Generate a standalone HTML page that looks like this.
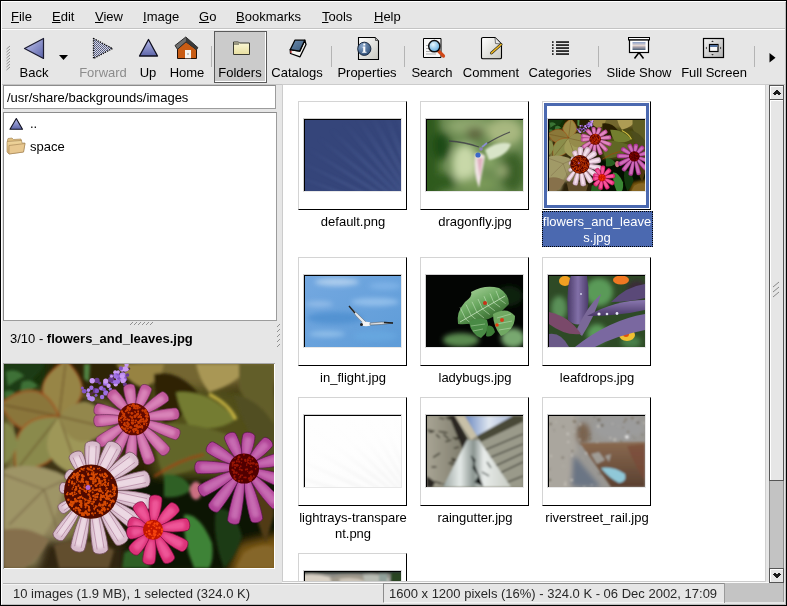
<!DOCTYPE html><html><head><meta charset="utf-8"><style>
*{margin:0;padding:0;box-sizing:border-box}
html,body{width:787px;height:606px;overflow:hidden;background:#e6e6e6}
body{position:relative;-webkit-font-smoothing:antialiased;font-family:"Liberation Sans",sans-serif;font-size:13px;color:#000}
.a{position:absolute}
.t{position:absolute;white-space:pre;line-height:16px;will-change:transform}
.c{text-align:center}
.u{text-decoration:underline;text-underline-offset:1px}
svg{position:absolute;overflow:hidden}
.fr{position:absolute;width:109px;height:109px;background:#fff;border-top:1px solid #d4d4d4;border-left:1px solid #d4d4d4;border-right:1px solid #000;border-bottom:1px solid #000}
.im{position:absolute;width:99px;height:74px;border-top:1px solid #d0d0d0;border-left:1px solid #d0d0d0;border-right:1px solid #e8e8e8;border-bottom:1px solid #e8e8e8}
.im2{position:absolute;left:0;top:0;width:97px;height:72px;border-top:1px solid #000;border-left:1px solid #000;overflow:hidden}
.lb{position:absolute;will-change:transform;width:122px;text-align:center;line-height:16px;white-space:pre}
</style></head><body>
<div class="a" style="left:0px;top:0px;width:787px;height:606px;background:#000"></div>
<div class="a" style="left:1px;top:1px;width:785px;height:604px;background:#e6e6e6"></div>
<div class="a" style="left:1px;top:1px;width:785px;height:1px;background:#fff"></div>
<div class="a" style="left:1px;top:1px;width:1px;height:603px;background:#fff"></div>
<div class="a" style="left:785px;top:2px;width:1px;height:603px;background:#bdbdbd"></div>
<div class="a" style="left:2px;top:604px;width:784px;height:1px;background:#bdbdbd"></div>
<div class="t" style="left:11px;top:9px;"><span class="u">F</span>ile</div>
<div class="t" style="left:52px;top:9px;"><span class="u">E</span>dit</div>
<div class="t" style="left:95px;top:9px;"><span class="u">V</span>iew</div>
<div class="t" style="left:143px;top:9px;"><span class="u">I</span>mage</div>
<div class="t" style="left:199px;top:9px;"><span class="u">G</span>o</div>
<div class="t" style="left:236px;top:9px;"><span class="u">B</span>ookmarks</div>
<div class="t" style="left:322px;top:9px;"><span class="u">T</span>ools</div>
<div class="t" style="left:374px;top:9px;"><span class="u">H</span>elp</div>
<div class="a" style="left:2px;top:28px;width:783px;height:1px;background:#c4c4c4"></div>
<div class="a" style="left:2px;top:29px;width:783px;height:1px;background:#fff"></div>

<div class="a" style="left:214px;top:31px;width:53px;height:52px;border:1px solid #5a5a5a;background:#cbcbcb"></div>
<div class="a" style="left:215px;top:81px;width:51px;height:1px;background:#fff"></div>
<div class="a" style="left:265px;top:32px;width:1px;height:50px;background:#fff"></div>
<svg style="left:0;top:0" width="787" height="90" viewBox="0 0 787 90">
<defs>
<linearGradient id="gb" x1="0" y1="0" x2="1" y2="1"><stop offset="0" stop-color="#c4c8f0"/><stop offset="1" stop-color="#5a62a8"/></linearGradient>
<linearGradient id="gu" x1="0" y1="0" x2="0" y2="1"><stop offset="0" stop-color="#b8bcec"/><stop offset="1" stop-color="#5c64a8"/></linearGradient>
<pattern id="chk" width="2" height="2" patternUnits="userSpaceOnUse"><rect width="2" height="2" fill="#d8d8e0"/><rect width="1" height="1" fill="#505880"/><rect x="1" y="1" width="1" height="1" fill="#606890"/></pattern>
<linearGradient id="gf" x1="0" y1="0" x2="0" y2="1"><stop offset="0" stop-color="#fbf8d8"/><stop offset="1" stop-color="#e8dfa0"/></linearGradient>
<linearGradient id="gp" x1="0" y1="0" x2="1" y2="1"><stop offset="0" stop-color="#ffffff"/><stop offset="1" stop-color="#c8c8c0"/></linearGradient>
<linearGradient id="gfs" x1="0" y1="0" x2="1" y2="1"><stop offset="0" stop-color="#f4f4f4"/><stop offset="1" stop-color="#b0b0b0"/></linearGradient>
<radialGradient id="gl" cx="0.4" cy="0.35" r="0.7"><stop offset="0" stop-color="#e8f8ff"/><stop offset="1" stop-color="#58a8e0"/></radialGradient>
<radialGradient id="gi" cx="0.35" cy="0.3" r="0.8"><stop offset="0" stop-color="#8aa8cc"/><stop offset="1" stop-color="#284870"/></radialGradient>
<linearGradient id="gss" x1="0" y1="0" x2="0" y2="1"><stop offset="0" stop-color="#8aa0c8"/><stop offset="0.45" stop-color="#e8d8d0"/><stop offset="0.6" stop-color="#b0a8b0"/><stop offset="1" stop-color="#4a6078"/></linearGradient>
<linearGradient id="gbk" x1="0" y1="0" x2="1" y2="1"><stop offset="0" stop-color="#6a8cb0"/><stop offset="1" stop-color="#3a5878"/></linearGradient>
</defs>
<!-- grip -->
<g stroke="#8a8a8a" stroke-width="0.9">
<path d="M6.5 49l3.5-3M6.5 52l3.5-3M6.5 55l3.5-3M6.5 58l3.5-3M6.5 61l3.5-3M6.5 64l3.5-3M6.5 67l3.5-3M6.5 70l3.5-3"/>
</g>
<!-- back -->
<path d="M24.5 48.5 L43.5 38.5 L43.5 58.5 Z" fill="url(#gb)" stroke="#1a1a30" stroke-width="1.2" stroke-linejoin="round"/>
<path d="M59 55 L68 55 L63.5 60 Z" fill="#000"/>
<!-- forward -->
<path d="M93.5 38.5 L112.5 48.5 L93.5 58.5 Z" fill="url(#chk)" stroke="#000" stroke-width="1.3" stroke-dasharray="1.2 1.2" stroke-linejoin="round"/>
<!-- up -->
<path d="M148.5 39.5 L157.5 56 L139.5 56 Z" fill="url(#gu)" stroke="#101020" stroke-width="1.3" stroke-linejoin="round"/>
<!-- home -->
<path d="M177.5 48.5 L186 41.5 L196.5 49.5 L196.5 58.5 L177.5 58.5 Z" fill="#c85c14" stroke="#201008" stroke-width="1"/>
<path d="M175 45.5 L185.8 37 L197.8 47.5 L196.5 49.8 L186 41.8 L177.5 49.3 Z" fill="#6e6e6e" stroke="#2a2a2a" stroke-width="1" stroke-linejoin="round"/>
<path d="M185.8 37 L197.8 47.5 L196.5 49.8 L186 41.8 Z" fill="#3a3a3a"/>
<rect x="185" y="50" width="6" height="8.3" fill="#f4f4f0"/>
<rect x="187.5" y="53.5" width="1" height="1" fill="#333"/>
<!-- folder -->
<path d="M233.5 42 L238.5 42 L239.5 43 L249.5 43 L249.5 54.5 L233.5 54.5 Z" fill="url(#gf)" stroke="#3a3a30" stroke-width="1"/>
<path d="M234 44h5" stroke="#3a3a30" stroke-width="1"/>
<!-- book -->
<path d="M290.2 49.7 L299.7 51.1 L304.8 40.2 L306 44.5 L300 56.8 L290.5 53.5 Z" fill="#f4f4f0" stroke="#000" stroke-width="1.3" stroke-linejoin="round"/>
<path d="M291 50.5 L291 53" stroke="#d04040" stroke-width="1.3"/>
<path d="M294.9 40.2 L304.8 40.2 L299.7 51.1 L290.2 49.7 Z" fill="url(#gbk)" stroke="#000" stroke-width="1.3" stroke-linejoin="round"/>
<!-- properties -->
<path d="M358.5 37.5 L375 37.5 L378.5 41 L378.5 59.5 L358.5 59.5 Z" fill="url(#gp)" stroke="#000" stroke-width="1.1"/>
<path d="M375.5 38 L375.5 40.5 L378 40.5" stroke="#555" stroke-width="1" fill="#bbb"/>
<circle cx="364.3" cy="48.8" r="6.6" fill="url(#gi)" stroke="#1a2a40" stroke-width="1"/>
<path d="M363.2 46.5h2.1v5.2h1.2v1h-4.3v-1h1v-4.2h-1z M363.3 43.6h2v1.8h-2z" fill="#fff"/>
<!-- search -->
<path d="M423.5 38.5 L441 38.5 L441 57.5 L423.5 57.5 Z" fill="#f8f8f8" stroke="#000" stroke-width="1"/>
<path d="M426 45.5h4M426 48.5h4M426 51.5h6M426 54h10" stroke="#999" stroke-width="0.8"/>
<path d="M438.5 51 L443.5 56" stroke="#d04818" stroke-width="3.2" stroke-linecap="round"/>
<circle cx="434.3" cy="46.2" r="5.6" fill="url(#gl)" stroke="#101010" stroke-width="1.5"/>
<!-- comment -->
<path d="M481.5 38.5 Q481.5 37.5 483 37.5 L495 37.5 L501.5 44 L501.5 57.5 Q501.5 58.8 500 58.8 L483 58.8 Q481.5 58.8 481.5 57.5 Z" fill="url(#gp)" stroke="#000" stroke-width="1.1"/>
<path d="M495 37.8 L495.5 43.5 L501.2 44" fill="#e8e8e8" stroke="#555" stroke-width="0.8"/>
<path d="M491.5 53 L501 44.5" stroke="#303020" stroke-width="3" stroke-linecap="round"/>
<path d="M491.5 53 L501 44.5" stroke="#f0b820" stroke-width="1.6" stroke-linecap="round"/>
<!-- categories -->
<g fill="#000">
<rect x="552" y="41.3" width="1.6" height="1.5"/><rect x="552" y="44.3" width="1.6" height="1.5"/><rect x="552" y="47.3" width="1.6" height="1.5"/><rect x="552" y="50.3" width="1.6" height="1.5"/><rect x="552" y="53.3" width="1.6" height="1.5"/>
<rect x="556" y="41.3" width="13" height="1.5"/><rect x="556" y="44.3" width="13" height="1.5"/><rect x="556" y="47.3" width="13" height="1.5"/><rect x="556" y="50.3" width="13" height="1.5"/><rect x="556" y="53.3" width="13" height="1.5"/>
</g>
<!-- slide show -->
<rect x="628.5" y="37.5" width="21" height="2.5" fill="#fff" stroke="#000" stroke-width="1"/>
<rect x="629.5" y="40" width="19" height="12.5" fill="#fff" stroke="#000" stroke-width="1.2"/>
<rect x="632.5" y="42" width="13" height="8" fill="url(#gss)"/>
<path d="M639 52.5 L634.5 58.5 M639 52.5 L643.5 58.5" stroke="#000" stroke-width="1.5"/>
<!-- full screen -->
<rect x="703.5" y="38.5" width="20" height="19" fill="url(#gfs)" stroke="#000" stroke-width="1.2"/>
<rect x="709.5" y="44.5" width="8.5" height="7" fill="#f8f8f8" stroke="#000" stroke-width="1.2"/>
<rect x="710" y="45" width="7.5" height="2" fill="#5070a0"/>
<path d="M712.5 40.5l1.3 1.5h-2.6z M712.5 55.5l1.3-1.5h-2.6z M705.5 48l1.5-1.3v2.6z M721.5 48l-1.5-1.3v2.6z" fill="#333"/>
<!-- overflow arrow -->
<path d="M769.5 53 L775.5 57.8 L769.5 62.5 Z" fill="#000"/>
</svg>

<div class="t c" style="left:-16.3px;top:65px;width:100px;color:#000">Back</div>
<div class="t c" style="left:52.8px;top:65px;width:100px;color:#8c8c8c">Forward</div>
<div class="t c" style="left:97.8px;top:65px;width:100px;color:#000">Up</div>
<div class="t c" style="left:136.9px;top:65px;width:100px;color:#000">Home</div>
<div class="t c" style="left:190.3px;top:65px;width:100px;color:#000">Folders</div>
<div class="t c" style="left:247.4px;top:65px;width:100px;color:#000">Catalogs</div>
<div class="t c" style="left:317.1px;top:65px;width:100px;color:#000">Properties</div>
<div class="t c" style="left:382.4px;top:65px;width:100px;color:#000">Search</div>
<div class="t c" style="left:440.8px;top:65px;width:100px;color:#000">Comment</div>
<div class="t c" style="left:509.9px;top:65px;width:100px;color:#000">Categories</div>
<div class="t c" style="left:588.8px;top:65px;width:100px;color:#000">Slide Show</div>
<div class="t c" style="left:663.7px;top:65px;width:100px;color:#000">Full Screen</div>
<div class="a" style="left:211px;top:46px;width:1px;height:21px;background:#b4b4b4"></div>
<div class="a" style="left:331px;top:46px;width:1px;height:21px;background:#b4b4b4"></div>
<div class="a" style="left:404px;top:46px;width:1px;height:21px;background:#b4b4b4"></div>
<div class="a" style="left:598px;top:46px;width:1px;height:21px;background:#b4b4b4"></div>
<div class="a" style="left:754px;top:46px;width:1px;height:21px;background:#b4b4b4"></div>
<div class="a" style="left:2px;top:84px;width:783px;height:1px;background:#c4c4c4"></div>
<div class="a" style="left:3px;top:85px;width:273px;height:24px;border:1px solid #8c8c8c;border-bottom-color:#9c9c9c;border-right-color:#9c9c9c;background:#fff"></div>
<div class="t" style="left:7px;top:90px;">/usr/share/backgrounds/images</div>
<div class="a" style="left:3px;top:112px;width:274px;height:209px;border:1px solid #8c8c8c;border-bottom-color:#9c9c9c;border-right-color:#9c9c9c;background:#fff"></div>

<svg style="left:0;top:110px" width="40" height="50" viewBox="0 110 40 50">
<defs>
<linearGradient id="gu2" x1="0" y1="0" x2="0" y2="1"><stop offset="0" stop-color="#b8bcec"/><stop offset="1" stop-color="#5c64a8"/></linearGradient>
<linearGradient id="gfo" x1="0" y1="0" x2="0" y2="1"><stop offset="0" stop-color="#f0d8a0"/><stop offset="1" stop-color="#d8b070"/></linearGradient>
</defs>
<path d="M16.3 118.5 L22.5 129.3 L10 129.3 Z" fill="url(#gu2)" stroke="#101020" stroke-width="1.1" stroke-linejoin="round"/>
<path d="M7.5 140 L8 138.5 L12 138 L13.5 139.5 L21 139 L21.5 141 L7.5 143 Z" fill="#e0c080" stroke="#a08050" stroke-width="0.6"/>
<path d="M7 141.5 L21.5 140.5 L22 143 L25 143 L23.5 152 L9 154 L7 152 Z" fill="url(#gfo)" stroke="#a08050" stroke-width="0.6"/>
<path d="M9 145.5 L25 143.5 L23.5 152 L9 154 Z" fill="#e8c890" stroke="#a08050" stroke-width="0.6"/>
</svg>

<div class="t" style="left:30px;top:116px;">..</div>
<div class="t" style="left:30px;top:139px;">space</div>

<svg style="left:120px;top:318px" width="40" height="10" viewBox="120 318 40 10">
<path d="M130 325l3-3M134 325l3-3M138 325l3-3M142 325l3-3M146 325l3-3M150 325l3-3" stroke="#909090" stroke-width="1"/>
</svg>
<svg style="left:274px;top:318px" width="10" height="34" viewBox="274 318 10 34">
<path d="M277 327l3-3M277 332l3-3M277 337l3-3M277 342l3-3M277 347l3-3" stroke="#909090" stroke-width="1"/>
</svg>

<div class="t" style="left:10px;top:331px;">3/10 - <b>flowers_and_leaves.jpg</b></div>
<div class="a" style="left:3px;top:363px;width:272px;height:206px;background:#fff;border-top:1px solid #a8a8a8;border-left:1px solid #a8a8a8"></div><svg style="left:4px;top:364px" width="270" height="204" viewBox="0 0 270 203" preserveAspectRatio="none"><defs>
<filter id="b1P" x="-20%" y="-20%" width="140%" height="140%"><feGaussianBlur stdDeviation="5"/></filter>
<filter id="b2P" x="-20%" y="-20%" width="140%" height="140%"><feGaussianBlur stdDeviation="1.5"/></filter>
<filter id="b3P" x="-20%" y="-20%" width="140%" height="140%"><feGaussianBlur stdDeviation="0.5"/></filter>
<filter id="b4P" x="-50%" y="-50%" width="200%" height="200%"><feGaussianBlur stdDeviation="1.6"/></filter>
<filter id="ctP" x="0" y="0" width="100%" height="100%" color-interpolation-filters="sRGB"><feComponentTransfer><feFuncR type="linear" slope="1.1" intercept="-0.07"/><feFuncG type="linear" slope="1.1" intercept="-0.08"/><feFuncB type="linear" slope="1.1" intercept="-0.08"/></feComponentTransfer></filter>
<filter id="ctT" x="0" y="0" width="100%" height="100%" color-interpolation-filters="sRGB"><feComponentTransfer><feFuncR type="linear" slope="1.2" intercept="-0.12"/><feFuncG type="linear" slope="1.2" intercept="-0.12"/><feFuncB type="linear" slope="1.2" intercept="-0.12"/></feComponentTransfer></filter>
<linearGradient id="pkP" x1="0" y1="0" x2="1" y2="1"><stop offset="0" stop-color="#e8a8d0"/><stop offset="1" stop-color="#c05898"/></linearGradient>
<linearGradient id="plP" x1="0" y1="0" x2="1" y2="1"><stop offset="0" stop-color="#ecd4e0"/><stop offset="1" stop-color="#b88aa8"/></linearGradient>
<linearGradient id="pmP" x1="0" y1="0" x2="1" y2="1"><stop offset="0" stop-color="#e090d0"/><stop offset="1" stop-color="#a84898"/></linearGradient>
<linearGradient id="phP" x1="0" y1="0" x2="1" y2="1"><stop offset="0" stop-color="#f870a8"/><stop offset="1" stop-color="#d03078"/></linearGradient>
</defs>
<g filter="url(#ctP)">
<rect width="270" height="203" fill="#3a3418"/>
<g filter="url(#b1P)">
<rect x="-10" y="-10" width="55" height="50" fill="#26401e"/>
<path d="M0 35 L60 25 L110 40 L115 100 L90 170 L40 180 L0 175 Z" fill="#7e7c48"/>
<path d="M0 105 L55 100 L65 175 L30 203 L0 203 Z" fill="#948c66"/>
<path d="M40 175 L130 180 L135 210 L30 210 Z" fill="#3e3422"/>
<path d="M110 -10 L280 -10 L280 20 L160 25 Z" fill="#7a7040"/>
<path d="M145 20 L280 30 L280 110 L200 120 L150 110 Z" fill="#5a5a2c"/>
<path d="M120 110 L280 115 L280 210 L120 210 Z" fill="#1c2812"/>
<path d="M235 180 L280 170 L280 210 L225 210 Z" fill="#806428"/>
</g>
<g filter="url(#b2P)">
<path d="M0 0 L40 0 Q35 12 22 20 Q12 30 0 38 Z" fill="#2a4a26"/>
<path d="M2 8 Q12 4 20 12 Q12 16 4 22 Z M18 18 Q28 14 34 22 Q25 28 16 28 Z M0 28 Q8 24 14 32 L2 38 Z" fill="#4a7a44"/>
<path d="M10 30 Q50 20 100 40 L100 110 Q60 120 10 105 Z" fill="#4a4228"/>
<path d="M55.0 52.0 Q97.8 31.8 62.0 -4.0 Q18.5 21.8 55.0 52.0 Z" fill="#9a8c52"/>
<path d="M55.0 52.0 Q97.8 31.8 62.0 -4.0 Q18.5 21.8 55.0 52.0 Z" fill="none" stroke="#a04a20" stroke-width="1.6" opacity="0.8"/>
<path d="M55 52 L62 -4" stroke="#5a3a20" stroke-width="1" opacity="0.7"/>
<path d="M55.0 52.0 Q36.4 7.4 -4.0 40.0 Q20.5 85.8 55.0 52.0 Z" fill="#8e7e48"/>
<path d="M55.0 52.0 Q36.4 7.4 -4.0 40.0 Q20.5 85.8 55.0 52.0 Z" fill="none" stroke="#a85024" stroke-width="1.6" opacity="0.8"/>
<path d="M55 52 L-4 40" stroke="#5a3a20" stroke-width="1" opacity="0.7"/>
<path d="M55.0 52.0 Q2.8 50.1 12.0 106.0 Q68.5 102.5 55.0 52.0 Z" fill="#8e9058"/>
<path d="M55.0 52.0 Q2.8 50.1 12.0 106.0 Q68.5 102.5 55.0 52.0 Z" fill="none" stroke="#b05a24" stroke-width="1.6" opacity="0.8"/>
<path d="M55 52 L12 106" stroke="#5a3a20" stroke-width="1" opacity="0.7"/>
<path d="M55.0 52.0 Q22.9 93.5 76.0 112.0 Q106.0 64.5 55.0 52.0 Z" fill="#a09c64"/>
<path d="M55 52 L76 112" stroke="#5a3a20" stroke-width="1" opacity="0.7"/>
<path d="M55.0 52.0 Q68.8 96.3 106.0 64.0 Q87.1 18.5 55.0 52.0 Z" fill="#968e58"/>
<path d="M55 52 L106 64" stroke="#5a3a20" stroke-width="1" opacity="0.7"/>
<path d="M0 58 Q10 60 14 80 Q8 95 0 100 Z" fill="#8a9058"/>
<path d="M0 105 Q30 95 62 112 Q55 150 40 170 Q15 175 0 170 Z" fill="#a09a70"/>
<path d="M40 125 L0 110 M40 125 L5 160 M40 125 L55 170 M40 125 L62 115" stroke="#6a5a40" stroke-width="1" fill="none" opacity="0.8"/>
<path d="M0 165 Q25 160 45 175 Q35 195 20 203 L0 203 Z" fill="#8a7858"/>
<path d="M50 180 Q80 170 110 185 L105 203 L55 203 Z" fill="#6a5a3c"/>
<path d="M112 0 L160 0 Q158 15 140 24 Q125 20 112 0 Z" fill="#9a8a50"/>
<path d="M192 0 L245 0 Q235 20 205 28 Q195 15 192 0 Z" fill="#aa9c60"/>
<path d="M150 10 Q175 5 195 30 Q180 55 160 60 Q150 40 150 10 Z" fill="#3a3218"/>
<path d="M172 28 Q205 25 232 55 Q215 68 185 62 Q175 45 172 28 Z" fill="#7a8440"/>
<path d="M205 30 Q225 40 232 55" stroke="#c8b850" stroke-width="3" fill="none"/>
<path d="M235 0 L270 0 L270 60 Q248 50 235 25 Z" fill="#6a6838"/>
<path d="M230 30 Q255 35 270 60 L270 95 Q245 80 230 30 Z" fill="#5a5a30"/>
<path d="M150 60 Q190 55 235 75 Q210 105 160 112 Q150 90 150 60 Z" fill="#6a7038"/>
<path d="M150 112 Q175 95 200 90" stroke="#a05024" stroke-width="2" fill="none"/>
<path d="M160 110 Q180 108 188 125 Q175 135 160 132 Z" fill="#3a6a34"/>
<path d="M180 150 Q195 148 208 178 Q210 195 205 203 L190 203 Q178 175 180 150 Z" fill="#4a8a44"/>
<path d="M212 145 Q230 140 238 172 Q230 195 220 203 Q208 172 212 145 Z" fill="#2a4a26"/>
<path d="M120 188 Q135 178 150 192 L145 203 L118 203 Z" fill="#3a6a34"/>
<path d="M250 120 Q270 115 270 150 L262 178 Q248 150 250 120 Z" fill="#5a4828"/>
<path d="M240 188 Q255 178 270 182 L270 203 L232 203 Z" fill="#8a7038"/>
<path d="M80 0 L86 0 L85 18 L80 15 Z" fill="#5a8a50"/>
<ellipse cx="192" cy="126" rx="6" ry="9" fill="#c87888"/>
</g>
<g filter="url(#b3P)">
<path d="M84 32 Q100 20 126 4" stroke="#5a3a50" stroke-width="2" fill="none"/>
<circle cx="101.8" cy="28.8" r="2.6" fill="#a078e0"/>
<circle cx="78.4" cy="23.9" r="1.5" fill="#8a60c8"/>
<circle cx="104.2" cy="20.8" r="1.6" fill="#704898"/>
<circle cx="114.4" cy="13.9" r="2.7" fill="#c8a0f0"/>
<circle cx="97.3" cy="24.1" r="2.2" fill="#a078e0"/>
<circle cx="84.1" cy="31.3" r="1.9" fill="#c8a0f0"/>
<circle cx="121.1" cy="15.1" r="2.0" fill="#8a60c8"/>
<circle cx="108.6" cy="17.3" r="2.1" fill="#8a60c8"/>
<circle cx="107.3" cy="11.6" r="2.0" fill="#704898"/>
<circle cx="98.1" cy="32.9" r="2.2" fill="#a078e0"/>
<circle cx="111.8" cy="11.6" r="2.3" fill="#b890f0"/>
<circle cx="84.1" cy="29.7" r="1.7" fill="#b890f0"/>
<circle cx="111.7" cy="20.1" r="2.2" fill="#c8a0f0"/>
<circle cx="117.8" cy="14.6" r="2.1" fill="#c8a0f0"/>
<circle cx="119.5" cy="10.6" r="2.1" fill="#b890f0"/>
<circle cx="119.1" cy="16.3" r="2.8" fill="#c8a0f0"/>
<circle cx="117.5" cy="13.8" r="1.5" fill="#b890f0"/>
<circle cx="104.6" cy="21.2" r="1.8" fill="#a078e0"/>
<circle cx="95.7" cy="18.9" r="1.6" fill="#704898"/>
<circle cx="93.0" cy="16.3" r="2.6" fill="#704898"/>
<circle cx="91.6" cy="26.6" r="2.7" fill="#704898"/>
<circle cx="92.0" cy="31.0" r="1.5" fill="#8a60c8"/>
<circle cx="120.6" cy="12.4" r="2.0" fill="#8a60c8"/>
<circle cx="88.2" cy="16.7" r="2.7" fill="#c8a0f0"/>
<circle cx="111.2" cy="8.1" r="2.0" fill="#c8a0f0"/>
<circle cx="106.4" cy="25.1" r="1.7" fill="#a078e0"/>
<circle cx="123.1" cy="5.3" r="1.6" fill="#c8a0f0"/>
<circle cx="85.4" cy="33.9" r="2.3" fill="#b890f0"/>
<circle cx="88.2" cy="34.7" r="2.7" fill="#b890f0"/>
<circle cx="106.9" cy="15.5" r="2.8" fill="#704898"/>
<circle cx="101.5" cy="19.2" r="2.5" fill="#a078e0"/>
<circle cx="107.5" cy="12.3" r="1.5" fill="#c8a0f0"/>
<circle cx="121.2" cy="4.9" r="2.7" fill="#c8a0f0"/>
<circle cx="113.7" cy="17.6" r="2.4" fill="#a078e0"/>
<circle cx="92.9" cy="26.9" r="2.2" fill="#8a60c8"/>
<circle cx="115.0" cy="13.3" r="2.5" fill="#8a60c8"/>
<circle cx="118.1" cy="5.5" r="2.1" fill="#c8a0f0"/>
<circle cx="123.5" cy="11.0" r="1.8" fill="#704898"/>
<circle cx="118.3" cy="11.1" r="2.7" fill="#b890f0"/>
<circle cx="100.0" cy="25.3" r="1.9" fill="#8a60c8"/>
<circle cx="111.1" cy="17.9" r="2.1" fill="#a078e0"/>
<circle cx="112.1" cy="11.7" r="2.7" fill="#a078e0"/>
<circle cx="116.9" cy="4.4" r="2.1" fill="#8a60c8"/>
<circle cx="121.0" cy="20.5" r="2.1" fill="#704898"/>
<circle cx="117.8" cy="12.7" r="1.5" fill="#8a60c8"/>
<circle cx="101.7" cy="17.0" r="2.6" fill="#c8a0f0"/>
<circle cx="122.6" cy="0.7" r="2.2" fill="#c8a0f0"/>
<circle cx="87.4" cy="23.7" r="2.2" fill="#a078e0"/>
<circle cx="113.9" cy="10.0" r="1.5" fill="#8a60c8"/>
<circle cx="84.4" cy="26.0" r="1.8" fill="#b890f0"/>
<circle cx="109.1" cy="28.3" r="2.7" fill="#b890f0"/>
<circle cx="114.2" cy="7.9" r="1.7" fill="#c8a0f0"/>
<circle cx="80.2" cy="27.1" r="2.3" fill="#8a60c8"/>
<circle cx="118.2" cy="12.5" r="2.4" fill="#c8a0f0"/>
<circle cx="104.6" cy="21.8" r="2.1" fill="#c8a0f0"/>
</g>
<g filter="url(#b3P)">
<path d="M122.1 49.9 C112.8 43.5 95.1 38.7 93.7 39.3 C90.4 40.3 88.6 47.3 91.1 49.8 C92.0 50.9 109.9 55.1 121.0 54.0 Z" fill="#c064a0" stroke="#703860" stroke-width="0.7"/>
<path d="M118.1 49.3 C111.0 45.3 97.7 42.0 96.9 42.4 C94.9 43.1 93.9 47.3 95.4 48.7 C96.0 49.4 109.4 52.3 117.5 51.8 Z" fill="#e4a4cc" opacity="0.6" filter="url(#b4P)"/>
<path d="M126.0 46.5 C122.9 37.2 112.7 25.5 111.2 25.2 C107.9 24.2 102.5 29.0 103.2 32.4 C103.3 33.9 114.0 45.2 122.9 49.3 Z" fill="#c064a0" stroke="#703860" stroke-width="0.7"/>
<path d="M122.9 43.9 C120.3 37.7 112.9 29.6 112.0 29.4 C110.0 28.8 106.9 31.8 107.3 33.9 C107.4 34.7 115.1 42.6 121.1 45.6 Z" fill="#e4a4cc" opacity="0.6" filter="url(#b4P)"/>
<path d="M130.8 45.8 C133.4 36.8 131.4 22.4 130.3 21.4 C128.1 18.7 121.0 19.8 119.7 23.1 C119.0 24.4 121.5 38.7 126.7 46.4 Z" fill="#c064a0" stroke="#703860" stroke-width="0.7"/>
<path d="M129.4 41.9 C130.8 35.9 129.4 26.0 128.7 25.4 C127.4 23.7 123.1 24.4 122.3 26.4 C121.9 27.2 123.7 37.0 126.9 42.3 Z" fill="#e4a4cc" opacity="0.6" filter="url(#b4P)"/>
<path d="M135.0 47.3 C142.0 40.6 148.0 26.7 147.7 25.2 C147.1 21.8 140.5 19.0 137.7 21.1 C136.4 21.9 130.9 36.1 131.1 45.7 Z" fill="#c064a0" stroke="#703860" stroke-width="0.7"/>
<path d="M135.6 43.3 C140.2 38.5 144.5 28.8 144.3 27.9 C144.0 25.8 140.0 24.1 138.3 25.4 C137.5 25.8 133.5 35.7 133.3 42.3 Z" fill="#e4a4cc" opacity="0.6" filter="url(#b4P)"/>
<path d="M138.1 50.9 C148.9 48.1 164.1 37.8 164.5 36.3 C165.9 33.1 161.8 27.3 158.3 27.5 C156.8 27.5 142.0 38.3 135.7 47.5 Z" fill="#c064a0" stroke="#703860" stroke-width="0.7"/>
<path d="M140.7 47.7 C148.4 45.3 159.9 37.7 160.2 36.9 C161.0 35.0 158.6 31.4 156.5 31.5 C155.6 31.5 144.4 39.3 139.3 45.6 Z" fill="#e4a4cc" opacity="0.6" filter="url(#b4P)"/>
<path d="M139.0 55.2 C151.4 57.8 172.5 55.8 173.6 54.7 C176.4 52.6 175.6 45.5 172.4 44.0 C171.2 43.2 150.1 45.8 138.6 51.0 Z" fill="#c064a0" stroke="#703860" stroke-width="0.7"/>
<path d="M142.8 53.6 C152.3 55.0 168.8 53.7 169.4 53.1 C171.1 51.9 170.7 47.6 168.8 46.7 C168.1 46.2 151.6 47.9 142.6 51.0 Z" fill="#e4a4cc" opacity="0.6" filter="url(#b4P)"/>
<path d="M138.0 59.3 C148.8 67.5 170.1 75.7 171.6 75.3 C175.0 74.7 177.5 67.9 175.3 65.2 C174.5 63.9 153.0 56.2 139.4 55.4 Z" fill="#c064a0" stroke="#703860" stroke-width="0.7"/>
<path d="M142.1 59.5 C150.7 65.4 167.6 72.2 168.4 71.9 C170.5 71.6 172.1 67.5 170.8 65.9 C170.3 65.1 153.3 58.7 143.0 57.2 Z" fill="#e4a4cc" opacity="0.6" filter="url(#b4P)"/>
<path d="M135.2 62.5 C141.2 74.4 156.6 90.7 158.1 91.0 C161.4 91.9 166.6 86.9 165.8 83.5 C165.7 82.0 149.8 66.0 138.2 59.6 Z" fill="#c064a0" stroke="#703860" stroke-width="0.7"/>
<path d="M138.7 64.6 C143.8 73.3 155.7 86.3 156.6 86.4 C158.6 87.0 161.8 84.0 161.3 82.0 C161.2 81.1 149.0 68.4 140.6 62.8 Z" fill="#e4a4cc" opacity="0.6" filter="url(#b4P)"/>
<path d="M131.4 64.1 C132.1 77.3 139.4 98.3 140.7 99.1 C143.4 101.4 150.1 98.9 150.8 95.5 C151.2 94.0 143.3 73.2 135.3 62.6 Z" fill="#c064a0" stroke="#703860" stroke-width="0.7"/>
<path d="M133.7 67.5 C134.8 77.4 140.4 93.9 141.2 94.4 C142.8 95.7 146.9 94.2 147.3 92.2 C147.6 91.3 141.5 75.0 136.1 66.6 Z" fill="#e4a4cc" opacity="0.6" filter="url(#b4P)"/>
<path d="M127.1 63.8 C122.2 76.2 120.2 98.5 121.0 99.8 C122.5 102.9 129.7 103.5 131.7 100.6 C132.7 99.5 134.2 77.1 131.3 64.1 Z" fill="#c064a0" stroke="#703860" stroke-width="0.7"/>
<path d="M127.6 67.9 C124.5 77.5 123.0 94.9 123.5 95.6 C124.4 97.5 128.7 97.9 129.9 96.1 C130.5 95.5 131.7 78.0 130.1 68.0 Z" fill="#e4a4cc" opacity="0.6" filter="url(#b4P)"/>
<path d="M123.4 61.6 C114.1 70.4 103.4 88.9 103.6 90.4 C103.7 93.9 110.0 97.4 113.0 95.7 C114.4 95.1 124.5 76.2 127.1 63.7 Z" fill="#c064a0" stroke="#703860" stroke-width="0.7"/>
<path d="M122.0 65.4 C115.5 72.5 107.4 86.9 107.5 87.8 C107.6 89.9 111.4 92.0 113.2 90.9 C114.1 90.5 121.8 75.9 124.2 66.6 Z" fill="#e4a4cc" opacity="0.6" filter="url(#b4P)"/>
<path d="M121.0 57.8 C109.4 61.1 92.7 72.3 92.3 73.8 C90.8 77.0 95.0 82.9 98.4 82.6 C99.9 82.7 116.2 71.0 123.4 61.2 Z" fill="#c064a0" stroke="#703860" stroke-width="0.7"/>
<path d="M118.0 60.5 C109.7 63.6 97.2 72.4 96.9 73.3 C96.1 75.2 98.6 78.7 100.7 78.5 C101.6 78.5 113.9 69.5 119.5 62.5 Z" fill="#e4a4cc" opacity="0.6" filter="url(#b4P)"/>
<path d="M120.9 52.6 C110.4 49.4 92.8 50.3 91.6 51.3 C88.8 53.3 89.3 60.5 92.4 62.1 C93.7 62.9 111.3 61.4 121.2 56.8 Z" fill="#c064a0" stroke="#703860" stroke-width="0.7"/>
<path d="M116.9 53.3 C109.3 51.7 96.4 52.7 95.7 53.3 C94.0 54.6 94.4 58.9 96.3 59.8 C97.1 60.2 110.0 58.8 117.1 55.8 Z" fill="#e4a4cc" opacity="0.6" filter="url(#b4P)"/>
<circle cx="130" cy="55" r="16" fill="#6a1a08"/>
<circle cx="127.8" cy="49.4" r="1.1" fill="#c84a14"/>
<circle cx="132.2" cy="65.0" r="1.2" fill="#c84a14"/>
<circle cx="116.8" cy="54.0" r="1.0" fill="#c84a14"/>
<circle cx="137.2" cy="55.1" r="0.9" fill="#c84a14"/>
<circle cx="140.2" cy="59.7" r="1.2" fill="#c84a14"/>
<circle cx="130.8" cy="62.1" r="0.7" fill="#c84a14"/>
<circle cx="129.0" cy="40.3" r="1.2" fill="#c84a14"/>
<circle cx="141.3" cy="57.5" r="0.9" fill="#c84a14"/>
<circle cx="137.8" cy="61.9" r="1.3" fill="#c84a14"/>
<circle cx="135.0" cy="62.4" r="1.2" fill="#c84a14"/>
<circle cx="134.7" cy="52.7" r="1.0" fill="#c84a14"/>
<circle cx="124.0" cy="64.1" r="1.0" fill="#c84a14"/>
<circle cx="136.2" cy="56.5" r="1.2" fill="#c84a14"/>
<circle cx="131.3" cy="48.0" r="0.8" fill="#c84a14"/>
<circle cx="141.4" cy="46.0" r="1.2" fill="#c84a14"/>
<circle cx="118.8" cy="48.8" r="1.1" fill="#c84a14"/>
<circle cx="124.9" cy="55.8" r="1.2" fill="#c84a14"/>
<circle cx="135.8" cy="51.9" r="1.2" fill="#c84a14"/>
<circle cx="123.8" cy="62.1" r="1.0" fill="#c84a14"/>
<circle cx="139.1" cy="54.7" r="0.9" fill="#c84a14"/>
<circle cx="132.0" cy="56.3" r="1.1" fill="#c84a14"/>
<circle cx="115.3" cy="55.4" r="1.0" fill="#c84a14"/>
<circle cx="129.9" cy="44.1" r="0.8" fill="#c84a14"/>
<circle cx="119.2" cy="51.0" r="1.1" fill="#c84a14"/>
<circle cx="133.0" cy="60.5" r="0.9" fill="#c84a14"/>
<circle cx="121.9" cy="66.6" r="1.1" fill="#c84a14"/>
<circle cx="136.5" cy="59.9" r="0.7" fill="#c84a14"/>
<circle cx="132.2" cy="41.9" r="0.9" fill="#c84a14"/>
<circle cx="124.5" cy="44.1" r="1.2" fill="#c84a14"/>
<circle cx="118.0" cy="62.9" r="1.3" fill="#c84a14"/>
<circle cx="117.8" cy="47.2" r="1.2" fill="#c84a14"/>
<circle cx="122.7" cy="62.3" r="0.8" fill="#c84a14"/>
<circle cx="137.2" cy="66.7" r="0.7" fill="#c84a14"/>
<circle cx="132.0" cy="41.9" r="1.0" fill="#c84a14"/>
<circle cx="142.7" cy="59.3" r="0.9" fill="#c84a14"/>
<circle cx="123.1" cy="58.8" r="0.8" fill="#c84a14"/>
<circle cx="128.0" cy="58.3" r="1.2" fill="#c84a14"/>
<circle cx="129.6" cy="40.4" r="1.0" fill="#c84a14"/>
<circle cx="137.1" cy="53.1" r="1.0" fill="#c84a14"/>
<circle cx="142.4" cy="57.2" r="0.8" fill="#c84a14"/>
<circle cx="133.8" cy="42.1" r="1.2" fill="#c84a14"/>
<circle cx="119.8" cy="60.1" r="1.0" fill="#c84a14"/>
<circle cx="125.2" cy="67.7" r="1.0" fill="#c84a14"/>
<circle cx="130.9" cy="47.3" r="0.7" fill="#c84a14"/>
<circle cx="141.7" cy="51.5" r="0.7" fill="#c84a14"/>
<circle cx="123.0" cy="46.1" r="1.2" fill="#c84a14"/>
<circle cx="129.5" cy="66.2" r="0.9" fill="#c84a14"/>
<circle cx="142.0" cy="46.9" r="0.8" fill="#c84a14"/>
<circle cx="133.8" cy="57.5" r="0.7" fill="#c84a14"/>
<circle cx="136.2" cy="62.6" r="1.2" fill="#c84a14"/>
<circle cx="138.3" cy="63.5" r="1.0" fill="#c84a14"/>
<circle cx="121.6" cy="55.3" r="0.8" fill="#c84a14"/>
<circle cx="132.4" cy="60.5" r="0.9" fill="#c84a14"/>
<circle cx="118.2" cy="51.2" r="0.7" fill="#c84a14"/>
<circle cx="138.7" cy="46.2" r="1.2" fill="#c84a14"/>
<circle cx="143.1" cy="55.6" r="1.0" fill="#c84a14"/>
<circle cx="130.3" cy="51.3" r="0.8" fill="#c84a14"/>
<circle cx="129.8" cy="67.4" r="1.1" fill="#c84a14"/>
<circle cx="138.0" cy="57.1" r="0.9" fill="#c84a14"/>
<circle cx="136.6" cy="50.2" r="0.9" fill="#c84a14"/>
<circle cx="120.1" cy="51.8" r="1.3" fill="#c84a14"/>
<circle cx="126.3" cy="52.3" r="1.0" fill="#c84a14"/>
<circle cx="142.3" cy="52.4" r="0.9" fill="#c84a14"/>
<circle cx="117.9" cy="53.0" r="1.0" fill="#c84a14"/>
<circle cx="131.5" cy="51.6" r="1.3" fill="#c84a14"/>
<circle cx="126.4" cy="63.0" r="1.3" fill="#c84a14"/>
<circle cx="134.3" cy="57.2" r="0.7" fill="#c84a14"/>
<circle cx="130.8" cy="41.7" r="1.0" fill="#c84a14"/>
<circle cx="141.5" cy="56.4" r="1.1" fill="#c84a14"/>
<circle cx="120.3" cy="53.9" r="0.9" fill="#c84a14"/>
<circle cx="131.4" cy="64.2" r="0.7" fill="#c84a14"/>
<circle cx="130.2" cy="64.7" r="1.1" fill="#c84a14"/>
<circle cx="127.8" cy="41.9" r="1.0" fill="#c84a14"/>
<circle cx="124.6" cy="59.7" r="1.0" fill="#c84a14"/>
<circle cx="141.4" cy="52.3" r="0.8" fill="#c84a14"/>
<circle cx="119.8" cy="55.5" r="1.1" fill="#c84a14"/>
<circle cx="132.6" cy="41.3" r="1.1" fill="#c84a14"/>
<circle cx="123.7" cy="43.8" r="1.2" fill="#c84a14"/>
<circle cx="125.0" cy="43.8" r="0.8" fill="#c84a14"/>
<circle cx="119.4" cy="64.3" r="1.1" fill="#c84a14"/>
<circle cx="143.0" cy="52.0" r="1.3" fill="#c84a14"/>
<circle cx="129.5" cy="56.1" r="0.9" fill="#c84a14"/>
<circle cx="135.6" cy="62.3" r="1.0" fill="#c84a14"/>
<circle cx="128.7" cy="58.9" r="1.3" fill="#c84a14"/>
<circle cx="117.7" cy="58.0" r="0.8" fill="#c84a14"/>
<circle cx="125.9" cy="41.2" r="0.8" fill="#c84a14"/>
<circle cx="124.6" cy="48.4" r="1.1" fill="#c84a14"/>
<circle cx="137.2" cy="52.7" r="0.9" fill="#c84a14"/>
<circle cx="134.2" cy="48.9" r="0.8" fill="#c84a14"/>
<circle cx="133.8" cy="66.6" r="1.1" fill="#c84a14"/>
<circle cx="124.4" cy="60.3" r="1.3" fill="#c84a14"/>
<circle cx="120.7" cy="58.9" r="1.1" fill="#c84a14"/>
<circle cx="133.6" cy="61.9" r="0.9" fill="#c84a14"/>
<circle cx="132.9" cy="62.1" r="1.3" fill="#c84a14"/>
<circle cx="131.0" cy="52.5" r="1.3" fill="#c84a14"/>
<circle cx="142.3" cy="56.5" r="1.0" fill="#c84a14"/>
<circle cx="127.7" cy="53.2" r="1.1" fill="#c84a14"/>
<circle cx="137.2" cy="55.3" r="1.0" fill="#c84a14"/>
<circle cx="128.4" cy="59.2" r="1.0" fill="#c84a14"/>
<circle cx="120.5" cy="65.1" r="0.8" fill="#c84a14"/>
<circle cx="135.7" cy="43.2" r="1.0" fill="#c84a14"/>
<circle cx="131.2" cy="58.0" r="0.9" fill="#c84a14"/>
<circle cx="131.7" cy="65.8" r="1.2" fill="#c84a14"/>
<circle cx="142.1" cy="48.9" r="1.2" fill="#c84a14"/>
<circle cx="128.3" cy="54.0" r="0.7" fill="#c84a14"/>
<circle cx="129.7" cy="41.0" r="1.2" fill="#c84a14"/>
<circle cx="135.9" cy="57.3" r="1.2" fill="#c84a14"/>
<circle cx="121.7" cy="47.1" r="1.0" fill="#c84a14"/>
<circle cx="123.1" cy="66.2" r="0.9" fill="#c84a14"/>
<circle cx="127.4" cy="63.4" r="1.1" fill="#c84a14"/>
<circle cx="142.5" cy="61.0" r="0.7" fill="#c84a14"/>
<circle cx="125.4" cy="45.5" r="0.8" fill="#c84a14"/>
<circle cx="137.1" cy="57.8" r="0.7" fill="#c84a14"/>
<circle cx="125.6" cy="45.6" r="1.1" fill="#c84a14"/>
<circle cx="134.6" cy="58.6" r="1.3" fill="#c84a14"/>
<circle cx="120.9" cy="60.9" r="1.1" fill="#c84a14"/>
<circle cx="117.6" cy="53.1" r="0.7" fill="#c84a14"/>
<circle cx="133.0" cy="68.0" r="0.7" fill="#c84a14"/>
<circle cx="121.4" cy="53.2" r="1.1" fill="#c84a14"/>
<circle cx="128.5" cy="49.1" r="1.0" fill="#c84a14"/>
<circle cx="133.5" cy="50.2" r="1.2" fill="#c84a14"/>
<circle cx="124.0" cy="42.3" r="0.8" fill="#c84a14"/>
<circle cx="140.6" cy="47.6" r="1.0" fill="#c84a14"/>
<circle cx="143.8" cy="52.4" r="0.9" fill="#c84a14"/>
<circle cx="143.2" cy="49.5" r="1.2" fill="#c84a14"/>
<circle cx="129.1" cy="56.3" r="1.1" fill="#c84a14"/>
<circle cx="130.4" cy="43.5" r="1.1" fill="#c84a14"/>
<circle cx="135.4" cy="52.5" r="1.0" fill="#c84a14"/>
<circle cx="133.7" cy="68.3" r="1.3" fill="#c84a14"/>
<circle cx="131.8" cy="44.2" r="1.1" fill="#c84a14"/>
<circle cx="121.0" cy="65.5" r="0.7" fill="#c84a14"/>
<circle cx="134.1" cy="63.4" r="1.0" fill="#c84a14"/>
<circle cx="121.4" cy="65.1" r="0.8" fill="#c84a14"/>
<circle cx="127.9" cy="56.1" r="1.0" fill="#c84a14"/>
<circle cx="128.8" cy="52.9" r="0.8" fill="#c84a14"/>
<circle cx="134.3" cy="52.9" r="1.0" fill="#c84a14"/>
<circle cx="116.1" cy="53.8" r="0.8" fill="#c84a14"/>
<circle cx="123.6" cy="58.3" r="1.1" fill="#c84a14"/>
<circle cx="130.1" cy="42.1" r="1.1" fill="#c84a14"/>
<circle cx="123.3" cy="58.1" r="0.9" fill="#c84a14"/>
<circle cx="129.0" cy="65.3" r="1.0" fill="#c84a14"/>
<circle cx="139.7" cy="57.2" r="1.2" fill="#c84a14"/>
<circle cx="133.7" cy="44.3" r="1.1" fill="#c84a14"/>
<circle cx="142.6" cy="54.5" r="0.9" fill="#c84a14"/>
<circle cx="139.2" cy="55.2" r="1.1" fill="#c84a14"/>
<circle cx="120.0" cy="49.8" r="1.3" fill="#c84a14"/>
<circle cx="130.9" cy="61.5" r="1.1" fill="#c84a14"/>
<circle cx="116.8" cy="56.4" r="0.7" fill="#c84a14"/>
<circle cx="134.1" cy="47.1" r="1.0" fill="#c84a14"/>
<circle cx="122.3" cy="61.4" r="1.1" fill="#c84a14"/>
<circle cx="126.0" cy="44.3" r="1.2" fill="#c84a14"/>
<circle cx="121.0" cy="64.0" r="0.9" fill="#c84a14"/>
<circle cx="133.5" cy="42.5" r="1.3" fill="#c84a14"/>
<circle cx="133.8" cy="49.6" r="1.2" fill="#c84a14"/>
<circle cx="128.5" cy="58.8" r="1.1" fill="#c84a14"/>
<circle cx="132.7" cy="50.1" r="0.9" fill="#c84a14"/>
<circle cx="126.5" cy="66.7" r="0.8" fill="#c84a14"/>
<circle cx="123.3" cy="55.1" r="1.1" fill="#c84a14"/>
<circle cx="127.3" cy="48.7" r="0.9" fill="#c84a14"/>
<circle cx="122.0" cy="63.7" r="0.8" fill="#c84a14"/>
<path d="M231.1 100.9 C217.9 96.5 194.6 95.9 193.3 96.9 C190.0 98.8 189.9 106.6 193.1 108.6 C194.4 109.6 217.7 109.5 231.0 105.5 Z" fill="#b0509c" stroke="#602458" stroke-width="0.7"/>
<path d="M227.1 101.5 C216.6 99.0 197.9 98.7 197.2 99.3 C195.2 100.5 195.2 105.2 197.2 106.3 C197.9 106.9 216.6 106.8 227.0 104.2 Z" fill="#d48cc4" opacity="0.6" filter="url(#b4P)"/>
<path d="M233.8 96.9 C226.5 87.5 210.2 77.3 208.6 77.4 C204.8 77.4 200.8 84.1 202.6 87.4 C203.2 88.9 219.8 98.7 231.4 100.8 Z" fill="#b0509c" stroke="#602458" stroke-width="0.7"/>
<path d="M230.0 95.4 C224.2 89.0 211.6 81.4 210.7 81.5 C208.4 81.5 206.0 85.5 207.1 87.5 C207.5 88.4 220.2 95.7 228.7 97.7 Z" fill="#d48cc4" opacity="0.6" filter="url(#b4P)"/>
<path d="M238.7 94.7 C238.8 84.4 232.5 69.5 231.1 68.7 C228.0 66.5 220.9 69.6 220.4 73.4 C220.0 75.0 226.9 89.7 234.5 96.6 Z" fill="#b0509c" stroke="#602458" stroke-width="0.7"/>
<path d="M236.4 91.4 C235.9 84.2 231.3 73.5 230.5 73.1 C228.6 71.8 224.3 73.7 224.1 76.0 C223.9 76.9 228.8 87.5 233.9 92.5 Z" fill="#d48cc4" opacity="0.6" filter="url(#b4P)"/>
<path d="M243.5 95.4 C249.0 87.5 251.6 72.8 250.8 71.4 C249.4 67.9 241.6 66.7 239.2 69.6 C238.1 70.8 236.1 85.5 239.0 94.7 Z" fill="#b0509c" stroke="#602458" stroke-width="0.7"/>
<path d="M243.2 91.3 C246.6 85.8 248.4 75.6 247.9 74.8 C247.1 72.7 242.4 71.9 241.0 73.7 C240.3 74.4 238.9 84.6 240.5 90.9 Z" fill="#d48cc4" opacity="0.6" filter="url(#b4P)"/>
<path d="M247.4 98.7 C257.1 94.6 268.5 82.8 268.7 81.2 C269.5 77.5 263.8 72.1 260.2 73.2 C258.6 73.5 247.6 85.7 244.1 95.6 Z" fill="#b0509c" stroke="#602458" stroke-width="0.7"/>
<path d="M249.3 95.0 C255.9 91.8 264.3 83.4 264.4 82.4 C264.9 80.2 261.5 77.0 259.3 77.6 C258.4 77.7 250.3 86.4 247.4 93.1 Z" fill="#d48cc4" opacity="0.6" filter="url(#b4P)"/>
<path d="M249.1 103.4 C261.1 104.8 280.3 100.5 281.3 99.2 C284.0 96.6 282.2 89.0 278.6 87.9 C277.1 87.2 258.0 92.2 248.0 99.0 Z" fill="#b0509c" stroke="#602458" stroke-width="0.7"/>
<path d="M252.7 101.3 C261.6 101.9 276.3 98.7 276.9 98.0 C278.6 96.4 277.5 91.8 275.4 91.1 C274.5 90.7 259.8 94.3 252.1 98.7 Z" fill="#d48cc4" opacity="0.6" filter="url(#b4P)"/>
<path d="M248.0 108.5 C258.7 116.7 280.0 124.4 281.6 123.9 C285.3 123.1 287.8 115.7 285.4 112.8 C284.5 111.5 263.0 104.4 249.4 104.2 Z" fill="#b0509c" stroke="#602458" stroke-width="0.7"/>
<path d="M252.1 108.6 C260.7 114.4 277.5 120.7 278.4 120.4 C280.6 119.9 282.2 115.5 280.8 113.8 C280.3 113.0 263.3 107.1 253.0 106.1 Z" fill="#d48cc4" opacity="0.6" filter="url(#b4P)"/>
<path d="M244.7 111.9 C250.9 125.1 267.3 143.7 268.9 144.0 C272.5 145.1 278.3 139.8 277.6 136.1 C277.4 134.5 260.6 116.4 248.1 108.8 Z" fill="#b0509c" stroke="#602458" stroke-width="0.7"/>
<path d="M248.2 114.1 C253.7 124.1 266.8 139.1 267.8 139.3 C270.0 140.0 273.4 136.9 273.0 134.6 C272.9 133.7 259.5 118.9 250.2 112.3 Z" fill="#d48cc4" opacity="0.6" filter="url(#b4P)"/>
<path d="M240.1 113.2 C239.7 129.2 246.0 155.7 247.3 156.7 C249.9 159.4 257.5 157.5 258.6 153.9 C259.2 152.4 252.4 126.0 244.5 112.1 Z" fill="#b0509c" stroke="#602458" stroke-width="0.7"/>
<path d="M242.0 116.9 C242.6 129.6 247.7 151.4 248.5 152.0 C250.1 153.6 254.6 152.5 255.3 150.4 C255.7 149.5 250.1 127.7 244.7 116.2 Z" fill="#d48cc4" opacity="0.6" filter="url(#b4P)"/>
<path d="M235.9 112.4 C228.7 127.0 223.0 154.3 223.7 155.8 C224.9 159.4 232.6 160.9 235.1 158.1 C236.3 157.0 241.4 129.5 240.4 113.2 Z" fill="#b0509c" stroke="#602458" stroke-width="0.7"/>
<path d="M236.0 116.5 C231.0 128.6 226.4 151.2 226.8 152.1 C227.6 154.3 232.1 155.2 233.7 153.5 C234.4 152.8 238.7 130.1 238.6 117.0 Z" fill="#d48cc4" opacity="0.6" filter="url(#b4P)"/>
<path d="M232.4 109.5 C220.3 118.4 204.5 138.5 204.5 140.1 C204.1 143.9 210.3 148.6 213.8 147.2 C215.4 146.8 230.6 126.3 236.0 112.3 Z" fill="#b0509c" stroke="#602458" stroke-width="0.7"/>
<path d="M230.6 113.1 C221.6 120.8 208.9 137.3 208.9 138.2 C208.7 140.5 212.4 143.3 214.5 142.5 C215.5 142.2 227.8 125.5 232.7 114.8 Z" fill="#d48cc4" opacity="0.6" filter="url(#b4P)"/>
<path d="M230.7 105.8 C216.7 108.7 195.3 120.1 194.6 121.6 C192.7 124.8 196.4 131.7 200.2 131.8 C201.8 132.0 222.9 120.1 232.9 109.8 Z" fill="#b0509c" stroke="#602458" stroke-width="0.7"/>
<path d="M227.5 108.3 C216.8 111.4 199.7 120.8 199.3 121.7 C198.2 123.7 200.5 127.7 202.7 127.8 C203.7 127.9 220.6 118.2 228.9 110.7 Z" fill="#d48cc4" opacity="0.6" filter="url(#b4P)"/>
<circle cx="240" cy="104" r="15" fill="#5a1010"/>
<circle cx="252.6" cy="99.8" r="1.2" fill="#9a2818"/>
<circle cx="236.7" cy="101.8" r="1.0" fill="#9a2818"/>
<circle cx="246.9" cy="111.3" r="0.8" fill="#9a2818"/>
<circle cx="241.7" cy="113.0" r="1.0" fill="#9a2818"/>
<circle cx="241.9" cy="105.1" r="1.1" fill="#9a2818"/>
<circle cx="231.1" cy="103.3" r="1.1" fill="#9a2818"/>
<circle cx="247.7" cy="106.9" r="1.2" fill="#9a2818"/>
<circle cx="234.2" cy="95.1" r="1.1" fill="#9a2818"/>
<circle cx="231.2" cy="114.3" r="1.2" fill="#9a2818"/>
<circle cx="232.5" cy="100.3" r="1.1" fill="#9a2818"/>
<circle cx="246.6" cy="108.0" r="1.0" fill="#9a2818"/>
<circle cx="230.2" cy="97.7" r="1.0" fill="#9a2818"/>
<circle cx="244.6" cy="114.1" r="0.8" fill="#9a2818"/>
<circle cx="243.2" cy="96.8" r="0.8" fill="#9a2818"/>
<circle cx="243.8" cy="106.7" r="0.7" fill="#9a2818"/>
<circle cx="233.5" cy="100.8" r="1.2" fill="#9a2818"/>
<circle cx="234.6" cy="109.8" r="0.9" fill="#9a2818"/>
<circle cx="241.3" cy="96.5" r="1.0" fill="#9a2818"/>
<circle cx="245.5" cy="108.4" r="1.2" fill="#9a2818"/>
<circle cx="245.5" cy="93.8" r="0.8" fill="#9a2818"/>
<circle cx="248.9" cy="99.0" r="1.1" fill="#9a2818"/>
<circle cx="246.7" cy="115.6" r="1.3" fill="#9a2818"/>
<circle cx="237.2" cy="105.6" r="0.7" fill="#9a2818"/>
<circle cx="235.2" cy="92.5" r="1.3" fill="#9a2818"/>
<circle cx="251.7" cy="100.1" r="1.0" fill="#9a2818"/>
<circle cx="239.9" cy="90.3" r="0.9" fill="#9a2818"/>
<circle cx="230.2" cy="113.5" r="0.8" fill="#9a2818"/>
<circle cx="236.3" cy="104.8" r="0.8" fill="#9a2818"/>
<circle cx="252.7" cy="99.9" r="0.8" fill="#9a2818"/>
<circle cx="235.6" cy="103.2" r="0.8" fill="#9a2818"/>
<circle cx="243.9" cy="94.6" r="0.9" fill="#9a2818"/>
<circle cx="247.3" cy="98.8" r="1.0" fill="#9a2818"/>
<circle cx="246.3" cy="98.9" r="1.2" fill="#9a2818"/>
<circle cx="235.0" cy="91.9" r="0.9" fill="#9a2818"/>
<circle cx="245.5" cy="93.9" r="1.1" fill="#9a2818"/>
<circle cx="238.1" cy="110.5" r="0.9" fill="#9a2818"/>
<circle cx="228.6" cy="99.7" r="1.0" fill="#9a2818"/>
<circle cx="249.7" cy="111.9" r="1.1" fill="#9a2818"/>
<circle cx="232.6" cy="101.1" r="1.2" fill="#9a2818"/>
<circle cx="246.6" cy="101.9" r="0.7" fill="#9a2818"/>
<circle cx="230.0" cy="101.3" r="0.8" fill="#9a2818"/>
<circle cx="229.8" cy="105.9" r="1.0" fill="#9a2818"/>
<circle cx="251.7" cy="104.3" r="0.9" fill="#9a2818"/>
<circle cx="247.7" cy="113.5" r="1.2" fill="#9a2818"/>
<circle cx="237.4" cy="98.3" r="0.8" fill="#9a2818"/>
<circle cx="231.8" cy="108.3" r="0.7" fill="#9a2818"/>
<circle cx="228.5" cy="105.4" r="1.1" fill="#9a2818"/>
<circle cx="230.5" cy="100.5" r="1.0" fill="#9a2818"/>
<circle cx="246.1" cy="99.5" r="0.8" fill="#9a2818"/>
<circle cx="248.4" cy="94.2" r="1.0" fill="#9a2818"/>
<circle cx="234.4" cy="93.2" r="1.1" fill="#9a2818"/>
<circle cx="236.8" cy="110.8" r="0.9" fill="#9a2818"/>
<circle cx="247.3" cy="102.1" r="0.9" fill="#9a2818"/>
<circle cx="232.5" cy="108.2" r="1.2" fill="#9a2818"/>
<circle cx="231.0" cy="100.8" r="0.9" fill="#9a2818"/>
<circle cx="246.2" cy="107.9" r="0.8" fill="#9a2818"/>
<circle cx="244.2" cy="98.3" r="1.0" fill="#9a2818"/>
<circle cx="235.5" cy="105.1" r="0.8" fill="#9a2818"/>
<circle cx="230.3" cy="107.7" r="1.2" fill="#9a2818"/>
<circle cx="244.2" cy="98.3" r="0.8" fill="#9a2818"/>
<circle cx="230.9" cy="93.8" r="0.7" fill="#9a2818"/>
<circle cx="238.0" cy="116.2" r="0.9" fill="#9a2818"/>
<circle cx="242.8" cy="99.5" r="0.8" fill="#9a2818"/>
<circle cx="230.6" cy="111.2" r="1.1" fill="#9a2818"/>
<circle cx="246.6" cy="107.5" r="1.2" fill="#9a2818"/>
<circle cx="245.4" cy="113.8" r="1.3" fill="#9a2818"/>
<circle cx="245.4" cy="116.0" r="0.7" fill="#9a2818"/>
<circle cx="246.9" cy="112.3" r="1.1" fill="#9a2818"/>
<circle cx="237.6" cy="94.9" r="1.0" fill="#9a2818"/>
<circle cx="245.3" cy="93.1" r="1.1" fill="#9a2818"/>
<circle cx="235.1" cy="113.4" r="0.8" fill="#9a2818"/>
<circle cx="242.6" cy="100.7" r="0.8" fill="#9a2818"/>
<circle cx="236.3" cy="112.2" r="1.1" fill="#9a2818"/>
<circle cx="246.4" cy="96.2" r="1.0" fill="#9a2818"/>
<circle cx="235.2" cy="97.2" r="1.1" fill="#9a2818"/>
<circle cx="235.0" cy="116.3" r="1.2" fill="#9a2818"/>
<circle cx="253.6" cy="102.5" r="0.8" fill="#9a2818"/>
<circle cx="241.3" cy="95.6" r="1.2" fill="#9a2818"/>
<circle cx="237.8" cy="105.7" r="1.1" fill="#9a2818"/>
<circle cx="228.3" cy="101.4" r="0.8" fill="#9a2818"/>
<circle cx="248.2" cy="107.2" r="0.9" fill="#9a2818"/>
<circle cx="244.0" cy="95.9" r="1.1" fill="#9a2818"/>
<circle cx="240.2" cy="112.9" r="0.9" fill="#9a2818"/>
<circle cx="229.4" cy="107.8" r="0.8" fill="#9a2818"/>
<circle cx="228.9" cy="98.3" r="1.3" fill="#9a2818"/>
<circle cx="232.8" cy="96.9" r="1.0" fill="#9a2818"/>
<circle cx="249.4" cy="98.7" r="1.3" fill="#9a2818"/>
<circle cx="229.8" cy="108.8" r="0.7" fill="#9a2818"/>
<circle cx="230.2" cy="112.0" r="0.9" fill="#9a2818"/>
<circle cx="243.2" cy="104.7" r="0.9" fill="#9a2818"/>
<path d="M74.4 113.7 C73.4 108.3 68.5 104.7 67.0 104.7 C63.5 104.6 59.5 110.5 61.0 113.7 C61.5 115.1 66.6 118.2 72.0 117.2 Z" fill="#d4bccb" stroke="#7a5a6a" stroke-width="0.8"/>
<path d="M70.6 111.7 C70.5 109.1 69.2 108.4 68.3 108.6 C66.2 108.9 64.6 112.9 65.8 114.6 C66.3 115.4 67.7 115.7 69.7 114.0 Z" fill="#f4eaf0" opacity="0.6" filter="url(#b4P)"/>
<path d="M71.5 117.5 L63.9 112.4" stroke="#9a6888" stroke-width="0.8" opacity="0.6"/>
<path d="M74.9 113.4 L67.2 108.4" stroke="#9a6888" stroke-width="0.8" opacity="0.6"/>
<path d="M82.7 109.2 C84.0 100.2 79.1 88.3 77.4 87.4 C73.8 84.9 65.6 88.6 65.1 92.9 C64.7 94.7 70.3 106.3 77.9 111.4 Z" fill="#d4bccb" stroke="#7a5a6a" stroke-width="0.8"/>
<path d="M80.2 105.9 C80.7 100.2 77.4 92.5 76.4 92.0 C74.3 90.5 69.4 92.8 69.1 95.4 C68.9 96.5 72.6 104.0 77.3 107.3 Z" fill="#f4eaf0" opacity="0.6" filter="url(#b4P)"/>
<path d="M77.2 111.5 L69.0 93.1" stroke="#9a6888" stroke-width="0.8" opacity="0.6"/>
<path d="M83.3 109.1 L75.1 90.7" stroke="#9a6888" stroke-width="0.8" opacity="0.6"/>
<path d="M90.4 109.1 C96.0 99.0 97.1 81.4 95.9 79.8 C93.7 75.7 84.1 75.4 81.6 79.3 C80.3 80.8 80.0 98.4 84.8 108.9 Z" fill="#d4bccb" stroke="#7a5a6a" stroke-width="0.8"/>
<path d="M89.4 105.1 C92.9 97.6 93.6 84.5 92.9 83.5 C91.6 81.0 85.8 80.8 84.3 83.2 C83.5 84.1 83.3 97.2 86.1 104.9 Z" fill="#f4eaf0" opacity="0.6" filter="url(#b4P)"/>
<path d="M84.1 108.9 L85.2 81.3" stroke="#9a6888" stroke-width="0.8" opacity="0.6"/>
<path d="M91.1 109.1 L92.2 81.6" stroke="#9a6888" stroke-width="0.8" opacity="0.6"/>
<path d="M97.5 112.2 C107.9 104.4 117.8 86.9 117.4 84.8 C117.2 79.8 108.2 75.0 103.9 77.6 C102.0 78.5 92.9 96.4 92.3 109.4 Z" fill="#d4bccb" stroke="#7a5a6a" stroke-width="0.8"/>
<path d="M98.2 108.1 C105.4 101.7 113.1 88.0 113.0 86.7 C112.8 83.8 107.4 80.9 104.9 82.4 C103.7 82.9 96.5 96.9 95.1 106.4 Z" fill="#f4eaf0" opacity="0.6" filter="url(#b4P)"/>
<path d="M91.5 109.2 L106.4 81.2" stroke="#9a6888" stroke-width="0.8" opacity="0.6"/>
<path d="M98.3 112.5 L113.2 84.5" stroke="#9a6888" stroke-width="0.8" opacity="0.6"/>
<path d="M102.6 117.8 C116.0 114.7 133.9 102.0 134.5 99.9 C136.4 95.4 130.3 87.2 125.3 87.7 C123.2 87.7 105.9 101.0 99.0 113.0 Z" fill="#d4bccb" stroke="#7a5a6a" stroke-width="0.8"/>
<path d="M104.9 114.3 C114.9 111.1 129.2 101.1 129.5 99.9 C130.7 97.2 127.1 92.2 124.1 92.5 C122.9 92.4 108.9 102.9 102.8 111.4 Z" fill="#f4eaf0" opacity="0.6" filter="url(#b4P)"/>
<path d="M98.4 112.6 L126.0 92.1" stroke="#9a6888" stroke-width="0.8" opacity="0.6"/>
<path d="M103.2 118.3 L130.8 97.9" stroke="#9a6888" stroke-width="0.8" opacity="0.6"/>
<path d="M104.9 124.9 C119.5 127.5 142.9 123.0 144.3 121.4 C148.0 118.0 145.9 108.0 141.2 106.4 C139.2 105.5 116.0 110.9 103.7 119.1 Z" fill="#d4bccb" stroke="#7a5a6a" stroke-width="0.8"/>
<path d="M108.5 122.7 C119.9 123.8 139.0 120.3 139.8 119.3 C142.0 117.3 140.8 111.3 138.0 110.3 C136.9 109.8 117.9 113.8 107.8 119.2 Z" fill="#f4eaf0" opacity="0.6" filter="url(#b4P)"/>
<path d="M103.3 118.4 L139.8 110.8" stroke="#9a6888" stroke-width="0.8" opacity="0.6"/>
<path d="M105.3 125.6 L141.9 118.0" stroke="#9a6888" stroke-width="0.8" opacity="0.6"/>
<path d="M104.2 132.4 C116.9 140.8 140.9 146.3 142.8 145.5 C147.5 143.8 149.7 133.9 146.0 130.5 C144.6 128.9 120.5 124.2 105.4 126.6 Z" fill="#d4bccb" stroke="#7a5a6a" stroke-width="0.8"/>
<path d="M108.4 131.8 C118.8 137.5 138.3 142.2 139.5 141.7 C142.3 140.8 143.6 134.8 141.5 132.7 C140.7 131.8 121.0 127.6 109.2 128.3 Z" fill="#f4eaf0" opacity="0.6" filter="url(#b4P)"/>
<path d="M105.3 125.8 L143.0 133.9" stroke="#9a6888" stroke-width="0.8" opacity="0.6"/>
<path d="M104.3 133.2 L141.9 141.3" stroke="#9a6888" stroke-width="0.8" opacity="0.6"/>
<path d="M100.5 139.0 C108.9 151.7 128.8 166.3 130.9 166.3 C135.8 166.7 141.8 158.4 139.8 153.8 C139.1 151.8 118.8 137.8 104.0 134.1 Z" fill="#d4bccb" stroke="#7a5a6a" stroke-width="0.8"/>
<path d="M104.6 140.1 C111.9 149.5 128.0 161.5 129.3 161.5 C132.2 161.7 135.8 156.8 134.6 154.0 C134.3 152.8 117.9 141.2 106.7 137.2 Z" fill="#f4eaf0" opacity="0.6" filter="url(#b4P)"/>
<path d="M104.2 133.4 L135.6 155.7" stroke="#9a6888" stroke-width="0.8" opacity="0.6"/>
<path d="M100.3 139.7 L131.7 162.1" stroke="#9a6888" stroke-width="0.8" opacity="0.6"/>
<path d="M94.7 143.4 C97.7 158.1 110.3 179.3 112.2 180.0 C116.3 182.2 124.5 177.1 124.4 172.4 C124.6 170.4 111.3 149.7 99.4 140.4 Z" fill="#d4bccb" stroke="#7a5a6a" stroke-width="0.8"/>
<path d="M97.9 146.1 C101.1 157.4 111.3 174.5 112.4 175.0 C114.9 176.3 119.8 173.3 119.8 170.5 C119.9 169.3 109.3 152.4 100.7 144.4 Z" fill="#f4eaf0" opacity="0.6" filter="url(#b4P)"/>
<path d="M100.0 140.0 L120.1 172.5" stroke="#9a6888" stroke-width="0.8" opacity="0.6"/>
<path d="M94.1 143.9 L114.3 176.4" stroke="#9a6888" stroke-width="0.8" opacity="0.6"/>
<path d="M87.4 145.2 C84.6 160.5 88.3 185.8 89.8 187.2 C92.8 190.7 102.3 189.2 104.0 184.8 C104.9 183.0 100.4 157.9 92.9 144.3 Z" fill="#d4bccb" stroke="#7a5a6a" stroke-width="0.8"/>
<path d="M89.2 148.9 C88.0 161.0 91.1 181.7 91.9 182.5 C93.7 184.7 99.4 183.8 100.5 181.2 C101.0 180.1 97.4 159.5 92.5 148.4 Z" fill="#f4eaf0" opacity="0.6" filter="url(#b4P)"/>
<path d="M93.6 144.1 L100.0 183.3" stroke="#9a6888" stroke-width="0.8" opacity="0.6"/>
<path d="M86.7 145.3 L93.1 184.5" stroke="#9a6888" stroke-width="0.8" opacity="0.6"/>
<path d="M80.1 143.9 C72.1 156.7 66.1 180.9 66.9 182.6 C68.2 186.8 77.0 188.8 80.0 185.7 C81.5 184.5 86.7 160.0 85.2 145.1 Z" fill="#d4bccb" stroke="#7a5a6a" stroke-width="0.8"/>
<path d="M80.1 148.0 C74.8 158.4 70.0 178.1 70.5 179.2 C71.3 181.6 76.5 182.9 78.4 181.0 C79.2 180.2 83.5 160.4 83.2 148.7 Z" fill="#f4eaf0" opacity="0.6" filter="url(#b4P)"/>
<path d="M85.8 145.3 L77.1 182.9" stroke="#9a6888" stroke-width="0.8" opacity="0.6"/>
<path d="M79.4 143.7 L70.7 181.3" stroke="#9a6888" stroke-width="0.8" opacity="0.6"/>
<path d="M74.1 139.9 C62.9 148.3 49.0 167.2 49.0 168.9 C48.7 172.6 55.0 177.2 58.5 175.6 C60.1 175.2 73.5 155.8 77.8 142.5 Z" fill="#d4bccb" stroke="#7a5a6a" stroke-width="0.8"/>
<path d="M72.3 143.6 C64.2 150.7 53.3 165.9 53.3 166.9 C53.2 169.2 57.0 171.8 59.1 170.9 C60.0 170.6 70.6 155.2 74.6 145.1 Z" fill="#f4eaf0" opacity="0.6" filter="url(#b4P)"/>
<path d="M78.2 142.9 L57.2 172.3" stroke="#9a6888" stroke-width="0.8" opacity="0.6"/>
<path d="M73.7 139.4 L52.7 168.8" stroke="#9a6888" stroke-width="0.8" opacity="0.6"/>
<path d="M70.1 133.8 C63.2 134.1 54.7 139.2 54.3 140.5 C52.9 143.4 56.5 148.9 59.7 148.8 C61.1 148.9 69.2 143.3 72.2 137.1 Z" fill="#d4bccb" stroke="#7a5a6a" stroke-width="0.8"/>
<path d="M66.9 136.4 C63.1 136.5 59.0 139.4 58.7 140.2 C58.0 142.0 60.4 145.2 62.3 145.0 C63.1 145.0 67.1 141.8 68.3 138.3 Z" fill="#f4eaf0" opacity="0.6" filter="url(#b4P)"/>
<path d="M72.2 137.6 L59.9 145.8" stroke="#9a6888" stroke-width="0.8" opacity="0.6"/>
<path d="M70.0 133.3 L57.6 141.5" stroke="#9a6888" stroke-width="0.8" opacity="0.6"/>
<path d="M69.4 122.0 C65.4 118.2 58.8 117.6 57.7 118.3 C54.9 119.9 54.5 126.5 57.2 128.2 C58.3 129.1 64.9 129.2 69.2 125.8 Z" fill="#d4bccb" stroke="#7a5a6a" stroke-width="0.8"/>
<path d="M65.2 122.0 C63.5 120.1 61.5 120.3 60.9 120.8 C59.5 122.1 60.1 126.0 61.8 126.7 C62.6 127.1 64.5 126.7 65.5 124.3 Z" fill="#f4eaf0" opacity="0.6" filter="url(#b4P)"/>
<path d="M68.9 126.3 L59.0 125.9" stroke="#9a6888" stroke-width="0.8" opacity="0.6"/>
<path d="M69.7 121.5 L59.8 121.2" stroke="#9a6888" stroke-width="0.8" opacity="0.6"/>
<circle cx="87" cy="127" r="27" fill="#5a1a06"/>
<circle cx="100.7" cy="120.2" r="1.2" fill="#d45818"/>
<circle cx="95.0" cy="118.7" r="1.1" fill="#d45818"/>
<circle cx="91.9" cy="125.5" r="0.9" fill="#d45818"/>
<circle cx="74.8" cy="133.3" r="1.1" fill="#d45818"/>
<circle cx="83.6" cy="118.9" r="1.2" fill="#d45818"/>
<circle cx="91.9" cy="109.9" r="1.1" fill="#d45818"/>
<circle cx="96.5" cy="147.5" r="0.9" fill="#d45818"/>
<circle cx="100.5" cy="137.3" r="1.3" fill="#d45818"/>
<circle cx="103.2" cy="138.5" r="1.0" fill="#d45818"/>
<circle cx="92.9" cy="141.8" r="0.8" fill="#d45818"/>
<circle cx="102.2" cy="134.2" r="1.0" fill="#d45818"/>
<circle cx="99.4" cy="139.8" r="1.2" fill="#d45818"/>
<circle cx="89.4" cy="131.4" r="1.2" fill="#d45818"/>
<circle cx="76.6" cy="132.4" r="1.0" fill="#d45818"/>
<circle cx="70.6" cy="127.6" r="1.0" fill="#d45818"/>
<circle cx="103.1" cy="133.1" r="1.2" fill="#d45818"/>
<circle cx="99.6" cy="130.9" r="0.9" fill="#d45818"/>
<circle cx="71.5" cy="110.8" r="1.0" fill="#d45818"/>
<circle cx="90.3" cy="143.9" r="1.1" fill="#d45818"/>
<circle cx="100.5" cy="132.8" r="0.8" fill="#d45818"/>
<circle cx="84.0" cy="120.1" r="1.2" fill="#d45818"/>
<circle cx="91.1" cy="148.2" r="0.8" fill="#d45818"/>
<circle cx="70.0" cy="144.2" r="0.8" fill="#d45818"/>
<circle cx="73.2" cy="114.3" r="1.0" fill="#d45818"/>
<circle cx="81.5" cy="142.8" r="1.0" fill="#d45818"/>
<circle cx="80.0" cy="111.7" r="1.0" fill="#d45818"/>
<circle cx="101.7" cy="125.7" r="0.8" fill="#d45818"/>
<circle cx="68.3" cy="137.7" r="1.2" fill="#d45818"/>
<circle cx="67.9" cy="118.6" r="1.1" fill="#d45818"/>
<circle cx="98.8" cy="128.2" r="1.1" fill="#d45818"/>
<circle cx="96.7" cy="135.1" r="1.2" fill="#d45818"/>
<circle cx="105.7" cy="130.9" r="1.0" fill="#d45818"/>
<circle cx="93.7" cy="119.5" r="0.9" fill="#d45818"/>
<circle cx="68.7" cy="111.4" r="0.7" fill="#d45818"/>
<circle cx="102.5" cy="123.7" r="1.1" fill="#d45818"/>
<circle cx="80.4" cy="134.2" r="0.9" fill="#d45818"/>
<circle cx="80.7" cy="122.8" r="1.1" fill="#d45818"/>
<circle cx="76.0" cy="123.3" r="1.2" fill="#d45818"/>
<circle cx="98.1" cy="147.7" r="0.7" fill="#d45818"/>
<circle cx="76.0" cy="148.0" r="0.8" fill="#d45818"/>
<circle cx="85.0" cy="149.1" r="1.1" fill="#d45818"/>
<circle cx="81.5" cy="146.9" r="1.0" fill="#d45818"/>
<circle cx="91.6" cy="114.5" r="0.9" fill="#d45818"/>
<circle cx="95.1" cy="116.9" r="0.9" fill="#d45818"/>
<circle cx="70.7" cy="125.4" r="0.7" fill="#d45818"/>
<circle cx="86.5" cy="113.7" r="1.3" fill="#d45818"/>
<circle cx="72.6" cy="129.1" r="0.7" fill="#d45818"/>
<circle cx="76.0" cy="140.4" r="1.0" fill="#d45818"/>
<circle cx="81.7" cy="139.5" r="1.2" fill="#d45818"/>
<circle cx="73.0" cy="143.9" r="0.7" fill="#d45818"/>
<circle cx="91.7" cy="130.2" r="0.8" fill="#d45818"/>
<circle cx="68.2" cy="124.5" r="0.8" fill="#d45818"/>
<circle cx="75.8" cy="106.6" r="1.1" fill="#d45818"/>
<circle cx="77.8" cy="148.6" r="1.2" fill="#d45818"/>
<circle cx="107.6" cy="113.7" r="0.7" fill="#d45818"/>
<circle cx="109.8" cy="124.7" r="0.8" fill="#d45818"/>
<circle cx="96.2" cy="105.8" r="0.7" fill="#d45818"/>
<circle cx="88.2" cy="106.1" r="1.1" fill="#d45818"/>
<circle cx="92.9" cy="125.9" r="0.7" fill="#d45818"/>
<circle cx="93.8" cy="124.6" r="1.0" fill="#d45818"/>
<circle cx="78.7" cy="133.4" r="1.1" fill="#d45818"/>
<circle cx="98.1" cy="120.4" r="1.1" fill="#d45818"/>
<circle cx="76.7" cy="138.5" r="0.8" fill="#d45818"/>
<circle cx="78.3" cy="150.1" r="1.3" fill="#d45818"/>
<circle cx="69.2" cy="122.8" r="0.8" fill="#d45818"/>
<circle cx="101.3" cy="137.2" r="1.0" fill="#d45818"/>
<circle cx="104.4" cy="118.3" r="0.8" fill="#d45818"/>
<circle cx="89.5" cy="116.7" r="0.8" fill="#d45818"/>
<circle cx="76.1" cy="128.5" r="1.0" fill="#d45818"/>
<circle cx="109.7" cy="136.9" r="1.2" fill="#d45818"/>
<circle cx="97.9" cy="139.9" r="0.8" fill="#d45818"/>
<circle cx="97.5" cy="148.2" r="1.0" fill="#d45818"/>
<circle cx="82.1" cy="127.4" r="1.1" fill="#d45818"/>
<circle cx="75.6" cy="145.0" r="1.0" fill="#d45818"/>
<circle cx="103.2" cy="111.3" r="1.0" fill="#d45818"/>
<circle cx="92.4" cy="124.8" r="0.9" fill="#d45818"/>
<circle cx="103.4" cy="132.0" r="0.7" fill="#d45818"/>
<circle cx="79.0" cy="124.7" r="0.9" fill="#d45818"/>
<circle cx="100.5" cy="144.6" r="1.1" fill="#d45818"/>
<circle cx="84.7" cy="129.8" r="1.3" fill="#d45818"/>
<circle cx="82.1" cy="138.6" r="0.7" fill="#d45818"/>
<circle cx="63.8" cy="128.0" r="0.8" fill="#d45818"/>
<circle cx="85.0" cy="145.5" r="1.2" fill="#d45818"/>
<circle cx="101.8" cy="133.7" r="0.8" fill="#d45818"/>
<circle cx="87.5" cy="121.3" r="0.8" fill="#d45818"/>
<circle cx="72.6" cy="117.4" r="0.8" fill="#d45818"/>
<circle cx="73.2" cy="112.7" r="1.3" fill="#d45818"/>
<circle cx="110.8" cy="123.8" r="1.0" fill="#d45818"/>
<circle cx="71.3" cy="134.4" r="0.8" fill="#d45818"/>
<circle cx="106.2" cy="126.9" r="1.0" fill="#d45818"/>
<circle cx="84.9" cy="149.9" r="0.9" fill="#d45818"/>
<circle cx="102.9" cy="124.0" r="0.9" fill="#d45818"/>
<circle cx="99.9" cy="144.4" r="1.2" fill="#d45818"/>
<circle cx="104.1" cy="126.1" r="0.7" fill="#d45818"/>
<circle cx="96.6" cy="118.7" r="1.0" fill="#d45818"/>
<circle cx="96.0" cy="117.4" r="1.0" fill="#d45818"/>
<circle cx="64.7" cy="120.4" r="0.7" fill="#d45818"/>
<circle cx="92.3" cy="121.2" r="1.2" fill="#d45818"/>
<circle cx="97.2" cy="126.6" r="1.2" fill="#d45818"/>
<circle cx="89.5" cy="109.0" r="1.0" fill="#d45818"/>
<circle cx="85.8" cy="131.4" r="0.9" fill="#d45818"/>
<circle cx="83.5" cy="150.2" r="1.1" fill="#d45818"/>
<circle cx="101.6" cy="140.3" r="1.0" fill="#d45818"/>
<circle cx="84.2" cy="108.8" r="0.9" fill="#d45818"/>
<circle cx="95.4" cy="103.8" r="0.7" fill="#d45818"/>
<circle cx="69.1" cy="112.1" r="1.3" fill="#d45818"/>
<circle cx="88.7" cy="115.2" r="1.1" fill="#d45818"/>
<circle cx="77.4" cy="139.4" r="1.1" fill="#d45818"/>
<circle cx="77.4" cy="104.4" r="1.1" fill="#d45818"/>
<circle cx="98.3" cy="109.8" r="1.1" fill="#d45818"/>
<circle cx="107.4" cy="131.9" r="1.2" fill="#d45818"/>
<circle cx="65.5" cy="115.6" r="1.0" fill="#d45818"/>
<circle cx="65.0" cy="117.4" r="1.2" fill="#d45818"/>
<circle cx="70.4" cy="119.2" r="1.3" fill="#d45818"/>
<circle cx="67.3" cy="113.4" r="1.0" fill="#d45818"/>
<circle cx="68.9" cy="130.6" r="0.9" fill="#d45818"/>
<circle cx="84.1" cy="138.5" r="0.8" fill="#d45818"/>
<circle cx="66.9" cy="140.3" r="1.2" fill="#d45818"/>
<circle cx="104.0" cy="126.6" r="1.1" fill="#d45818"/>
<circle cx="74.1" cy="133.6" r="0.9" fill="#d45818"/>
<circle cx="83.8" cy="140.9" r="0.9" fill="#d45818"/>
<circle cx="102.2" cy="129.4" r="1.3" fill="#d45818"/>
<circle cx="74.9" cy="145.8" r="1.2" fill="#d45818"/>
<circle cx="82.9" cy="123.3" r="1.1" fill="#d45818"/>
<circle cx="110.1" cy="124.0" r="1.1" fill="#d45818"/>
<circle cx="79.8" cy="105.5" r="0.8" fill="#d45818"/>
<circle cx="93.2" cy="132.3" r="1.2" fill="#d45818"/>
<circle cx="76.7" cy="140.6" r="1.0" fill="#d45818"/>
<circle cx="63.1" cy="129.6" r="1.2" fill="#d45818"/>
<circle cx="78.5" cy="114.6" r="1.2" fill="#d45818"/>
<circle cx="96.0" cy="121.3" r="0.8" fill="#d45818"/>
<circle cx="96.7" cy="125.1" r="0.8" fill="#d45818"/>
<circle cx="102.1" cy="121.0" r="0.8" fill="#d45818"/>
<circle cx="82.8" cy="107.3" r="0.7" fill="#d45818"/>
<circle cx="95.3" cy="126.0" r="1.2" fill="#d45818"/>
<circle cx="73.3" cy="112.1" r="1.0" fill="#d45818"/>
<circle cx="110.4" cy="130.6" r="0.9" fill="#d45818"/>
<circle cx="78.6" cy="116.7" r="1.3" fill="#d45818"/>
<circle cx="96.5" cy="134.9" r="0.8" fill="#d45818"/>
<circle cx="70.2" cy="111.3" r="0.8" fill="#d45818"/>
<circle cx="69.5" cy="138.4" r="0.7" fill="#d45818"/>
<circle cx="95.5" cy="115.9" r="1.3" fill="#d45818"/>
<circle cx="89.9" cy="111.8" r="1.3" fill="#d45818"/>
<circle cx="89.9" cy="134.6" r="0.9" fill="#d45818"/>
<circle cx="77.9" cy="116.0" r="1.3" fill="#d45818"/>
<circle cx="85.1" cy="137.9" r="1.0" fill="#d45818"/>
<circle cx="99.6" cy="144.1" r="1.0" fill="#d45818"/>
<circle cx="89.6" cy="107.6" r="0.9" fill="#d45818"/>
<circle cx="74.5" cy="120.5" r="0.9" fill="#d45818"/>
<circle cx="89.8" cy="110.6" r="1.3" fill="#d45818"/>
<circle cx="98.3" cy="149.0" r="1.0" fill="#d45818"/>
<circle cx="69.7" cy="121.1" r="0.8" fill="#d45818"/>
<circle cx="75.8" cy="135.6" r="0.8" fill="#d45818"/>
<circle cx="101.5" cy="117.6" r="1.1" fill="#d45818"/>
<circle cx="86.9" cy="136.9" r="0.9" fill="#d45818"/>
<circle cx="109.1" cy="131.4" r="0.8" fill="#d45818"/>
<circle cx="71.9" cy="144.1" r="0.8" fill="#d45818"/>
<circle cx="104.7" cy="131.6" r="1.1" fill="#d45818"/>
<circle cx="108.8" cy="135.5" r="1.0" fill="#d45818"/>
<circle cx="77.8" cy="149.1" r="0.9" fill="#d45818"/>
<circle cx="110.3" cy="127.2" r="0.7" fill="#d45818"/>
<circle cx="95.9" cy="109.9" r="1.0" fill="#d45818"/>
<circle cx="69.4" cy="137.6" r="1.3" fill="#d45818"/>
<circle cx="74.1" cy="121.7" r="0.8" fill="#d45818"/>
<circle cx="76.8" cy="117.8" r="0.7" fill="#d45818"/>
<circle cx="88.2" cy="148.6" r="1.2" fill="#d45818"/>
<circle cx="80.6" cy="120.4" r="1.0" fill="#d45818"/>
<circle cx="89.8" cy="115.0" r="1.1" fill="#d45818"/>
<circle cx="72.0" cy="122.1" r="1.0" fill="#d45818"/>
<circle cx="108.2" cy="131.6" r="0.7" fill="#d45818"/>
<circle cx="104.3" cy="134.2" r="1.2" fill="#d45818"/>
<circle cx="89.4" cy="150.3" r="0.8" fill="#d45818"/>
<circle cx="108.1" cy="136.5" r="1.0" fill="#d45818"/>
<circle cx="95.3" cy="126.6" r="1.0" fill="#d45818"/>
<circle cx="82.1" cy="146.8" r="1.2" fill="#d45818"/>
<circle cx="108.2" cy="127.7" r="0.7" fill="#d45818"/>
<circle cx="80.8" cy="139.2" r="0.7" fill="#d45818"/>
<circle cx="106.4" cy="130.1" r="1.0" fill="#d45818"/>
<circle cx="82.9" cy="148.1" r="0.9" fill="#d45818"/>
<circle cx="89.9" cy="104.2" r="1.2" fill="#d45818"/>
<circle cx="86.7" cy="134.8" r="0.9" fill="#d45818"/>
<circle cx="87.8" cy="109.6" r="1.2" fill="#d45818"/>
<circle cx="104.1" cy="135.0" r="0.7" fill="#d45818"/>
<circle cx="101.7" cy="121.6" r="0.7" fill="#d45818"/>
<circle cx="111.5" cy="129.1" r="0.7" fill="#d45818"/>
<circle cx="102.4" cy="134.3" r="0.9" fill="#d45818"/>
<circle cx="111.2" cy="122.8" r="1.2" fill="#d45818"/>
<circle cx="74.4" cy="143.1" r="0.9" fill="#d45818"/>
<circle cx="77.3" cy="142.2" r="1.1" fill="#d45818"/>
<circle cx="75.8" cy="125.7" r="0.9" fill="#d45818"/>
<circle cx="91.5" cy="134.8" r="1.0" fill="#d45818"/>
<circle cx="75.7" cy="136.9" r="1.3" fill="#d45818"/>
<circle cx="77.6" cy="136.3" r="0.9" fill="#d45818"/>
<circle cx="111.1" cy="125.1" r="1.1" fill="#d45818"/>
<circle cx="85.4" cy="126.7" r="1.3" fill="#d45818"/>
<circle cx="88.0" cy="114.7" r="1.1" fill="#d45818"/>
<circle cx="104.1" cy="120.6" r="0.9" fill="#d45818"/>
<circle cx="79.8" cy="150.3" r="1.2" fill="#d45818"/>
<circle cx="68.3" cy="118.3" r="1.0" fill="#d45818"/>
<circle cx="81.5" cy="135.1" r="1.2" fill="#d45818"/>
<circle cx="98.8" cy="141.0" r="1.1" fill="#d45818"/>
<circle cx="100.5" cy="115.2" r="1.2" fill="#d45818"/>
<circle cx="100.5" cy="146.0" r="1.0" fill="#d45818"/>
<circle cx="71.1" cy="134.3" r="1.2" fill="#d45818"/>
<circle cx="103.8" cy="144.4" r="1.2" fill="#d45818"/>
<circle cx="73.9" cy="136.1" r="0.7" fill="#d45818"/>
<circle cx="73.5" cy="115.4" r="1.1" fill="#d45818"/>
<circle cx="84.8" cy="135.9" r="1.0" fill="#d45818"/>
<circle cx="96.2" cy="118.0" r="1.0" fill="#d45818"/>
<circle cx="82.7" cy="125.8" r="0.8" fill="#d45818"/>
<circle cx="69.3" cy="138.7" r="1.2" fill="#d45818"/>
<circle cx="83.9" cy="117.5" r="1.1" fill="#d45818"/>
<circle cx="95.0" cy="114.3" r="1.2" fill="#d45818"/>
<circle cx="67.4" cy="112.7" r="0.8" fill="#d45818"/>
<circle cx="96.4" cy="147.6" r="1.1" fill="#d45818"/>
<circle cx="76.6" cy="135.9" r="0.9" fill="#d45818"/>
<circle cx="100.0" cy="112.4" r="1.2" fill="#d45818"/>
<circle cx="88.8" cy="124.7" r="1.1" fill="#d45818"/>
<circle cx="98.0" cy="116.4" r="0.9" fill="#d45818"/>
<circle cx="108.8" cy="120.2" r="1.1" fill="#d45818"/>
<circle cx="76.9" cy="137.5" r="0.9" fill="#d45818"/>
<circle cx="96.2" cy="140.4" r="1.2" fill="#d45818"/>
<circle cx="89.7" cy="141.3" r="0.8" fill="#d45818"/>
<circle cx="104.9" cy="133.9" r="1.2" fill="#d45818"/>
<circle cx="78.3" cy="148.3" r="0.8" fill="#d45818"/>
<circle cx="66.2" cy="139.7" r="1.3" fill="#d45818"/>
<circle cx="75.3" cy="110.1" r="1.0" fill="#d45818"/>
<circle cx="91.2" cy="132.4" r="1.1" fill="#d45818"/>
<circle cx="81.8" cy="140.9" r="1.3" fill="#d45818"/>
<circle cx="74.6" cy="126.6" r="1.0" fill="#d45818"/>
<circle cx="95.4" cy="148.3" r="0.9" fill="#d45818"/>
<circle cx="95.5" cy="138.7" r="1.0" fill="#d45818"/>
<circle cx="86.8" cy="105.4" r="0.9" fill="#d45818"/>
<circle cx="66.9" cy="129.5" r="0.9" fill="#d45818"/>
<circle cx="70.1" cy="113.8" r="0.8" fill="#d45818"/>
<circle cx="78.3" cy="114.8" r="0.9" fill="#d45818"/>
<circle cx="93.6" cy="145.2" r="0.9" fill="#d45818"/>
<circle cx="91.6" cy="116.7" r="1.0" fill="#d45818"/>
<circle cx="80.0" cy="122.2" r="0.8" fill="#d45818"/>
<circle cx="90.9" cy="125.7" r="0.8" fill="#d45818"/>
<circle cx="67.9" cy="141.8" r="0.8" fill="#d45818"/>
<circle cx="73.8" cy="108.2" r="1.1" fill="#d45818"/>
<circle cx="96.0" cy="124.0" r="1.2" fill="#d45818"/>
<circle cx="71.5" cy="136.5" r="1.3" fill="#d45818"/>
<circle cx="75.5" cy="148.1" r="1.0" fill="#d45818"/>
<circle cx="78.3" cy="110.8" r="1.3" fill="#d45818"/>
<circle cx="91.2" cy="148.5" r="0.8" fill="#d45818"/>
<circle cx="90.9" cy="130.3" r="0.8" fill="#d45818"/>
<circle cx="72.4" cy="123.4" r="1.0" fill="#d45818"/>
<circle cx="87.9" cy="108.1" r="0.7" fill="#d45818"/>
<circle cx="100.2" cy="143.2" r="1.1" fill="#d45818"/>
<circle cx="106.1" cy="140.0" r="1.1" fill="#d45818"/>
<circle cx="77.6" cy="124.4" r="0.8" fill="#d45818"/>
<circle cx="74.3" cy="143.8" r="1.3" fill="#d45818"/>
<circle cx="96.5" cy="111.3" r="0.9" fill="#d45818"/>
<circle cx="105.2" cy="140.9" r="1.2" fill="#d45818"/>
<circle cx="107.3" cy="137.8" r="1.0" fill="#d45818"/>
<circle cx="89.8" cy="137.1" r="1.2" fill="#d45818"/>
<circle cx="89.3" cy="118.9" r="1.0" fill="#d45818"/>
<circle cx="85.6" cy="136.3" r="1.1" fill="#d45818"/>
<circle cx="82.3" cy="117.2" r="1.3" fill="#d45818"/>
<circle cx="106.5" cy="142.2" r="0.7" fill="#d45818"/>
<circle cx="93.4" cy="113.3" r="1.3" fill="#d45818"/>
<circle cx="76.2" cy="140.3" r="0.9" fill="#d45818"/>
<circle cx="74.1" cy="109.0" r="0.9" fill="#d45818"/>
<circle cx="68.2" cy="128.3" r="1.2" fill="#d45818"/>
<circle cx="109.4" cy="121.4" r="1.2" fill="#d45818"/>
<circle cx="93.2" cy="109.1" r="0.8" fill="#d45818"/>
<circle cx="100.7" cy="144.7" r="1.2" fill="#d45818"/>
<circle cx="97.9" cy="145.5" r="1.2" fill="#d45818"/>
<circle cx="71.5" cy="124.5" r="0.8" fill="#d45818"/>
<circle cx="70.9" cy="129.7" r="1.0" fill="#d45818"/>
<circle cx="103.2" cy="127.8" r="1.1" fill="#d45818"/>
<circle cx="68.0" cy="141.5" r="1.1" fill="#d45818"/>
<circle cx="95.6" cy="146.9" r="1.1" fill="#d45818"/>
<circle cx="98.3" cy="111.1" r="1.1" fill="#d45818"/>
<circle cx="90.3" cy="145.1" r="0.7" fill="#d45818"/>
<circle cx="91.7" cy="121.0" r="1.3" fill="#d45818"/>
<circle cx="86.4" cy="114.9" r="0.8" fill="#d45818"/>
<circle cx="96.7" cy="141.1" r="1.0" fill="#d45818"/>
<circle cx="89.1" cy="118.5" r="1.0" fill="#d45818"/>
<circle cx="96.6" cy="119.3" r="0.8" fill="#d45818"/>
<circle cx="74.9" cy="121.5" r="0.8" fill="#d45818"/>
<circle cx="69.8" cy="144.2" r="0.8" fill="#d45818"/>
<circle cx="84.3" cy="137.9" r="1.3" fill="#d45818"/>
<circle cx="83.3" cy="135.6" r="0.7" fill="#d45818"/>
<circle cx="79.5" cy="104.1" r="0.7" fill="#d45818"/>
<circle cx="80.8" cy="148.1" r="1.0" fill="#d45818"/>
<circle cx="93.8" cy="129.3" r="1.2" fill="#d45818"/>
<circle cx="72.7" cy="112.2" r="1.1" fill="#d45818"/>
<circle cx="98.8" cy="143.9" r="1.0" fill="#d45818"/>
<circle cx="72.6" cy="136.5" r="1.2" fill="#d45818"/>
<circle cx="76.8" cy="117.2" r="0.7" fill="#d45818"/>
<circle cx="80.6" cy="126.1" r="1.2" fill="#d45818"/>
<circle cx="109.5" cy="122.9" r="0.9" fill="#d45818"/>
<circle cx="101.8" cy="110.2" r="1.2" fill="#d45818"/>
<circle cx="71.6" cy="125.2" r="1.1" fill="#d45818"/>
<circle cx="87.2" cy="138.8" r="0.7" fill="#d45818"/>
<circle cx="75.5" cy="147.2" r="0.8" fill="#d45818"/>
<circle cx="76.8" cy="140.8" r="0.7" fill="#d45818"/>
<circle cx="68.2" cy="117.0" r="1.1" fill="#d45818"/>
<circle cx="80.2" cy="103.8" r="0.8" fill="#d45818"/>
<circle cx="108.9" cy="124.9" r="1.1" fill="#d45818"/>
<circle cx="72.6" cy="135.7" r="0.8" fill="#d45818"/>
<circle cx="84.2" cy="105.2" r="0.8" fill="#d45818"/>
<circle cx="76.2" cy="132.6" r="1.2" fill="#d45818"/>
<circle cx="91.3" cy="116.6" r="1.2" fill="#d45818"/>
<circle cx="89.1" cy="136.8" r="0.8" fill="#d45818"/>
<circle cx="84.9" cy="110.3" r="0.8" fill="#d45818"/>
<circle cx="77.7" cy="138.3" r="0.9" fill="#d45818"/>
<circle cx="102.6" cy="130.6" r="1.2" fill="#d45818"/>
<circle cx="107.4" cy="136.1" r="0.8" fill="#d45818"/>
<circle cx="90.0" cy="118.1" r="0.7" fill="#d45818"/>
<circle cx="76.0" cy="145.6" r="1.2" fill="#d45818"/>
<circle cx="90.1" cy="112.9" r="0.7" fill="#d45818"/>
<circle cx="91.9" cy="141.3" r="1.0" fill="#d45818"/>
<circle cx="93.9" cy="104.2" r="0.9" fill="#d45818"/>
<circle cx="96.7" cy="133.3" r="1.1" fill="#d45818"/>
<circle cx="67.0" cy="137.1" r="1.2" fill="#d45818"/>
<circle cx="91.7" cy="135.0" r="0.8" fill="#d45818"/>
<circle cx="100.7" cy="138.2" r="1.1" fill="#d45818"/>
<circle cx="82.4" cy="148.6" r="1.3" fill="#d45818"/>
<circle cx="86.7" cy="126.0" r="1.0" fill="#d45818"/>
<circle cx="77.2" cy="140.9" r="1.2" fill="#d45818"/>
<circle cx="87.0" cy="121.5" r="1.0" fill="#d45818"/>
<circle cx="101.2" cy="139.2" r="1.1" fill="#d45818"/>
<circle cx="91.5" cy="142.7" r="1.0" fill="#d45818"/>
<circle cx="73.7" cy="110.9" r="1.3" fill="#d45818"/>
<circle cx="106.9" cy="126.5" r="0.7" fill="#d45818"/>
<circle cx="101.0" cy="112.8" r="0.9" fill="#d45818"/>
<circle cx="96.9" cy="130.0" r="0.9" fill="#d45818"/>
<circle cx="97.6" cy="145.8" r="0.9" fill="#d45818"/>
<circle cx="102.7" cy="132.1" r="0.8" fill="#d45818"/>
<circle cx="89.3" cy="113.4" r="1.2" fill="#d45818"/>
<circle cx="81.3" cy="140.5" r="0.8" fill="#d45818"/>
<circle cx="78.8" cy="111.9" r="1.2" fill="#d45818"/>
<circle cx="71.6" cy="145.8" r="0.9" fill="#d45818"/>
<circle cx="75.1" cy="128.2" r="0.7" fill="#d45818"/>
<circle cx="100.2" cy="132.6" r="0.9" fill="#d45818"/>
<circle cx="68.2" cy="140.2" r="1.3" fill="#d45818"/>
<circle cx="72.5" cy="109.4" r="1.2" fill="#d45818"/>
<circle cx="101.3" cy="115.2" r="0.9" fill="#d45818"/>
<circle cx="96.4" cy="117.9" r="1.1" fill="#d45818"/>
<circle cx="85.4" cy="145.8" r="1.0" fill="#d45818"/>
<circle cx="99.7" cy="131.2" r="1.1" fill="#d45818"/>
<circle cx="66.4" cy="129.4" r="1.3" fill="#d45818"/>
<circle cx="85.0" cy="120.5" r="0.8" fill="#d45818"/>
<circle cx="104.8" cy="115.6" r="0.7" fill="#d45818"/>
<circle cx="78.4" cy="105.0" r="1.0" fill="#d45818"/>
<circle cx="105.3" cy="131.4" r="0.7" fill="#d45818"/>
<circle cx="97.9" cy="142.9" r="0.8" fill="#d45818"/>
<circle cx="72.0" cy="124.6" r="1.2" fill="#d45818"/>
<circle cx="68.1" cy="119.4" r="0.7" fill="#d45818"/>
<circle cx="110.3" cy="128.8" r="1.3" fill="#d45818"/>
<circle cx="84.1" cy="110.2" r="1.1" fill="#d45818"/>
<circle cx="78.7" cy="114.8" r="1.1" fill="#d45818"/>
<circle cx="91.8" cy="115.5" r="0.9" fill="#d45818"/>
<circle cx="82.6" cy="139.1" r="1.1" fill="#d45818"/>
<circle cx="80.8" cy="137.3" r="0.7" fill="#d45818"/>
<circle cx="90.4" cy="125.7" r="0.9" fill="#d45818"/>
<circle cx="83.7" cy="104.0" r="1.2" fill="#d45818"/>
<circle cx="75.5" cy="126.9" r="1.2" fill="#d45818"/>
<circle cx="85.0" cy="142.2" r="1.2" fill="#d45818"/>
<circle cx="84.2" cy="109.1" r="0.8" fill="#d45818"/>
<circle cx="67.7" cy="137.5" r="1.2" fill="#d45818"/>
<circle cx="71.9" cy="135.5" r="0.8" fill="#d45818"/>
<circle cx="79.7" cy="148.5" r="1.1" fill="#d45818"/>
<circle cx="68.9" cy="130.8" r="1.0" fill="#d45818"/>
<circle cx="98.3" cy="132.5" r="0.9" fill="#d45818"/>
<circle cx="88.4" cy="139.0" r="1.3" fill="#d45818"/>
<circle cx="64.4" cy="135.1" r="1.3" fill="#d45818"/>
<circle cx="88.7" cy="127.9" r="1.0" fill="#d45818"/>
<circle cx="79.4" cy="117.5" r="1.0" fill="#d45818"/>
<circle cx="97.4" cy="131.5" r="1.3" fill="#d45818"/>
<circle cx="87.6" cy="113.5" r="1.0" fill="#d45818"/>
<circle cx="89.0" cy="123.4" r="0.8" fill="#d45818"/>
<circle cx="99.1" cy="131.4" r="1.0" fill="#d45818"/>
<circle cx="108.5" cy="136.6" r="0.8" fill="#d45818"/>
<circle cx="78.3" cy="113.9" r="0.9" fill="#d45818"/>
<circle cx="85.0" cy="144.6" r="1.3" fill="#d45818"/>
<circle cx="99.2" cy="119.1" r="0.9" fill="#d45818"/>
<circle cx="70.1" cy="109.4" r="1.3" fill="#d45818"/>
<circle cx="93.3" cy="129.5" r="1.3" fill="#d45818"/>
<circle cx="86.2" cy="133.6" r="1.3" fill="#d45818"/>
<circle cx="83.0" cy="119.5" r="0.8" fill="#d45818"/>
<circle cx="95.1" cy="140.6" r="1.2" fill="#d45818"/>
<circle cx="77.6" cy="131.7" r="0.8" fill="#d45818"/>
<circle cx="102.6" cy="112.0" r="1.0" fill="#d45818"/>
<circle cx="85.5" cy="104.9" r="1.1" fill="#d45818"/>
<circle cx="110.4" cy="126.8" r="0.9" fill="#d45818"/>
<circle cx="101.1" cy="117.8" r="1.0" fill="#d45818"/>
<circle cx="88.8" cy="117.0" r="0.7" fill="#d45818"/>
<circle cx="86.9" cy="102.6" r="1.3" fill="#d45818"/>
<circle cx="72.1" cy="142.9" r="1.2" fill="#d45818"/>
<circle cx="99.9" cy="139.5" r="0.8" fill="#d45818"/>
<circle cx="75.1" cy="116.9" r="0.9" fill="#d45818"/>
<circle cx="106.2" cy="135.5" r="0.9" fill="#d45818"/>
<circle cx="101.0" cy="109.2" r="1.3" fill="#d45818"/>
<circle cx="104.0" cy="119.2" r="1.1" fill="#d45818"/>
<circle cx="94.0" cy="146.3" r="0.9" fill="#d45818"/>
<circle cx="84" cy="123" r="2.5" fill="#b070d0"/>
<path d="M143.1 160.4 C138.6 154.7 129.6 151.8 128.1 152.4 C124.4 153.3 122.2 160.8 124.8 163.6 C125.8 164.9 135.0 167.2 141.8 164.8 Z" fill="#d84080" stroke="#801848" stroke-width="0.7"/>
<path d="M139.0 159.9 C136.6 156.7 131.9 155.4 131.0 155.8 C128.9 156.4 127.8 161.0 129.4 162.6 C130.0 163.3 134.8 164.3 138.3 162.6 Z" fill="#f478b0" opacity="0.6" filter="url(#b4P)"/>
<path d="M147.4 157.7 C147.0 149.0 140.5 138.0 139.0 137.4 C135.6 135.7 129.0 139.8 129.0 143.6 C128.9 145.2 136.0 155.9 143.6 160.1 Z" fill="#d84080" stroke="#801848" stroke-width="0.7"/>
<path d="M144.6 154.7 C144.2 149.3 139.9 142.2 139.0 141.9 C136.9 140.9 133.0 143.4 133.0 145.7 C133.0 146.7 137.6 153.5 142.4 156.2 Z" fill="#f478b0" opacity="0.6" filter="url(#b4P)"/>
<path d="M151.9 158.2 C156.9 149.8 158.6 134.8 157.8 133.4 C156.1 130.0 148.4 129.2 146.1 132.3 C145.0 133.5 144.0 148.6 147.3 157.8 Z" fill="#d84080" stroke="#801848" stroke-width="0.7"/>
<path d="M151.3 154.2 C154.4 148.3 155.6 137.8 155.1 136.9 C154.1 134.9 149.5 134.5 148.1 136.3 C147.5 137.0 146.7 147.6 148.6 153.9 Z" fill="#f478b0" opacity="0.6" filter="url(#b4P)"/>
<path d="M155.3 161.4 C164.4 158.2 175.0 147.8 175.3 146.2 C176.1 142.5 170.6 137.1 166.9 138.0 C165.3 138.3 155.1 149.1 152.1 158.2 Z" fill="#d84080" stroke="#801848" stroke-width="0.7"/>
<path d="M157.3 157.8 C163.3 155.4 170.7 148.4 170.9 147.4 C171.4 145.2 168.1 141.9 165.9 142.4 C165.0 142.5 157.8 149.9 155.4 155.9 Z" fill="#f478b0" opacity="0.6" filter="url(#b4P)"/>
<path d="M156.2 165.8 C166.4 168.5 183.0 166.4 184.1 165.3 C187.0 162.9 185.9 155.1 182.4 153.7 C180.9 152.9 164.5 155.7 155.5 161.3 Z" fill="#d84080" stroke="#801848" stroke-width="0.7"/>
<path d="M159.9 164.1 C167.1 165.7 179.1 164.3 179.8 163.6 C181.6 162.2 180.9 157.5 178.9 156.6 C178.0 156.1 166.1 157.9 159.6 161.4 Z" fill="#f478b0" opacity="0.6" filter="url(#b4P)"/>
<path d="M154.3 170.0 C161.2 178.4 176.4 186.9 178.0 186.7 C181.7 186.5 185.4 179.6 183.5 176.4 C182.8 174.9 167.3 167.0 156.4 166.0 Z" fill="#d84080" stroke="#801848" stroke-width="0.7"/>
<path d="M158.3 170.8 C163.4 176.6 174.4 182.9 175.4 182.7 C177.7 182.6 179.9 178.5 178.8 176.6 C178.4 175.7 167.2 169.7 159.6 168.5 Z" fill="#f478b0" opacity="0.6" filter="url(#b4P)"/>
<path d="M150.5 172.1 C151.3 182.6 158.9 197.3 160.3 198.0 C163.6 199.9 170.5 196.2 170.7 192.5 C170.9 190.9 162.8 176.4 154.5 170.0 Z" fill="#d84080" stroke="#801848" stroke-width="0.7"/>
<path d="M153.3 175.2 C154.2 182.3 159.5 192.8 160.4 193.2 C162.3 194.4 166.5 192.2 166.6 189.9 C166.8 189.0 161.1 178.7 155.7 173.9 Z" fill="#f478b0" opacity="0.6" filter="url(#b4P)"/>
<path d="M145.8 171.6 C140.4 179.9 138.1 195.1 138.9 196.5 C140.4 200.0 148.1 201.0 150.5 198.0 C151.6 196.9 153.3 181.6 150.3 172.2 Z" fill="#d84080" stroke="#801848" stroke-width="0.7"/>
<path d="M146.1 175.7 C142.8 181.4 141.3 191.8 141.8 192.6 C142.7 194.7 147.3 195.3 148.7 193.5 C149.4 192.8 150.6 182.4 148.8 176.1 Z" fill="#f478b0" opacity="0.6" filter="url(#b4P)"/>
<path d="M142.4 168.4 C134.1 171.3 125.0 180.6 124.9 182.3 C124.1 186.0 129.9 191.2 133.5 190.1 C135.1 189.8 143.7 180.0 145.7 171.5 Z" fill="#d84080" stroke="#801848" stroke-width="0.7"/>
<path d="M140.2 171.9 C135.1 173.8 129.5 179.9 129.4 180.8 C129.0 183.1 132.5 186.2 134.7 185.5 C135.6 185.3 140.9 179.0 142.2 173.7 Z" fill="#f478b0" opacity="0.6" filter="url(#b4P)"/>
<path d="M141.7 163.4 C135.1 160.1 125.3 161.3 124.2 162.5 C121.3 164.9 122.5 172.7 126.0 174.1 C127.4 174.8 137.1 173.0 142.4 167.9 Z" fill="#d84080" stroke="#801848" stroke-width="0.7"/>
<path d="M137.8 164.6 C134.1 162.8 129.0 163.6 128.4 164.3 C126.7 165.8 127.6 170.4 129.8 171.2 C130.6 171.6 135.7 170.4 138.3 167.3 Z" fill="#f478b0" opacity="0.6" filter="url(#b4P)"/>
<circle cx="149" cy="165" r="10" fill="#c02810"/>
<circle cx="149.8" cy="165.7" r="0.9" fill="#f05020"/>
<circle cx="153.9" cy="170.8" r="0.8" fill="#f05020"/>
<circle cx="149.2" cy="160.6" r="0.8" fill="#f05020"/>
<circle cx="144.8" cy="158.3" r="0.8" fill="#f05020"/>
<circle cx="142.6" cy="167.2" r="0.9" fill="#f05020"/>
<circle cx="156.7" cy="170.1" r="0.7" fill="#f05020"/>
<circle cx="141.7" cy="170.1" r="0.8" fill="#f05020"/>
<circle cx="145.5" cy="169.0" r="1.3" fill="#f05020"/>
<circle cx="149.9" cy="169.1" r="1.1" fill="#f05020"/>
<circle cx="155.5" cy="163.0" r="1.2" fill="#f05020"/>
<circle cx="150.6" cy="170.3" r="1.2" fill="#f05020"/>
<circle cx="158.0" cy="166.7" r="1.1" fill="#f05020"/>
<circle cx="144.0" cy="158.0" r="0.8" fill="#f05020"/>
<circle cx="148.0" cy="156.9" r="0.8" fill="#f05020"/>
<circle cx="150.4" cy="172.2" r="0.7" fill="#f05020"/>
<circle cx="146.3" cy="169.6" r="0.9" fill="#f05020"/>
<circle cx="152.8" cy="158.7" r="1.3" fill="#f05020"/>
<circle cx="158.1" cy="164.6" r="1.2" fill="#f05020"/>
<circle cx="151.3" cy="169.6" r="1.1" fill="#f05020"/>
<circle cx="145.9" cy="159.0" r="0.8" fill="#f05020"/>
<circle cx="152.6" cy="163.1" r="1.1" fill="#f05020"/>
<circle cx="155.3" cy="169.3" r="0.9" fill="#f05020"/>
<circle cx="143.8" cy="157.9" r="1.3" fill="#f05020"/>
<circle cx="145.1" cy="166.1" r="1.2" fill="#f05020"/>
<circle cx="150.5" cy="159.0" r="1.0" fill="#f05020"/>
<circle cx="151.6" cy="166.8" r="1.3" fill="#f05020"/>
<circle cx="150.1" cy="168.0" r="0.9" fill="#f05020"/>
<circle cx="153.7" cy="158.8" r="1.0" fill="#f05020"/>
<circle cx="150.6" cy="158.7" r="0.9" fill="#f05020"/>
<circle cx="144.7" cy="161.3" r="1.1" fill="#f05020"/>
<circle cx="150.4" cy="166.2" r="0.8" fill="#f05020"/>
<circle cx="146.2" cy="157.7" r="1.3" fill="#f05020"/>
<circle cx="148.8" cy="173.1" r="1.2" fill="#f05020"/>
<circle cx="143.7" cy="172.4" r="0.7" fill="#f05020"/>
<circle cx="147.9" cy="170.5" r="0.8" fill="#f05020"/>
<circle cx="150.4" cy="166.4" r="1.2" fill="#f05020"/>
<circle cx="147.4" cy="163.7" r="0.8" fill="#f05020"/>
<circle cx="150.7" cy="161.3" r="0.9" fill="#f05020"/>
<circle cx="145.2" cy="166.1" r="1.1" fill="#f05020"/>
<circle cx="153.2" cy="159.9" r="0.9" fill="#f05020"/>
</g>
</g></svg>
<div class="a" style="left:282px;top:84px;width:487px;height:498px;background:#cccccc"></div>
<div class="a" style="left:283px;top:85px;width:482px;height:496px;background:#fff"></div>
<div class="a" style="left:765px;top:85px;width:4px;height:498px;background:#e6e6e6"></div>
<div class="a" style="left:765px;top:85px;width:1px;height:497px;background:#d0d0d0"></div>
<div class="a" style="left:283px;top:85px;width:482px;height:496px;overflow:hidden">
<div class="fr" style="left:15px;top:16px"></div>
<div class="im" style="left:20px;top:33px"><div class="im2"><svg style="left:0;top:0" width="96" height="71" viewBox="0 0 96 71"><defs><filter id="fdef" x="-20%" y="-20%" width="140%" height="140%"><feGaussianBlur stdDeviation="1.2"/></filter><radialGradient id="mdef" cx="1.05" cy="1.1" r="1.25"><stop offset="0" stop-color="#fff"/><stop offset="0.55" stop-color="#fff" stop-opacity="0.8"/><stop offset="1" stop-color="#fff" stop-opacity="0"/></radialGradient><mask id="kdef"><rect width="96" height="71" fill="url(#mdef)"/></mask></defs><rect width="96" height="71" fill="#35457a"/><g filter="url(#fdef)" mask="url(#kdef)"><path d="M125 105 L-74.9 98.0" stroke="#4c5e94" stroke-width="2.5" opacity="0.45"/><path d="M125 105 L-73.1 77.2" stroke="#4c5e94" stroke-width="2.8" opacity="0.45"/><path d="M125 105 L-69.1 56.6" stroke="#4c5e94" stroke-width="3.0" opacity="0.45"/><path d="M125 105 L-62.9 36.6" stroke="#4c5e94" stroke-width="3.2" opacity="0.45"/><path d="M125 105 L-54.8 17.3" stroke="#4c5e94" stroke-width="3.5" opacity="0.45"/><path d="M125 105 L-44.6 -1.0" stroke="#4c5e94" stroke-width="3.8" opacity="0.45"/><path d="M125 105 L-32.6 -18.1" stroke="#4c5e94" stroke-width="4.0" opacity="0.45"/><path d="M125 105 L-18.9 -33.9" stroke="#4c5e94" stroke-width="4.2" opacity="0.45"/><path d="M125 105 L-3.6 -48.2" stroke="#4c5e94" stroke-width="4.5" opacity="0.45"/><path d="M125 105 L13.2 -60.8" stroke="#4c5e94" stroke-width="4.8" opacity="0.45"/><path d="M125 105 L31.1 -71.6" stroke="#4c5e94" stroke-width="5.0" opacity="0.45"/><path d="M125 105 L50.1 -80.4" stroke="#4c5e94" stroke-width="5.2" opacity="0.45"/><path d="M125 105 L69.9 -87.3" stroke="#4c5e94" stroke-width="5.5" opacity="0.45"/><path d="M125 105 L90.3 -92.0" stroke="#4c5e94" stroke-width="5.8" opacity="0.45"/><path d="M125 105 L111.0 -94.5" stroke="#4c5e94" stroke-width="6.0" opacity="0.45"/><path d="M125 105 L132.0 -94.9" stroke="#4c5e94" stroke-width="6.2" opacity="0.45"/></g></svg></div></div>
<div class="lb" style="left:9px;top:129px">default.png</div>
<div class="fr" style="left:137px;top:16px"></div>
<div class="im" style="left:142px;top:33px"><div class="im2"><svg style="left:0;top:0" width="96" height="71" viewBox="0 0 96 71"><defs><filter id="fdra" x="-30%" y="-30%" width="160%" height="160%"><feGaussianBlur stdDeviation="4.5"/></filter><filter id="hdra" x="-30%" y="-30%" width="160%" height="160%"><feGaussianBlur stdDeviation="1.2"/></filter><filter id="kdra" x="-30%" y="-30%" width="160%" height="160%"><feGaussianBlur stdDeviation="0.4"/></filter></defs><rect width="96" height="71" fill="#6a8a50"/><g filter="url(#fdra)"><rect x="-10" y="-10" width="22" height="90" fill="#2e5a1e"/><ellipse cx="15" cy="26" rx="9" ry="14" fill="#1e4a12"/><ellipse cx="14" cy="62" rx="16" ry="9" fill="#2e5a1e"/><ellipse cx="42" cy="6" rx="22" ry="8" fill="#90a870"/><ellipse cx="48" cy="13" rx="9" ry="5" fill="#5a5a38"/><ellipse cx="78" cy="12" rx="18" ry="14" fill="#a8b880"/><ellipse cx="38" cy="44" rx="13" ry="20" fill="#c8d8a8"/><ellipse cx="86" cy="52" rx="12" ry="20" fill="#3a6028"/><ellipse cx="75" cy="51" rx="5" ry="5" fill="#a8b880"/><ellipse cx="50" cy="64" rx="20" ry="7" fill="#7a9a58"/><ellipse cx="62" cy="40" rx="6" ry="10" fill="#8aa868"/></g><g filter="url(#hdra)"><path d="M48 34 Q54 32 58 36 L52 68 Q46 52 48 34 Z" fill="#f0e4e4"/><path d="M50 38 L56 38 L53 58 Z" fill="#e0b0c0"/><path d="M58 30 Q72 20 84 24 Q80 36 62 40 Z" fill="#d8e4c8"/></g><g filter="url(#kdra)"><path d="M22 21 Q38 22 52 27 M56 26 Q70 17 83 12" stroke="#404048" stroke-width="1.3" fill="none" opacity="0.85"/><path d="M55 27 L60 23" stroke="#8a90d0" stroke-width="1.8"/><circle cx="51" cy="35" r="2.6" fill="#3a68c8"/><circle cx="54" cy="29" r="1.8" fill="#8a80b8"/></g></svg></div></div>
<div class="lb" style="left:131px;top:129px">dragonfly.jpg</div>
<div class="fr" style="left:259px;top:16px"></div>
<div class="a" style="left:261px;top:18px;width:105px;height:105px;border:3px solid #4b69b0"></div>
<div class="im" style="left:264px;top:33px"><div class="im2"><svg style="left:0;top:0" width="96" height="71" viewBox="0 0 270 203" preserveAspectRatio="none"><defs>
<filter id="b1T" x="-20%" y="-20%" width="140%" height="140%"><feGaussianBlur stdDeviation="5"/></filter>
<filter id="b2T" x="-20%" y="-20%" width="140%" height="140%"><feGaussianBlur stdDeviation="1.5"/></filter>
<filter id="b3T" x="-20%" y="-20%" width="140%" height="140%"><feGaussianBlur stdDeviation="0.5"/></filter>
<filter id="b4T" x="-50%" y="-50%" width="200%" height="200%"><feGaussianBlur stdDeviation="1.6"/></filter>
<filter id="ctP" x="0" y="0" width="100%" height="100%" color-interpolation-filters="sRGB"><feComponentTransfer><feFuncR type="linear" slope="1.1" intercept="-0.07"/><feFuncG type="linear" slope="1.1" intercept="-0.08"/><feFuncB type="linear" slope="1.1" intercept="-0.08"/></feComponentTransfer></filter>
<filter id="ctT" x="0" y="0" width="100%" height="100%" color-interpolation-filters="sRGB"><feComponentTransfer><feFuncR type="linear" slope="1.2" intercept="-0.12"/><feFuncG type="linear" slope="1.2" intercept="-0.12"/><feFuncB type="linear" slope="1.2" intercept="-0.12"/></feComponentTransfer></filter>
<linearGradient id="pkT" x1="0" y1="0" x2="1" y2="1"><stop offset="0" stop-color="#e8a8d0"/><stop offset="1" stop-color="#c05898"/></linearGradient>
<linearGradient id="plT" x1="0" y1="0" x2="1" y2="1"><stop offset="0" stop-color="#ecd4e0"/><stop offset="1" stop-color="#b88aa8"/></linearGradient>
<linearGradient id="pmT" x1="0" y1="0" x2="1" y2="1"><stop offset="0" stop-color="#e090d0"/><stop offset="1" stop-color="#a84898"/></linearGradient>
<linearGradient id="phT" x1="0" y1="0" x2="1" y2="1"><stop offset="0" stop-color="#f870a8"/><stop offset="1" stop-color="#d03078"/></linearGradient>
</defs>
<g filter="url(#ctT)">
<rect width="270" height="203" fill="#3a3418"/>
<g filter="url(#b1T)">
<rect x="-10" y="-10" width="55" height="50" fill="#26401e"/>
<path d="M0 35 L60 25 L110 40 L115 100 L90 170 L40 180 L0 175 Z" fill="#7e7c48"/>
<path d="M0 105 L55 100 L65 175 L30 203 L0 203 Z" fill="#948c66"/>
<path d="M40 175 L130 180 L135 210 L30 210 Z" fill="#3e3422"/>
<path d="M110 -10 L280 -10 L280 20 L160 25 Z" fill="#7a7040"/>
<path d="M145 20 L280 30 L280 110 L200 120 L150 110 Z" fill="#5a5a2c"/>
<path d="M120 110 L280 115 L280 210 L120 210 Z" fill="#1c2812"/>
<path d="M235 180 L280 170 L280 210 L225 210 Z" fill="#806428"/>
</g>
<g filter="url(#b2T)">
<path d="M0 0 L40 0 Q35 12 22 20 Q12 30 0 38 Z" fill="#2a4a26"/>
<path d="M2 8 Q12 4 20 12 Q12 16 4 22 Z M18 18 Q28 14 34 22 Q25 28 16 28 Z M0 28 Q8 24 14 32 L2 38 Z" fill="#4a7a44"/>
<path d="M10 30 Q50 20 100 40 L100 110 Q60 120 10 105 Z" fill="#4a4228"/>
<path d="M55.0 52.0 Q97.8 31.8 62.0 -4.0 Q18.5 21.8 55.0 52.0 Z" fill="#9a8c52"/>
<path d="M55.0 52.0 Q97.8 31.8 62.0 -4.0 Q18.5 21.8 55.0 52.0 Z" fill="none" stroke="#a04a20" stroke-width="1.6" opacity="0.8"/>
<path d="M55 52 L62 -4" stroke="#5a3a20" stroke-width="1" opacity="0.7"/>
<path d="M55.0 52.0 Q36.4 7.4 -4.0 40.0 Q20.5 85.8 55.0 52.0 Z" fill="#8e7e48"/>
<path d="M55.0 52.0 Q36.4 7.4 -4.0 40.0 Q20.5 85.8 55.0 52.0 Z" fill="none" stroke="#a85024" stroke-width="1.6" opacity="0.8"/>
<path d="M55 52 L-4 40" stroke="#5a3a20" stroke-width="1" opacity="0.7"/>
<path d="M55.0 52.0 Q2.8 50.1 12.0 106.0 Q68.5 102.5 55.0 52.0 Z" fill="#8e9058"/>
<path d="M55.0 52.0 Q2.8 50.1 12.0 106.0 Q68.5 102.5 55.0 52.0 Z" fill="none" stroke="#b05a24" stroke-width="1.6" opacity="0.8"/>
<path d="M55 52 L12 106" stroke="#5a3a20" stroke-width="1" opacity="0.7"/>
<path d="M55.0 52.0 Q22.9 93.5 76.0 112.0 Q106.0 64.5 55.0 52.0 Z" fill="#a09c64"/>
<path d="M55 52 L76 112" stroke="#5a3a20" stroke-width="1" opacity="0.7"/>
<path d="M55.0 52.0 Q68.8 96.3 106.0 64.0 Q87.1 18.5 55.0 52.0 Z" fill="#968e58"/>
<path d="M55 52 L106 64" stroke="#5a3a20" stroke-width="1" opacity="0.7"/>
<path d="M0 58 Q10 60 14 80 Q8 95 0 100 Z" fill="#8a9058"/>
<path d="M0 105 Q30 95 62 112 Q55 150 40 170 Q15 175 0 170 Z" fill="#a09a70"/>
<path d="M40 125 L0 110 M40 125 L5 160 M40 125 L55 170 M40 125 L62 115" stroke="#6a5a40" stroke-width="1" fill="none" opacity="0.8"/>
<path d="M0 165 Q25 160 45 175 Q35 195 20 203 L0 203 Z" fill="#8a7858"/>
<path d="M50 180 Q80 170 110 185 L105 203 L55 203 Z" fill="#6a5a3c"/>
<path d="M112 0 L160 0 Q158 15 140 24 Q125 20 112 0 Z" fill="#9a8a50"/>
<path d="M192 0 L245 0 Q235 20 205 28 Q195 15 192 0 Z" fill="#aa9c60"/>
<path d="M150 10 Q175 5 195 30 Q180 55 160 60 Q150 40 150 10 Z" fill="#3a3218"/>
<path d="M172 28 Q205 25 232 55 Q215 68 185 62 Q175 45 172 28 Z" fill="#7a8440"/>
<path d="M205 30 Q225 40 232 55" stroke="#c8b850" stroke-width="3" fill="none"/>
<path d="M235 0 L270 0 L270 60 Q248 50 235 25 Z" fill="#6a6838"/>
<path d="M230 30 Q255 35 270 60 L270 95 Q245 80 230 30 Z" fill="#5a5a30"/>
<path d="M150 60 Q190 55 235 75 Q210 105 160 112 Q150 90 150 60 Z" fill="#6a7038"/>
<path d="M150 112 Q175 95 200 90" stroke="#a05024" stroke-width="2" fill="none"/>
<path d="M160 110 Q180 108 188 125 Q175 135 160 132 Z" fill="#3a6a34"/>
<path d="M180 150 Q195 148 208 178 Q210 195 205 203 L190 203 Q178 175 180 150 Z" fill="#4a8a44"/>
<path d="M212 145 Q230 140 238 172 Q230 195 220 203 Q208 172 212 145 Z" fill="#2a4a26"/>
<path d="M120 188 Q135 178 150 192 L145 203 L118 203 Z" fill="#3a6a34"/>
<path d="M250 120 Q270 115 270 150 L262 178 Q248 150 250 120 Z" fill="#5a4828"/>
<path d="M240 188 Q255 178 270 182 L270 203 L232 203 Z" fill="#8a7038"/>
<path d="M80 0 L86 0 L85 18 L80 15 Z" fill="#5a8a50"/>
<ellipse cx="192" cy="126" rx="6" ry="9" fill="#c87888"/>
</g>
<g filter="url(#b3T)">
<path d="M84 32 Q100 20 126 4" stroke="#5a3a50" stroke-width="2" fill="none"/>
<circle cx="101.8" cy="28.8" r="2.6" fill="#a078e0"/>
<circle cx="78.4" cy="23.9" r="1.5" fill="#8a60c8"/>
<circle cx="104.2" cy="20.8" r="1.6" fill="#704898"/>
<circle cx="114.4" cy="13.9" r="2.7" fill="#c8a0f0"/>
<circle cx="97.3" cy="24.1" r="2.2" fill="#a078e0"/>
<circle cx="84.1" cy="31.3" r="1.9" fill="#c8a0f0"/>
<circle cx="121.1" cy="15.1" r="2.0" fill="#8a60c8"/>
<circle cx="108.6" cy="17.3" r="2.1" fill="#8a60c8"/>
<circle cx="107.3" cy="11.6" r="2.0" fill="#704898"/>
<circle cx="98.1" cy="32.9" r="2.2" fill="#a078e0"/>
<circle cx="111.8" cy="11.6" r="2.3" fill="#b890f0"/>
<circle cx="84.1" cy="29.7" r="1.7" fill="#b890f0"/>
<circle cx="111.7" cy="20.1" r="2.2" fill="#c8a0f0"/>
<circle cx="117.8" cy="14.6" r="2.1" fill="#c8a0f0"/>
<circle cx="119.5" cy="10.6" r="2.1" fill="#b890f0"/>
<circle cx="119.1" cy="16.3" r="2.8" fill="#c8a0f0"/>
<circle cx="117.5" cy="13.8" r="1.5" fill="#b890f0"/>
<circle cx="104.6" cy="21.2" r="1.8" fill="#a078e0"/>
<circle cx="95.7" cy="18.9" r="1.6" fill="#704898"/>
<circle cx="93.0" cy="16.3" r="2.6" fill="#704898"/>
<circle cx="91.6" cy="26.6" r="2.7" fill="#704898"/>
<circle cx="92.0" cy="31.0" r="1.5" fill="#8a60c8"/>
<circle cx="120.6" cy="12.4" r="2.0" fill="#8a60c8"/>
<circle cx="88.2" cy="16.7" r="2.7" fill="#c8a0f0"/>
<circle cx="111.2" cy="8.1" r="2.0" fill="#c8a0f0"/>
<circle cx="106.4" cy="25.1" r="1.7" fill="#a078e0"/>
<circle cx="123.1" cy="5.3" r="1.6" fill="#c8a0f0"/>
<circle cx="85.4" cy="33.9" r="2.3" fill="#b890f0"/>
<circle cx="88.2" cy="34.7" r="2.7" fill="#b890f0"/>
<circle cx="106.9" cy="15.5" r="2.8" fill="#704898"/>
<circle cx="101.5" cy="19.2" r="2.5" fill="#a078e0"/>
<circle cx="107.5" cy="12.3" r="1.5" fill="#c8a0f0"/>
<circle cx="121.2" cy="4.9" r="2.7" fill="#c8a0f0"/>
<circle cx="113.7" cy="17.6" r="2.4" fill="#a078e0"/>
<circle cx="92.9" cy="26.9" r="2.2" fill="#8a60c8"/>
<circle cx="115.0" cy="13.3" r="2.5" fill="#8a60c8"/>
<circle cx="118.1" cy="5.5" r="2.1" fill="#c8a0f0"/>
<circle cx="123.5" cy="11.0" r="1.8" fill="#704898"/>
<circle cx="118.3" cy="11.1" r="2.7" fill="#b890f0"/>
<circle cx="100.0" cy="25.3" r="1.9" fill="#8a60c8"/>
<circle cx="111.1" cy="17.9" r="2.1" fill="#a078e0"/>
<circle cx="112.1" cy="11.7" r="2.7" fill="#a078e0"/>
<circle cx="116.9" cy="4.4" r="2.1" fill="#8a60c8"/>
<circle cx="121.0" cy="20.5" r="2.1" fill="#704898"/>
<circle cx="117.8" cy="12.7" r="1.5" fill="#8a60c8"/>
<circle cx="101.7" cy="17.0" r="2.6" fill="#c8a0f0"/>
<circle cx="122.6" cy="0.7" r="2.2" fill="#c8a0f0"/>
<circle cx="87.4" cy="23.7" r="2.2" fill="#a078e0"/>
<circle cx="113.9" cy="10.0" r="1.5" fill="#8a60c8"/>
<circle cx="84.4" cy="26.0" r="1.8" fill="#b890f0"/>
<circle cx="109.1" cy="28.3" r="2.7" fill="#b890f0"/>
<circle cx="114.2" cy="7.9" r="1.7" fill="#c8a0f0"/>
<circle cx="80.2" cy="27.1" r="2.3" fill="#8a60c8"/>
<circle cx="118.2" cy="12.5" r="2.4" fill="#c8a0f0"/>
<circle cx="104.6" cy="21.8" r="2.1" fill="#c8a0f0"/>
</g>
<g filter="url(#b3T)">
<path d="M122.1 49.9 C112.8 43.5 95.1 38.7 93.7 39.3 C90.4 40.3 88.6 47.3 91.1 49.8 C92.0 50.9 109.9 55.1 121.0 54.0 Z" fill="#c064a0" stroke="#703860" stroke-width="0.7"/>
<path d="M118.1 49.3 C111.0 45.3 97.7 42.0 96.9 42.4 C94.9 43.1 93.9 47.3 95.4 48.7 C96.0 49.4 109.4 52.3 117.5 51.8 Z" fill="#e4a4cc" opacity="0.6" filter="url(#b4T)"/>
<path d="M126.0 46.5 C122.9 37.2 112.7 25.5 111.2 25.2 C107.9 24.2 102.5 29.0 103.2 32.4 C103.3 33.9 114.0 45.2 122.9 49.3 Z" fill="#c064a0" stroke="#703860" stroke-width="0.7"/>
<path d="M122.9 43.9 C120.3 37.7 112.9 29.6 112.0 29.4 C110.0 28.8 106.9 31.8 107.3 33.9 C107.4 34.7 115.1 42.6 121.1 45.6 Z" fill="#e4a4cc" opacity="0.6" filter="url(#b4T)"/>
<path d="M130.8 45.8 C133.4 36.8 131.4 22.4 130.3 21.4 C128.1 18.7 121.0 19.8 119.7 23.1 C119.0 24.4 121.5 38.7 126.7 46.4 Z" fill="#c064a0" stroke="#703860" stroke-width="0.7"/>
<path d="M129.4 41.9 C130.8 35.9 129.4 26.0 128.7 25.4 C127.4 23.7 123.1 24.4 122.3 26.4 C121.9 27.2 123.7 37.0 126.9 42.3 Z" fill="#e4a4cc" opacity="0.6" filter="url(#b4T)"/>
<path d="M135.0 47.3 C142.0 40.6 148.0 26.7 147.7 25.2 C147.1 21.8 140.5 19.0 137.7 21.1 C136.4 21.9 130.9 36.1 131.1 45.7 Z" fill="#c064a0" stroke="#703860" stroke-width="0.7"/>
<path d="M135.6 43.3 C140.2 38.5 144.5 28.8 144.3 27.9 C144.0 25.8 140.0 24.1 138.3 25.4 C137.5 25.8 133.5 35.7 133.3 42.3 Z" fill="#e4a4cc" opacity="0.6" filter="url(#b4T)"/>
<path d="M138.1 50.9 C148.9 48.1 164.1 37.8 164.5 36.3 C165.9 33.1 161.8 27.3 158.3 27.5 C156.8 27.5 142.0 38.3 135.7 47.5 Z" fill="#c064a0" stroke="#703860" stroke-width="0.7"/>
<path d="M140.7 47.7 C148.4 45.3 159.9 37.7 160.2 36.9 C161.0 35.0 158.6 31.4 156.5 31.5 C155.6 31.5 144.4 39.3 139.3 45.6 Z" fill="#e4a4cc" opacity="0.6" filter="url(#b4T)"/>
<path d="M139.0 55.2 C151.4 57.8 172.5 55.8 173.6 54.7 C176.4 52.6 175.6 45.5 172.4 44.0 C171.2 43.2 150.1 45.8 138.6 51.0 Z" fill="#c064a0" stroke="#703860" stroke-width="0.7"/>
<path d="M142.8 53.6 C152.3 55.0 168.8 53.7 169.4 53.1 C171.1 51.9 170.7 47.6 168.8 46.7 C168.1 46.2 151.6 47.9 142.6 51.0 Z" fill="#e4a4cc" opacity="0.6" filter="url(#b4T)"/>
<path d="M138.0 59.3 C148.8 67.5 170.1 75.7 171.6 75.3 C175.0 74.7 177.5 67.9 175.3 65.2 C174.5 63.9 153.0 56.2 139.4 55.4 Z" fill="#c064a0" stroke="#703860" stroke-width="0.7"/>
<path d="M142.1 59.5 C150.7 65.4 167.6 72.2 168.4 71.9 C170.5 71.6 172.1 67.5 170.8 65.9 C170.3 65.1 153.3 58.7 143.0 57.2 Z" fill="#e4a4cc" opacity="0.6" filter="url(#b4T)"/>
<path d="M135.2 62.5 C141.2 74.4 156.6 90.7 158.1 91.0 C161.4 91.9 166.6 86.9 165.8 83.5 C165.7 82.0 149.8 66.0 138.2 59.6 Z" fill="#c064a0" stroke="#703860" stroke-width="0.7"/>
<path d="M138.7 64.6 C143.8 73.3 155.7 86.3 156.6 86.4 C158.6 87.0 161.8 84.0 161.3 82.0 C161.2 81.1 149.0 68.4 140.6 62.8 Z" fill="#e4a4cc" opacity="0.6" filter="url(#b4T)"/>
<path d="M131.4 64.1 C132.1 77.3 139.4 98.3 140.7 99.1 C143.4 101.4 150.1 98.9 150.8 95.5 C151.2 94.0 143.3 73.2 135.3 62.6 Z" fill="#c064a0" stroke="#703860" stroke-width="0.7"/>
<path d="M133.7 67.5 C134.8 77.4 140.4 93.9 141.2 94.4 C142.8 95.7 146.9 94.2 147.3 92.2 C147.6 91.3 141.5 75.0 136.1 66.6 Z" fill="#e4a4cc" opacity="0.6" filter="url(#b4T)"/>
<path d="M127.1 63.8 C122.2 76.2 120.2 98.5 121.0 99.8 C122.5 102.9 129.7 103.5 131.7 100.6 C132.7 99.5 134.2 77.1 131.3 64.1 Z" fill="#c064a0" stroke="#703860" stroke-width="0.7"/>
<path d="M127.6 67.9 C124.5 77.5 123.0 94.9 123.5 95.6 C124.4 97.5 128.7 97.9 129.9 96.1 C130.5 95.5 131.7 78.0 130.1 68.0 Z" fill="#e4a4cc" opacity="0.6" filter="url(#b4T)"/>
<path d="M123.4 61.6 C114.1 70.4 103.4 88.9 103.6 90.4 C103.7 93.9 110.0 97.4 113.0 95.7 C114.4 95.1 124.5 76.2 127.1 63.7 Z" fill="#c064a0" stroke="#703860" stroke-width="0.7"/>
<path d="M122.0 65.4 C115.5 72.5 107.4 86.9 107.5 87.8 C107.6 89.9 111.4 92.0 113.2 90.9 C114.1 90.5 121.8 75.9 124.2 66.6 Z" fill="#e4a4cc" opacity="0.6" filter="url(#b4T)"/>
<path d="M121.0 57.8 C109.4 61.1 92.7 72.3 92.3 73.8 C90.8 77.0 95.0 82.9 98.4 82.6 C99.9 82.7 116.2 71.0 123.4 61.2 Z" fill="#c064a0" stroke="#703860" stroke-width="0.7"/>
<path d="M118.0 60.5 C109.7 63.6 97.2 72.4 96.9 73.3 C96.1 75.2 98.6 78.7 100.7 78.5 C101.6 78.5 113.9 69.5 119.5 62.5 Z" fill="#e4a4cc" opacity="0.6" filter="url(#b4T)"/>
<path d="M120.9 52.6 C110.4 49.4 92.8 50.3 91.6 51.3 C88.8 53.3 89.3 60.5 92.4 62.1 C93.7 62.9 111.3 61.4 121.2 56.8 Z" fill="#c064a0" stroke="#703860" stroke-width="0.7"/>
<path d="M116.9 53.3 C109.3 51.7 96.4 52.7 95.7 53.3 C94.0 54.6 94.4 58.9 96.3 59.8 C97.1 60.2 110.0 58.8 117.1 55.8 Z" fill="#e4a4cc" opacity="0.6" filter="url(#b4T)"/>
<circle cx="130" cy="55" r="16" fill="#6a1a08"/>
<circle cx="127.8" cy="49.4" r="1.1" fill="#c84a14"/>
<circle cx="132.2" cy="65.0" r="1.2" fill="#c84a14"/>
<circle cx="116.8" cy="54.0" r="1.0" fill="#c84a14"/>
<circle cx="137.2" cy="55.1" r="0.9" fill="#c84a14"/>
<circle cx="140.2" cy="59.7" r="1.2" fill="#c84a14"/>
<circle cx="130.8" cy="62.1" r="0.7" fill="#c84a14"/>
<circle cx="129.0" cy="40.3" r="1.2" fill="#c84a14"/>
<circle cx="141.3" cy="57.5" r="0.9" fill="#c84a14"/>
<circle cx="137.8" cy="61.9" r="1.3" fill="#c84a14"/>
<circle cx="135.0" cy="62.4" r="1.2" fill="#c84a14"/>
<circle cx="134.7" cy="52.7" r="1.0" fill="#c84a14"/>
<circle cx="124.0" cy="64.1" r="1.0" fill="#c84a14"/>
<circle cx="136.2" cy="56.5" r="1.2" fill="#c84a14"/>
<circle cx="131.3" cy="48.0" r="0.8" fill="#c84a14"/>
<circle cx="141.4" cy="46.0" r="1.2" fill="#c84a14"/>
<circle cx="118.8" cy="48.8" r="1.1" fill="#c84a14"/>
<circle cx="124.9" cy="55.8" r="1.2" fill="#c84a14"/>
<circle cx="135.8" cy="51.9" r="1.2" fill="#c84a14"/>
<circle cx="123.8" cy="62.1" r="1.0" fill="#c84a14"/>
<circle cx="139.1" cy="54.7" r="0.9" fill="#c84a14"/>
<circle cx="132.0" cy="56.3" r="1.1" fill="#c84a14"/>
<circle cx="115.3" cy="55.4" r="1.0" fill="#c84a14"/>
<circle cx="129.9" cy="44.1" r="0.8" fill="#c84a14"/>
<circle cx="119.2" cy="51.0" r="1.1" fill="#c84a14"/>
<circle cx="133.0" cy="60.5" r="0.9" fill="#c84a14"/>
<circle cx="121.9" cy="66.6" r="1.1" fill="#c84a14"/>
<circle cx="136.5" cy="59.9" r="0.7" fill="#c84a14"/>
<circle cx="132.2" cy="41.9" r="0.9" fill="#c84a14"/>
<circle cx="124.5" cy="44.1" r="1.2" fill="#c84a14"/>
<circle cx="118.0" cy="62.9" r="1.3" fill="#c84a14"/>
<circle cx="117.8" cy="47.2" r="1.2" fill="#c84a14"/>
<circle cx="122.7" cy="62.3" r="0.8" fill="#c84a14"/>
<circle cx="137.2" cy="66.7" r="0.7" fill="#c84a14"/>
<circle cx="132.0" cy="41.9" r="1.0" fill="#c84a14"/>
<circle cx="142.7" cy="59.3" r="0.9" fill="#c84a14"/>
<circle cx="123.1" cy="58.8" r="0.8" fill="#c84a14"/>
<circle cx="128.0" cy="58.3" r="1.2" fill="#c84a14"/>
<circle cx="129.6" cy="40.4" r="1.0" fill="#c84a14"/>
<circle cx="137.1" cy="53.1" r="1.0" fill="#c84a14"/>
<circle cx="142.4" cy="57.2" r="0.8" fill="#c84a14"/>
<circle cx="133.8" cy="42.1" r="1.2" fill="#c84a14"/>
<circle cx="119.8" cy="60.1" r="1.0" fill="#c84a14"/>
<circle cx="125.2" cy="67.7" r="1.0" fill="#c84a14"/>
<circle cx="130.9" cy="47.3" r="0.7" fill="#c84a14"/>
<circle cx="141.7" cy="51.5" r="0.7" fill="#c84a14"/>
<circle cx="123.0" cy="46.1" r="1.2" fill="#c84a14"/>
<circle cx="129.5" cy="66.2" r="0.9" fill="#c84a14"/>
<circle cx="142.0" cy="46.9" r="0.8" fill="#c84a14"/>
<circle cx="133.8" cy="57.5" r="0.7" fill="#c84a14"/>
<circle cx="136.2" cy="62.6" r="1.2" fill="#c84a14"/>
<circle cx="138.3" cy="63.5" r="1.0" fill="#c84a14"/>
<circle cx="121.6" cy="55.3" r="0.8" fill="#c84a14"/>
<circle cx="132.4" cy="60.5" r="0.9" fill="#c84a14"/>
<circle cx="118.2" cy="51.2" r="0.7" fill="#c84a14"/>
<circle cx="138.7" cy="46.2" r="1.2" fill="#c84a14"/>
<circle cx="143.1" cy="55.6" r="1.0" fill="#c84a14"/>
<circle cx="130.3" cy="51.3" r="0.8" fill="#c84a14"/>
<circle cx="129.8" cy="67.4" r="1.1" fill="#c84a14"/>
<circle cx="138.0" cy="57.1" r="0.9" fill="#c84a14"/>
<circle cx="136.6" cy="50.2" r="0.9" fill="#c84a14"/>
<circle cx="120.1" cy="51.8" r="1.3" fill="#c84a14"/>
<circle cx="126.3" cy="52.3" r="1.0" fill="#c84a14"/>
<circle cx="142.3" cy="52.4" r="0.9" fill="#c84a14"/>
<circle cx="117.9" cy="53.0" r="1.0" fill="#c84a14"/>
<circle cx="131.5" cy="51.6" r="1.3" fill="#c84a14"/>
<circle cx="126.4" cy="63.0" r="1.3" fill="#c84a14"/>
<circle cx="134.3" cy="57.2" r="0.7" fill="#c84a14"/>
<circle cx="130.8" cy="41.7" r="1.0" fill="#c84a14"/>
<circle cx="141.5" cy="56.4" r="1.1" fill="#c84a14"/>
<circle cx="120.3" cy="53.9" r="0.9" fill="#c84a14"/>
<circle cx="131.4" cy="64.2" r="0.7" fill="#c84a14"/>
<circle cx="130.2" cy="64.7" r="1.1" fill="#c84a14"/>
<circle cx="127.8" cy="41.9" r="1.0" fill="#c84a14"/>
<circle cx="124.6" cy="59.7" r="1.0" fill="#c84a14"/>
<circle cx="141.4" cy="52.3" r="0.8" fill="#c84a14"/>
<circle cx="119.8" cy="55.5" r="1.1" fill="#c84a14"/>
<circle cx="132.6" cy="41.3" r="1.1" fill="#c84a14"/>
<circle cx="123.7" cy="43.8" r="1.2" fill="#c84a14"/>
<circle cx="125.0" cy="43.8" r="0.8" fill="#c84a14"/>
<circle cx="119.4" cy="64.3" r="1.1" fill="#c84a14"/>
<circle cx="143.0" cy="52.0" r="1.3" fill="#c84a14"/>
<circle cx="129.5" cy="56.1" r="0.9" fill="#c84a14"/>
<circle cx="135.6" cy="62.3" r="1.0" fill="#c84a14"/>
<circle cx="128.7" cy="58.9" r="1.3" fill="#c84a14"/>
<circle cx="117.7" cy="58.0" r="0.8" fill="#c84a14"/>
<circle cx="125.9" cy="41.2" r="0.8" fill="#c84a14"/>
<circle cx="124.6" cy="48.4" r="1.1" fill="#c84a14"/>
<circle cx="137.2" cy="52.7" r="0.9" fill="#c84a14"/>
<circle cx="134.2" cy="48.9" r="0.8" fill="#c84a14"/>
<circle cx="133.8" cy="66.6" r="1.1" fill="#c84a14"/>
<circle cx="124.4" cy="60.3" r="1.3" fill="#c84a14"/>
<circle cx="120.7" cy="58.9" r="1.1" fill="#c84a14"/>
<circle cx="133.6" cy="61.9" r="0.9" fill="#c84a14"/>
<circle cx="132.9" cy="62.1" r="1.3" fill="#c84a14"/>
<circle cx="131.0" cy="52.5" r="1.3" fill="#c84a14"/>
<circle cx="142.3" cy="56.5" r="1.0" fill="#c84a14"/>
<circle cx="127.7" cy="53.2" r="1.1" fill="#c84a14"/>
<circle cx="137.2" cy="55.3" r="1.0" fill="#c84a14"/>
<circle cx="128.4" cy="59.2" r="1.0" fill="#c84a14"/>
<circle cx="120.5" cy="65.1" r="0.8" fill="#c84a14"/>
<circle cx="135.7" cy="43.2" r="1.0" fill="#c84a14"/>
<circle cx="131.2" cy="58.0" r="0.9" fill="#c84a14"/>
<circle cx="131.7" cy="65.8" r="1.2" fill="#c84a14"/>
<circle cx="142.1" cy="48.9" r="1.2" fill="#c84a14"/>
<circle cx="128.3" cy="54.0" r="0.7" fill="#c84a14"/>
<circle cx="129.7" cy="41.0" r="1.2" fill="#c84a14"/>
<circle cx="135.9" cy="57.3" r="1.2" fill="#c84a14"/>
<circle cx="121.7" cy="47.1" r="1.0" fill="#c84a14"/>
<circle cx="123.1" cy="66.2" r="0.9" fill="#c84a14"/>
<circle cx="127.4" cy="63.4" r="1.1" fill="#c84a14"/>
<circle cx="142.5" cy="61.0" r="0.7" fill="#c84a14"/>
<circle cx="125.4" cy="45.5" r="0.8" fill="#c84a14"/>
<circle cx="137.1" cy="57.8" r="0.7" fill="#c84a14"/>
<circle cx="125.6" cy="45.6" r="1.1" fill="#c84a14"/>
<circle cx="134.6" cy="58.6" r="1.3" fill="#c84a14"/>
<circle cx="120.9" cy="60.9" r="1.1" fill="#c84a14"/>
<circle cx="117.6" cy="53.1" r="0.7" fill="#c84a14"/>
<circle cx="133.0" cy="68.0" r="0.7" fill="#c84a14"/>
<circle cx="121.4" cy="53.2" r="1.1" fill="#c84a14"/>
<circle cx="128.5" cy="49.1" r="1.0" fill="#c84a14"/>
<circle cx="133.5" cy="50.2" r="1.2" fill="#c84a14"/>
<circle cx="124.0" cy="42.3" r="0.8" fill="#c84a14"/>
<circle cx="140.6" cy="47.6" r="1.0" fill="#c84a14"/>
<circle cx="143.8" cy="52.4" r="0.9" fill="#c84a14"/>
<circle cx="143.2" cy="49.5" r="1.2" fill="#c84a14"/>
<circle cx="129.1" cy="56.3" r="1.1" fill="#c84a14"/>
<circle cx="130.4" cy="43.5" r="1.1" fill="#c84a14"/>
<circle cx="135.4" cy="52.5" r="1.0" fill="#c84a14"/>
<circle cx="133.7" cy="68.3" r="1.3" fill="#c84a14"/>
<circle cx="131.8" cy="44.2" r="1.1" fill="#c84a14"/>
<circle cx="121.0" cy="65.5" r="0.7" fill="#c84a14"/>
<circle cx="134.1" cy="63.4" r="1.0" fill="#c84a14"/>
<circle cx="121.4" cy="65.1" r="0.8" fill="#c84a14"/>
<circle cx="127.9" cy="56.1" r="1.0" fill="#c84a14"/>
<circle cx="128.8" cy="52.9" r="0.8" fill="#c84a14"/>
<circle cx="134.3" cy="52.9" r="1.0" fill="#c84a14"/>
<circle cx="116.1" cy="53.8" r="0.8" fill="#c84a14"/>
<circle cx="123.6" cy="58.3" r="1.1" fill="#c84a14"/>
<circle cx="130.1" cy="42.1" r="1.1" fill="#c84a14"/>
<circle cx="123.3" cy="58.1" r="0.9" fill="#c84a14"/>
<circle cx="129.0" cy="65.3" r="1.0" fill="#c84a14"/>
<circle cx="139.7" cy="57.2" r="1.2" fill="#c84a14"/>
<circle cx="133.7" cy="44.3" r="1.1" fill="#c84a14"/>
<circle cx="142.6" cy="54.5" r="0.9" fill="#c84a14"/>
<circle cx="139.2" cy="55.2" r="1.1" fill="#c84a14"/>
<circle cx="120.0" cy="49.8" r="1.3" fill="#c84a14"/>
<circle cx="130.9" cy="61.5" r="1.1" fill="#c84a14"/>
<circle cx="116.8" cy="56.4" r="0.7" fill="#c84a14"/>
<circle cx="134.1" cy="47.1" r="1.0" fill="#c84a14"/>
<circle cx="122.3" cy="61.4" r="1.1" fill="#c84a14"/>
<circle cx="126.0" cy="44.3" r="1.2" fill="#c84a14"/>
<circle cx="121.0" cy="64.0" r="0.9" fill="#c84a14"/>
<circle cx="133.5" cy="42.5" r="1.3" fill="#c84a14"/>
<circle cx="133.8" cy="49.6" r="1.2" fill="#c84a14"/>
<circle cx="128.5" cy="58.8" r="1.1" fill="#c84a14"/>
<circle cx="132.7" cy="50.1" r="0.9" fill="#c84a14"/>
<circle cx="126.5" cy="66.7" r="0.8" fill="#c84a14"/>
<circle cx="123.3" cy="55.1" r="1.1" fill="#c84a14"/>
<circle cx="127.3" cy="48.7" r="0.9" fill="#c84a14"/>
<circle cx="122.0" cy="63.7" r="0.8" fill="#c84a14"/>
<path d="M231.1 100.9 C217.9 96.5 194.6 95.9 193.3 96.9 C190.0 98.8 189.9 106.6 193.1 108.6 C194.4 109.6 217.7 109.5 231.0 105.5 Z" fill="#b0509c" stroke="#602458" stroke-width="0.7"/>
<path d="M227.1 101.5 C216.6 99.0 197.9 98.7 197.2 99.3 C195.2 100.5 195.2 105.2 197.2 106.3 C197.9 106.9 216.6 106.8 227.0 104.2 Z" fill="#d48cc4" opacity="0.6" filter="url(#b4T)"/>
<path d="M233.8 96.9 C226.5 87.5 210.2 77.3 208.6 77.4 C204.8 77.4 200.8 84.1 202.6 87.4 C203.2 88.9 219.8 98.7 231.4 100.8 Z" fill="#b0509c" stroke="#602458" stroke-width="0.7"/>
<path d="M230.0 95.4 C224.2 89.0 211.6 81.4 210.7 81.5 C208.4 81.5 206.0 85.5 207.1 87.5 C207.5 88.4 220.2 95.7 228.7 97.7 Z" fill="#d48cc4" opacity="0.6" filter="url(#b4T)"/>
<path d="M238.7 94.7 C238.8 84.4 232.5 69.5 231.1 68.7 C228.0 66.5 220.9 69.6 220.4 73.4 C220.0 75.0 226.9 89.7 234.5 96.6 Z" fill="#b0509c" stroke="#602458" stroke-width="0.7"/>
<path d="M236.4 91.4 C235.9 84.2 231.3 73.5 230.5 73.1 C228.6 71.8 224.3 73.7 224.1 76.0 C223.9 76.9 228.8 87.5 233.9 92.5 Z" fill="#d48cc4" opacity="0.6" filter="url(#b4T)"/>
<path d="M243.5 95.4 C249.0 87.5 251.6 72.8 250.8 71.4 C249.4 67.9 241.6 66.7 239.2 69.6 C238.1 70.8 236.1 85.5 239.0 94.7 Z" fill="#b0509c" stroke="#602458" stroke-width="0.7"/>
<path d="M243.2 91.3 C246.6 85.8 248.4 75.6 247.9 74.8 C247.1 72.7 242.4 71.9 241.0 73.7 C240.3 74.4 238.9 84.6 240.5 90.9 Z" fill="#d48cc4" opacity="0.6" filter="url(#b4T)"/>
<path d="M247.4 98.7 C257.1 94.6 268.5 82.8 268.7 81.2 C269.5 77.5 263.8 72.1 260.2 73.2 C258.6 73.5 247.6 85.7 244.1 95.6 Z" fill="#b0509c" stroke="#602458" stroke-width="0.7"/>
<path d="M249.3 95.0 C255.9 91.8 264.3 83.4 264.4 82.4 C264.9 80.2 261.5 77.0 259.3 77.6 C258.4 77.7 250.3 86.4 247.4 93.1 Z" fill="#d48cc4" opacity="0.6" filter="url(#b4T)"/>
<path d="M249.1 103.4 C261.1 104.8 280.3 100.5 281.3 99.2 C284.0 96.6 282.2 89.0 278.6 87.9 C277.1 87.2 258.0 92.2 248.0 99.0 Z" fill="#b0509c" stroke="#602458" stroke-width="0.7"/>
<path d="M252.7 101.3 C261.6 101.9 276.3 98.7 276.9 98.0 C278.6 96.4 277.5 91.8 275.4 91.1 C274.5 90.7 259.8 94.3 252.1 98.7 Z" fill="#d48cc4" opacity="0.6" filter="url(#b4T)"/>
<path d="M248.0 108.5 C258.7 116.7 280.0 124.4 281.6 123.9 C285.3 123.1 287.8 115.7 285.4 112.8 C284.5 111.5 263.0 104.4 249.4 104.2 Z" fill="#b0509c" stroke="#602458" stroke-width="0.7"/>
<path d="M252.1 108.6 C260.7 114.4 277.5 120.7 278.4 120.4 C280.6 119.9 282.2 115.5 280.8 113.8 C280.3 113.0 263.3 107.1 253.0 106.1 Z" fill="#d48cc4" opacity="0.6" filter="url(#b4T)"/>
<path d="M244.7 111.9 C250.9 125.1 267.3 143.7 268.9 144.0 C272.5 145.1 278.3 139.8 277.6 136.1 C277.4 134.5 260.6 116.4 248.1 108.8 Z" fill="#b0509c" stroke="#602458" stroke-width="0.7"/>
<path d="M248.2 114.1 C253.7 124.1 266.8 139.1 267.8 139.3 C270.0 140.0 273.4 136.9 273.0 134.6 C272.9 133.7 259.5 118.9 250.2 112.3 Z" fill="#d48cc4" opacity="0.6" filter="url(#b4T)"/>
<path d="M240.1 113.2 C239.7 129.2 246.0 155.7 247.3 156.7 C249.9 159.4 257.5 157.5 258.6 153.9 C259.2 152.4 252.4 126.0 244.5 112.1 Z" fill="#b0509c" stroke="#602458" stroke-width="0.7"/>
<path d="M242.0 116.9 C242.6 129.6 247.7 151.4 248.5 152.0 C250.1 153.6 254.6 152.5 255.3 150.4 C255.7 149.5 250.1 127.7 244.7 116.2 Z" fill="#d48cc4" opacity="0.6" filter="url(#b4T)"/>
<path d="M235.9 112.4 C228.7 127.0 223.0 154.3 223.7 155.8 C224.9 159.4 232.6 160.9 235.1 158.1 C236.3 157.0 241.4 129.5 240.4 113.2 Z" fill="#b0509c" stroke="#602458" stroke-width="0.7"/>
<path d="M236.0 116.5 C231.0 128.6 226.4 151.2 226.8 152.1 C227.6 154.3 232.1 155.2 233.7 153.5 C234.4 152.8 238.7 130.1 238.6 117.0 Z" fill="#d48cc4" opacity="0.6" filter="url(#b4T)"/>
<path d="M232.4 109.5 C220.3 118.4 204.5 138.5 204.5 140.1 C204.1 143.9 210.3 148.6 213.8 147.2 C215.4 146.8 230.6 126.3 236.0 112.3 Z" fill="#b0509c" stroke="#602458" stroke-width="0.7"/>
<path d="M230.6 113.1 C221.6 120.8 208.9 137.3 208.9 138.2 C208.7 140.5 212.4 143.3 214.5 142.5 C215.5 142.2 227.8 125.5 232.7 114.8 Z" fill="#d48cc4" opacity="0.6" filter="url(#b4T)"/>
<path d="M230.7 105.8 C216.7 108.7 195.3 120.1 194.6 121.6 C192.7 124.8 196.4 131.7 200.2 131.8 C201.8 132.0 222.9 120.1 232.9 109.8 Z" fill="#b0509c" stroke="#602458" stroke-width="0.7"/>
<path d="M227.5 108.3 C216.8 111.4 199.7 120.8 199.3 121.7 C198.2 123.7 200.5 127.7 202.7 127.8 C203.7 127.9 220.6 118.2 228.9 110.7 Z" fill="#d48cc4" opacity="0.6" filter="url(#b4T)"/>
<circle cx="240" cy="104" r="15" fill="#5a1010"/>
<circle cx="252.6" cy="99.8" r="1.2" fill="#9a2818"/>
<circle cx="236.7" cy="101.8" r="1.0" fill="#9a2818"/>
<circle cx="246.9" cy="111.3" r="0.8" fill="#9a2818"/>
<circle cx="241.7" cy="113.0" r="1.0" fill="#9a2818"/>
<circle cx="241.9" cy="105.1" r="1.1" fill="#9a2818"/>
<circle cx="231.1" cy="103.3" r="1.1" fill="#9a2818"/>
<circle cx="247.7" cy="106.9" r="1.2" fill="#9a2818"/>
<circle cx="234.2" cy="95.1" r="1.1" fill="#9a2818"/>
<circle cx="231.2" cy="114.3" r="1.2" fill="#9a2818"/>
<circle cx="232.5" cy="100.3" r="1.1" fill="#9a2818"/>
<circle cx="246.6" cy="108.0" r="1.0" fill="#9a2818"/>
<circle cx="230.2" cy="97.7" r="1.0" fill="#9a2818"/>
<circle cx="244.6" cy="114.1" r="0.8" fill="#9a2818"/>
<circle cx="243.2" cy="96.8" r="0.8" fill="#9a2818"/>
<circle cx="243.8" cy="106.7" r="0.7" fill="#9a2818"/>
<circle cx="233.5" cy="100.8" r="1.2" fill="#9a2818"/>
<circle cx="234.6" cy="109.8" r="0.9" fill="#9a2818"/>
<circle cx="241.3" cy="96.5" r="1.0" fill="#9a2818"/>
<circle cx="245.5" cy="108.4" r="1.2" fill="#9a2818"/>
<circle cx="245.5" cy="93.8" r="0.8" fill="#9a2818"/>
<circle cx="248.9" cy="99.0" r="1.1" fill="#9a2818"/>
<circle cx="246.7" cy="115.6" r="1.3" fill="#9a2818"/>
<circle cx="237.2" cy="105.6" r="0.7" fill="#9a2818"/>
<circle cx="235.2" cy="92.5" r="1.3" fill="#9a2818"/>
<circle cx="251.7" cy="100.1" r="1.0" fill="#9a2818"/>
<circle cx="239.9" cy="90.3" r="0.9" fill="#9a2818"/>
<circle cx="230.2" cy="113.5" r="0.8" fill="#9a2818"/>
<circle cx="236.3" cy="104.8" r="0.8" fill="#9a2818"/>
<circle cx="252.7" cy="99.9" r="0.8" fill="#9a2818"/>
<circle cx="235.6" cy="103.2" r="0.8" fill="#9a2818"/>
<circle cx="243.9" cy="94.6" r="0.9" fill="#9a2818"/>
<circle cx="247.3" cy="98.8" r="1.0" fill="#9a2818"/>
<circle cx="246.3" cy="98.9" r="1.2" fill="#9a2818"/>
<circle cx="235.0" cy="91.9" r="0.9" fill="#9a2818"/>
<circle cx="245.5" cy="93.9" r="1.1" fill="#9a2818"/>
<circle cx="238.1" cy="110.5" r="0.9" fill="#9a2818"/>
<circle cx="228.6" cy="99.7" r="1.0" fill="#9a2818"/>
<circle cx="249.7" cy="111.9" r="1.1" fill="#9a2818"/>
<circle cx="232.6" cy="101.1" r="1.2" fill="#9a2818"/>
<circle cx="246.6" cy="101.9" r="0.7" fill="#9a2818"/>
<circle cx="230.0" cy="101.3" r="0.8" fill="#9a2818"/>
<circle cx="229.8" cy="105.9" r="1.0" fill="#9a2818"/>
<circle cx="251.7" cy="104.3" r="0.9" fill="#9a2818"/>
<circle cx="247.7" cy="113.5" r="1.2" fill="#9a2818"/>
<circle cx="237.4" cy="98.3" r="0.8" fill="#9a2818"/>
<circle cx="231.8" cy="108.3" r="0.7" fill="#9a2818"/>
<circle cx="228.5" cy="105.4" r="1.1" fill="#9a2818"/>
<circle cx="230.5" cy="100.5" r="1.0" fill="#9a2818"/>
<circle cx="246.1" cy="99.5" r="0.8" fill="#9a2818"/>
<circle cx="248.4" cy="94.2" r="1.0" fill="#9a2818"/>
<circle cx="234.4" cy="93.2" r="1.1" fill="#9a2818"/>
<circle cx="236.8" cy="110.8" r="0.9" fill="#9a2818"/>
<circle cx="247.3" cy="102.1" r="0.9" fill="#9a2818"/>
<circle cx="232.5" cy="108.2" r="1.2" fill="#9a2818"/>
<circle cx="231.0" cy="100.8" r="0.9" fill="#9a2818"/>
<circle cx="246.2" cy="107.9" r="0.8" fill="#9a2818"/>
<circle cx="244.2" cy="98.3" r="1.0" fill="#9a2818"/>
<circle cx="235.5" cy="105.1" r="0.8" fill="#9a2818"/>
<circle cx="230.3" cy="107.7" r="1.2" fill="#9a2818"/>
<circle cx="244.2" cy="98.3" r="0.8" fill="#9a2818"/>
<circle cx="230.9" cy="93.8" r="0.7" fill="#9a2818"/>
<circle cx="238.0" cy="116.2" r="0.9" fill="#9a2818"/>
<circle cx="242.8" cy="99.5" r="0.8" fill="#9a2818"/>
<circle cx="230.6" cy="111.2" r="1.1" fill="#9a2818"/>
<circle cx="246.6" cy="107.5" r="1.2" fill="#9a2818"/>
<circle cx="245.4" cy="113.8" r="1.3" fill="#9a2818"/>
<circle cx="245.4" cy="116.0" r="0.7" fill="#9a2818"/>
<circle cx="246.9" cy="112.3" r="1.1" fill="#9a2818"/>
<circle cx="237.6" cy="94.9" r="1.0" fill="#9a2818"/>
<circle cx="245.3" cy="93.1" r="1.1" fill="#9a2818"/>
<circle cx="235.1" cy="113.4" r="0.8" fill="#9a2818"/>
<circle cx="242.6" cy="100.7" r="0.8" fill="#9a2818"/>
<circle cx="236.3" cy="112.2" r="1.1" fill="#9a2818"/>
<circle cx="246.4" cy="96.2" r="1.0" fill="#9a2818"/>
<circle cx="235.2" cy="97.2" r="1.1" fill="#9a2818"/>
<circle cx="235.0" cy="116.3" r="1.2" fill="#9a2818"/>
<circle cx="253.6" cy="102.5" r="0.8" fill="#9a2818"/>
<circle cx="241.3" cy="95.6" r="1.2" fill="#9a2818"/>
<circle cx="237.8" cy="105.7" r="1.1" fill="#9a2818"/>
<circle cx="228.3" cy="101.4" r="0.8" fill="#9a2818"/>
<circle cx="248.2" cy="107.2" r="0.9" fill="#9a2818"/>
<circle cx="244.0" cy="95.9" r="1.1" fill="#9a2818"/>
<circle cx="240.2" cy="112.9" r="0.9" fill="#9a2818"/>
<circle cx="229.4" cy="107.8" r="0.8" fill="#9a2818"/>
<circle cx="228.9" cy="98.3" r="1.3" fill="#9a2818"/>
<circle cx="232.8" cy="96.9" r="1.0" fill="#9a2818"/>
<circle cx="249.4" cy="98.7" r="1.3" fill="#9a2818"/>
<circle cx="229.8" cy="108.8" r="0.7" fill="#9a2818"/>
<circle cx="230.2" cy="112.0" r="0.9" fill="#9a2818"/>
<circle cx="243.2" cy="104.7" r="0.9" fill="#9a2818"/>
<path d="M74.4 113.7 C73.4 108.3 68.5 104.7 67.0 104.7 C63.5 104.6 59.5 110.5 61.0 113.7 C61.5 115.1 66.6 118.2 72.0 117.2 Z" fill="#d4bccb" stroke="#7a5a6a" stroke-width="0.8"/>
<path d="M70.6 111.7 C70.5 109.1 69.2 108.4 68.3 108.6 C66.2 108.9 64.6 112.9 65.8 114.6 C66.3 115.4 67.7 115.7 69.7 114.0 Z" fill="#f4eaf0" opacity="0.6" filter="url(#b4T)"/>
<path d="M71.5 117.5 L63.9 112.4" stroke="#9a6888" stroke-width="0.8" opacity="0.6"/>
<path d="M74.9 113.4 L67.2 108.4" stroke="#9a6888" stroke-width="0.8" opacity="0.6"/>
<path d="M82.7 109.2 C84.0 100.2 79.1 88.3 77.4 87.4 C73.8 84.9 65.6 88.6 65.1 92.9 C64.7 94.7 70.3 106.3 77.9 111.4 Z" fill="#d4bccb" stroke="#7a5a6a" stroke-width="0.8"/>
<path d="M80.2 105.9 C80.7 100.2 77.4 92.5 76.4 92.0 C74.3 90.5 69.4 92.8 69.1 95.4 C68.9 96.5 72.6 104.0 77.3 107.3 Z" fill="#f4eaf0" opacity="0.6" filter="url(#b4T)"/>
<path d="M77.2 111.5 L69.0 93.1" stroke="#9a6888" stroke-width="0.8" opacity="0.6"/>
<path d="M83.3 109.1 L75.1 90.7" stroke="#9a6888" stroke-width="0.8" opacity="0.6"/>
<path d="M90.4 109.1 C96.0 99.0 97.1 81.4 95.9 79.8 C93.7 75.7 84.1 75.4 81.6 79.3 C80.3 80.8 80.0 98.4 84.8 108.9 Z" fill="#d4bccb" stroke="#7a5a6a" stroke-width="0.8"/>
<path d="M89.4 105.1 C92.9 97.6 93.6 84.5 92.9 83.5 C91.6 81.0 85.8 80.8 84.3 83.2 C83.5 84.1 83.3 97.2 86.1 104.9 Z" fill="#f4eaf0" opacity="0.6" filter="url(#b4T)"/>
<path d="M84.1 108.9 L85.2 81.3" stroke="#9a6888" stroke-width="0.8" opacity="0.6"/>
<path d="M91.1 109.1 L92.2 81.6" stroke="#9a6888" stroke-width="0.8" opacity="0.6"/>
<path d="M97.5 112.2 C107.9 104.4 117.8 86.9 117.4 84.8 C117.2 79.8 108.2 75.0 103.9 77.6 C102.0 78.5 92.9 96.4 92.3 109.4 Z" fill="#d4bccb" stroke="#7a5a6a" stroke-width="0.8"/>
<path d="M98.2 108.1 C105.4 101.7 113.1 88.0 113.0 86.7 C112.8 83.8 107.4 80.9 104.9 82.4 C103.7 82.9 96.5 96.9 95.1 106.4 Z" fill="#f4eaf0" opacity="0.6" filter="url(#b4T)"/>
<path d="M91.5 109.2 L106.4 81.2" stroke="#9a6888" stroke-width="0.8" opacity="0.6"/>
<path d="M98.3 112.5 L113.2 84.5" stroke="#9a6888" stroke-width="0.8" opacity="0.6"/>
<path d="M102.6 117.8 C116.0 114.7 133.9 102.0 134.5 99.9 C136.4 95.4 130.3 87.2 125.3 87.7 C123.2 87.7 105.9 101.0 99.0 113.0 Z" fill="#d4bccb" stroke="#7a5a6a" stroke-width="0.8"/>
<path d="M104.9 114.3 C114.9 111.1 129.2 101.1 129.5 99.9 C130.7 97.2 127.1 92.2 124.1 92.5 C122.9 92.4 108.9 102.9 102.8 111.4 Z" fill="#f4eaf0" opacity="0.6" filter="url(#b4T)"/>
<path d="M98.4 112.6 L126.0 92.1" stroke="#9a6888" stroke-width="0.8" opacity="0.6"/>
<path d="M103.2 118.3 L130.8 97.9" stroke="#9a6888" stroke-width="0.8" opacity="0.6"/>
<path d="M104.9 124.9 C119.5 127.5 142.9 123.0 144.3 121.4 C148.0 118.0 145.9 108.0 141.2 106.4 C139.2 105.5 116.0 110.9 103.7 119.1 Z" fill="#d4bccb" stroke="#7a5a6a" stroke-width="0.8"/>
<path d="M108.5 122.7 C119.9 123.8 139.0 120.3 139.8 119.3 C142.0 117.3 140.8 111.3 138.0 110.3 C136.9 109.8 117.9 113.8 107.8 119.2 Z" fill="#f4eaf0" opacity="0.6" filter="url(#b4T)"/>
<path d="M103.3 118.4 L139.8 110.8" stroke="#9a6888" stroke-width="0.8" opacity="0.6"/>
<path d="M105.3 125.6 L141.9 118.0" stroke="#9a6888" stroke-width="0.8" opacity="0.6"/>
<path d="M104.2 132.4 C116.9 140.8 140.9 146.3 142.8 145.5 C147.5 143.8 149.7 133.9 146.0 130.5 C144.6 128.9 120.5 124.2 105.4 126.6 Z" fill="#d4bccb" stroke="#7a5a6a" stroke-width="0.8"/>
<path d="M108.4 131.8 C118.8 137.5 138.3 142.2 139.5 141.7 C142.3 140.8 143.6 134.8 141.5 132.7 C140.7 131.8 121.0 127.6 109.2 128.3 Z" fill="#f4eaf0" opacity="0.6" filter="url(#b4T)"/>
<path d="M105.3 125.8 L143.0 133.9" stroke="#9a6888" stroke-width="0.8" opacity="0.6"/>
<path d="M104.3 133.2 L141.9 141.3" stroke="#9a6888" stroke-width="0.8" opacity="0.6"/>
<path d="M100.5 139.0 C108.9 151.7 128.8 166.3 130.9 166.3 C135.8 166.7 141.8 158.4 139.8 153.8 C139.1 151.8 118.8 137.8 104.0 134.1 Z" fill="#d4bccb" stroke="#7a5a6a" stroke-width="0.8"/>
<path d="M104.6 140.1 C111.9 149.5 128.0 161.5 129.3 161.5 C132.2 161.7 135.8 156.8 134.6 154.0 C134.3 152.8 117.9 141.2 106.7 137.2 Z" fill="#f4eaf0" opacity="0.6" filter="url(#b4T)"/>
<path d="M104.2 133.4 L135.6 155.7" stroke="#9a6888" stroke-width="0.8" opacity="0.6"/>
<path d="M100.3 139.7 L131.7 162.1" stroke="#9a6888" stroke-width="0.8" opacity="0.6"/>
<path d="M94.7 143.4 C97.7 158.1 110.3 179.3 112.2 180.0 C116.3 182.2 124.5 177.1 124.4 172.4 C124.6 170.4 111.3 149.7 99.4 140.4 Z" fill="#d4bccb" stroke="#7a5a6a" stroke-width="0.8"/>
<path d="M97.9 146.1 C101.1 157.4 111.3 174.5 112.4 175.0 C114.9 176.3 119.8 173.3 119.8 170.5 C119.9 169.3 109.3 152.4 100.7 144.4 Z" fill="#f4eaf0" opacity="0.6" filter="url(#b4T)"/>
<path d="M100.0 140.0 L120.1 172.5" stroke="#9a6888" stroke-width="0.8" opacity="0.6"/>
<path d="M94.1 143.9 L114.3 176.4" stroke="#9a6888" stroke-width="0.8" opacity="0.6"/>
<path d="M87.4 145.2 C84.6 160.5 88.3 185.8 89.8 187.2 C92.8 190.7 102.3 189.2 104.0 184.8 C104.9 183.0 100.4 157.9 92.9 144.3 Z" fill="#d4bccb" stroke="#7a5a6a" stroke-width="0.8"/>
<path d="M89.2 148.9 C88.0 161.0 91.1 181.7 91.9 182.5 C93.7 184.7 99.4 183.8 100.5 181.2 C101.0 180.1 97.4 159.5 92.5 148.4 Z" fill="#f4eaf0" opacity="0.6" filter="url(#b4T)"/>
<path d="M93.6 144.1 L100.0 183.3" stroke="#9a6888" stroke-width="0.8" opacity="0.6"/>
<path d="M86.7 145.3 L93.1 184.5" stroke="#9a6888" stroke-width="0.8" opacity="0.6"/>
<path d="M80.1 143.9 C72.1 156.7 66.1 180.9 66.9 182.6 C68.2 186.8 77.0 188.8 80.0 185.7 C81.5 184.5 86.7 160.0 85.2 145.1 Z" fill="#d4bccb" stroke="#7a5a6a" stroke-width="0.8"/>
<path d="M80.1 148.0 C74.8 158.4 70.0 178.1 70.5 179.2 C71.3 181.6 76.5 182.9 78.4 181.0 C79.2 180.2 83.5 160.4 83.2 148.7 Z" fill="#f4eaf0" opacity="0.6" filter="url(#b4T)"/>
<path d="M85.8 145.3 L77.1 182.9" stroke="#9a6888" stroke-width="0.8" opacity="0.6"/>
<path d="M79.4 143.7 L70.7 181.3" stroke="#9a6888" stroke-width="0.8" opacity="0.6"/>
<path d="M74.1 139.9 C62.9 148.3 49.0 167.2 49.0 168.9 C48.7 172.6 55.0 177.2 58.5 175.6 C60.1 175.2 73.5 155.8 77.8 142.5 Z" fill="#d4bccb" stroke="#7a5a6a" stroke-width="0.8"/>
<path d="M72.3 143.6 C64.2 150.7 53.3 165.9 53.3 166.9 C53.2 169.2 57.0 171.8 59.1 170.9 C60.0 170.6 70.6 155.2 74.6 145.1 Z" fill="#f4eaf0" opacity="0.6" filter="url(#b4T)"/>
<path d="M78.2 142.9 L57.2 172.3" stroke="#9a6888" stroke-width="0.8" opacity="0.6"/>
<path d="M73.7 139.4 L52.7 168.8" stroke="#9a6888" stroke-width="0.8" opacity="0.6"/>
<path d="M70.1 133.8 C63.2 134.1 54.7 139.2 54.3 140.5 C52.9 143.4 56.5 148.9 59.7 148.8 C61.1 148.9 69.2 143.3 72.2 137.1 Z" fill="#d4bccb" stroke="#7a5a6a" stroke-width="0.8"/>
<path d="M66.9 136.4 C63.1 136.5 59.0 139.4 58.7 140.2 C58.0 142.0 60.4 145.2 62.3 145.0 C63.1 145.0 67.1 141.8 68.3 138.3 Z" fill="#f4eaf0" opacity="0.6" filter="url(#b4T)"/>
<path d="M72.2 137.6 L59.9 145.8" stroke="#9a6888" stroke-width="0.8" opacity="0.6"/>
<path d="M70.0 133.3 L57.6 141.5" stroke="#9a6888" stroke-width="0.8" opacity="0.6"/>
<path d="M69.4 122.0 C65.4 118.2 58.8 117.6 57.7 118.3 C54.9 119.9 54.5 126.5 57.2 128.2 C58.3 129.1 64.9 129.2 69.2 125.8 Z" fill="#d4bccb" stroke="#7a5a6a" stroke-width="0.8"/>
<path d="M65.2 122.0 C63.5 120.1 61.5 120.3 60.9 120.8 C59.5 122.1 60.1 126.0 61.8 126.7 C62.6 127.1 64.5 126.7 65.5 124.3 Z" fill="#f4eaf0" opacity="0.6" filter="url(#b4T)"/>
<path d="M68.9 126.3 L59.0 125.9" stroke="#9a6888" stroke-width="0.8" opacity="0.6"/>
<path d="M69.7 121.5 L59.8 121.2" stroke="#9a6888" stroke-width="0.8" opacity="0.6"/>
<circle cx="87" cy="127" r="27" fill="#5a1a06"/>
<circle cx="100.7" cy="120.2" r="1.2" fill="#d45818"/>
<circle cx="95.0" cy="118.7" r="1.1" fill="#d45818"/>
<circle cx="91.9" cy="125.5" r="0.9" fill="#d45818"/>
<circle cx="74.8" cy="133.3" r="1.1" fill="#d45818"/>
<circle cx="83.6" cy="118.9" r="1.2" fill="#d45818"/>
<circle cx="91.9" cy="109.9" r="1.1" fill="#d45818"/>
<circle cx="96.5" cy="147.5" r="0.9" fill="#d45818"/>
<circle cx="100.5" cy="137.3" r="1.3" fill="#d45818"/>
<circle cx="103.2" cy="138.5" r="1.0" fill="#d45818"/>
<circle cx="92.9" cy="141.8" r="0.8" fill="#d45818"/>
<circle cx="102.2" cy="134.2" r="1.0" fill="#d45818"/>
<circle cx="99.4" cy="139.8" r="1.2" fill="#d45818"/>
<circle cx="89.4" cy="131.4" r="1.2" fill="#d45818"/>
<circle cx="76.6" cy="132.4" r="1.0" fill="#d45818"/>
<circle cx="70.6" cy="127.6" r="1.0" fill="#d45818"/>
<circle cx="103.1" cy="133.1" r="1.2" fill="#d45818"/>
<circle cx="99.6" cy="130.9" r="0.9" fill="#d45818"/>
<circle cx="71.5" cy="110.8" r="1.0" fill="#d45818"/>
<circle cx="90.3" cy="143.9" r="1.1" fill="#d45818"/>
<circle cx="100.5" cy="132.8" r="0.8" fill="#d45818"/>
<circle cx="84.0" cy="120.1" r="1.2" fill="#d45818"/>
<circle cx="91.1" cy="148.2" r="0.8" fill="#d45818"/>
<circle cx="70.0" cy="144.2" r="0.8" fill="#d45818"/>
<circle cx="73.2" cy="114.3" r="1.0" fill="#d45818"/>
<circle cx="81.5" cy="142.8" r="1.0" fill="#d45818"/>
<circle cx="80.0" cy="111.7" r="1.0" fill="#d45818"/>
<circle cx="101.7" cy="125.7" r="0.8" fill="#d45818"/>
<circle cx="68.3" cy="137.7" r="1.2" fill="#d45818"/>
<circle cx="67.9" cy="118.6" r="1.1" fill="#d45818"/>
<circle cx="98.8" cy="128.2" r="1.1" fill="#d45818"/>
<circle cx="96.7" cy="135.1" r="1.2" fill="#d45818"/>
<circle cx="105.7" cy="130.9" r="1.0" fill="#d45818"/>
<circle cx="93.7" cy="119.5" r="0.9" fill="#d45818"/>
<circle cx="68.7" cy="111.4" r="0.7" fill="#d45818"/>
<circle cx="102.5" cy="123.7" r="1.1" fill="#d45818"/>
<circle cx="80.4" cy="134.2" r="0.9" fill="#d45818"/>
<circle cx="80.7" cy="122.8" r="1.1" fill="#d45818"/>
<circle cx="76.0" cy="123.3" r="1.2" fill="#d45818"/>
<circle cx="98.1" cy="147.7" r="0.7" fill="#d45818"/>
<circle cx="76.0" cy="148.0" r="0.8" fill="#d45818"/>
<circle cx="85.0" cy="149.1" r="1.1" fill="#d45818"/>
<circle cx="81.5" cy="146.9" r="1.0" fill="#d45818"/>
<circle cx="91.6" cy="114.5" r="0.9" fill="#d45818"/>
<circle cx="95.1" cy="116.9" r="0.9" fill="#d45818"/>
<circle cx="70.7" cy="125.4" r="0.7" fill="#d45818"/>
<circle cx="86.5" cy="113.7" r="1.3" fill="#d45818"/>
<circle cx="72.6" cy="129.1" r="0.7" fill="#d45818"/>
<circle cx="76.0" cy="140.4" r="1.0" fill="#d45818"/>
<circle cx="81.7" cy="139.5" r="1.2" fill="#d45818"/>
<circle cx="73.0" cy="143.9" r="0.7" fill="#d45818"/>
<circle cx="91.7" cy="130.2" r="0.8" fill="#d45818"/>
<circle cx="68.2" cy="124.5" r="0.8" fill="#d45818"/>
<circle cx="75.8" cy="106.6" r="1.1" fill="#d45818"/>
<circle cx="77.8" cy="148.6" r="1.2" fill="#d45818"/>
<circle cx="107.6" cy="113.7" r="0.7" fill="#d45818"/>
<circle cx="109.8" cy="124.7" r="0.8" fill="#d45818"/>
<circle cx="96.2" cy="105.8" r="0.7" fill="#d45818"/>
<circle cx="88.2" cy="106.1" r="1.1" fill="#d45818"/>
<circle cx="92.9" cy="125.9" r="0.7" fill="#d45818"/>
<circle cx="93.8" cy="124.6" r="1.0" fill="#d45818"/>
<circle cx="78.7" cy="133.4" r="1.1" fill="#d45818"/>
<circle cx="98.1" cy="120.4" r="1.1" fill="#d45818"/>
<circle cx="76.7" cy="138.5" r="0.8" fill="#d45818"/>
<circle cx="78.3" cy="150.1" r="1.3" fill="#d45818"/>
<circle cx="69.2" cy="122.8" r="0.8" fill="#d45818"/>
<circle cx="101.3" cy="137.2" r="1.0" fill="#d45818"/>
<circle cx="104.4" cy="118.3" r="0.8" fill="#d45818"/>
<circle cx="89.5" cy="116.7" r="0.8" fill="#d45818"/>
<circle cx="76.1" cy="128.5" r="1.0" fill="#d45818"/>
<circle cx="109.7" cy="136.9" r="1.2" fill="#d45818"/>
<circle cx="97.9" cy="139.9" r="0.8" fill="#d45818"/>
<circle cx="97.5" cy="148.2" r="1.0" fill="#d45818"/>
<circle cx="82.1" cy="127.4" r="1.1" fill="#d45818"/>
<circle cx="75.6" cy="145.0" r="1.0" fill="#d45818"/>
<circle cx="103.2" cy="111.3" r="1.0" fill="#d45818"/>
<circle cx="92.4" cy="124.8" r="0.9" fill="#d45818"/>
<circle cx="103.4" cy="132.0" r="0.7" fill="#d45818"/>
<circle cx="79.0" cy="124.7" r="0.9" fill="#d45818"/>
<circle cx="100.5" cy="144.6" r="1.1" fill="#d45818"/>
<circle cx="84.7" cy="129.8" r="1.3" fill="#d45818"/>
<circle cx="82.1" cy="138.6" r="0.7" fill="#d45818"/>
<circle cx="63.8" cy="128.0" r="0.8" fill="#d45818"/>
<circle cx="85.0" cy="145.5" r="1.2" fill="#d45818"/>
<circle cx="101.8" cy="133.7" r="0.8" fill="#d45818"/>
<circle cx="87.5" cy="121.3" r="0.8" fill="#d45818"/>
<circle cx="72.6" cy="117.4" r="0.8" fill="#d45818"/>
<circle cx="73.2" cy="112.7" r="1.3" fill="#d45818"/>
<circle cx="110.8" cy="123.8" r="1.0" fill="#d45818"/>
<circle cx="71.3" cy="134.4" r="0.8" fill="#d45818"/>
<circle cx="106.2" cy="126.9" r="1.0" fill="#d45818"/>
<circle cx="84.9" cy="149.9" r="0.9" fill="#d45818"/>
<circle cx="102.9" cy="124.0" r="0.9" fill="#d45818"/>
<circle cx="99.9" cy="144.4" r="1.2" fill="#d45818"/>
<circle cx="104.1" cy="126.1" r="0.7" fill="#d45818"/>
<circle cx="96.6" cy="118.7" r="1.0" fill="#d45818"/>
<circle cx="96.0" cy="117.4" r="1.0" fill="#d45818"/>
<circle cx="64.7" cy="120.4" r="0.7" fill="#d45818"/>
<circle cx="92.3" cy="121.2" r="1.2" fill="#d45818"/>
<circle cx="97.2" cy="126.6" r="1.2" fill="#d45818"/>
<circle cx="89.5" cy="109.0" r="1.0" fill="#d45818"/>
<circle cx="85.8" cy="131.4" r="0.9" fill="#d45818"/>
<circle cx="83.5" cy="150.2" r="1.1" fill="#d45818"/>
<circle cx="101.6" cy="140.3" r="1.0" fill="#d45818"/>
<circle cx="84.2" cy="108.8" r="0.9" fill="#d45818"/>
<circle cx="95.4" cy="103.8" r="0.7" fill="#d45818"/>
<circle cx="69.1" cy="112.1" r="1.3" fill="#d45818"/>
<circle cx="88.7" cy="115.2" r="1.1" fill="#d45818"/>
<circle cx="77.4" cy="139.4" r="1.1" fill="#d45818"/>
<circle cx="77.4" cy="104.4" r="1.1" fill="#d45818"/>
<circle cx="98.3" cy="109.8" r="1.1" fill="#d45818"/>
<circle cx="107.4" cy="131.9" r="1.2" fill="#d45818"/>
<circle cx="65.5" cy="115.6" r="1.0" fill="#d45818"/>
<circle cx="65.0" cy="117.4" r="1.2" fill="#d45818"/>
<circle cx="70.4" cy="119.2" r="1.3" fill="#d45818"/>
<circle cx="67.3" cy="113.4" r="1.0" fill="#d45818"/>
<circle cx="68.9" cy="130.6" r="0.9" fill="#d45818"/>
<circle cx="84.1" cy="138.5" r="0.8" fill="#d45818"/>
<circle cx="66.9" cy="140.3" r="1.2" fill="#d45818"/>
<circle cx="104.0" cy="126.6" r="1.1" fill="#d45818"/>
<circle cx="74.1" cy="133.6" r="0.9" fill="#d45818"/>
<circle cx="83.8" cy="140.9" r="0.9" fill="#d45818"/>
<circle cx="102.2" cy="129.4" r="1.3" fill="#d45818"/>
<circle cx="74.9" cy="145.8" r="1.2" fill="#d45818"/>
<circle cx="82.9" cy="123.3" r="1.1" fill="#d45818"/>
<circle cx="110.1" cy="124.0" r="1.1" fill="#d45818"/>
<circle cx="79.8" cy="105.5" r="0.8" fill="#d45818"/>
<circle cx="93.2" cy="132.3" r="1.2" fill="#d45818"/>
<circle cx="76.7" cy="140.6" r="1.0" fill="#d45818"/>
<circle cx="63.1" cy="129.6" r="1.2" fill="#d45818"/>
<circle cx="78.5" cy="114.6" r="1.2" fill="#d45818"/>
<circle cx="96.0" cy="121.3" r="0.8" fill="#d45818"/>
<circle cx="96.7" cy="125.1" r="0.8" fill="#d45818"/>
<circle cx="102.1" cy="121.0" r="0.8" fill="#d45818"/>
<circle cx="82.8" cy="107.3" r="0.7" fill="#d45818"/>
<circle cx="95.3" cy="126.0" r="1.2" fill="#d45818"/>
<circle cx="73.3" cy="112.1" r="1.0" fill="#d45818"/>
<circle cx="110.4" cy="130.6" r="0.9" fill="#d45818"/>
<circle cx="78.6" cy="116.7" r="1.3" fill="#d45818"/>
<circle cx="96.5" cy="134.9" r="0.8" fill="#d45818"/>
<circle cx="70.2" cy="111.3" r="0.8" fill="#d45818"/>
<circle cx="69.5" cy="138.4" r="0.7" fill="#d45818"/>
<circle cx="95.5" cy="115.9" r="1.3" fill="#d45818"/>
<circle cx="89.9" cy="111.8" r="1.3" fill="#d45818"/>
<circle cx="89.9" cy="134.6" r="0.9" fill="#d45818"/>
<circle cx="77.9" cy="116.0" r="1.3" fill="#d45818"/>
<circle cx="85.1" cy="137.9" r="1.0" fill="#d45818"/>
<circle cx="99.6" cy="144.1" r="1.0" fill="#d45818"/>
<circle cx="89.6" cy="107.6" r="0.9" fill="#d45818"/>
<circle cx="74.5" cy="120.5" r="0.9" fill="#d45818"/>
<circle cx="89.8" cy="110.6" r="1.3" fill="#d45818"/>
<circle cx="98.3" cy="149.0" r="1.0" fill="#d45818"/>
<circle cx="69.7" cy="121.1" r="0.8" fill="#d45818"/>
<circle cx="75.8" cy="135.6" r="0.8" fill="#d45818"/>
<circle cx="101.5" cy="117.6" r="1.1" fill="#d45818"/>
<circle cx="86.9" cy="136.9" r="0.9" fill="#d45818"/>
<circle cx="109.1" cy="131.4" r="0.8" fill="#d45818"/>
<circle cx="71.9" cy="144.1" r="0.8" fill="#d45818"/>
<circle cx="104.7" cy="131.6" r="1.1" fill="#d45818"/>
<circle cx="108.8" cy="135.5" r="1.0" fill="#d45818"/>
<circle cx="77.8" cy="149.1" r="0.9" fill="#d45818"/>
<circle cx="110.3" cy="127.2" r="0.7" fill="#d45818"/>
<circle cx="95.9" cy="109.9" r="1.0" fill="#d45818"/>
<circle cx="69.4" cy="137.6" r="1.3" fill="#d45818"/>
<circle cx="74.1" cy="121.7" r="0.8" fill="#d45818"/>
<circle cx="76.8" cy="117.8" r="0.7" fill="#d45818"/>
<circle cx="88.2" cy="148.6" r="1.2" fill="#d45818"/>
<circle cx="80.6" cy="120.4" r="1.0" fill="#d45818"/>
<circle cx="89.8" cy="115.0" r="1.1" fill="#d45818"/>
<circle cx="72.0" cy="122.1" r="1.0" fill="#d45818"/>
<circle cx="108.2" cy="131.6" r="0.7" fill="#d45818"/>
<circle cx="104.3" cy="134.2" r="1.2" fill="#d45818"/>
<circle cx="89.4" cy="150.3" r="0.8" fill="#d45818"/>
<circle cx="108.1" cy="136.5" r="1.0" fill="#d45818"/>
<circle cx="95.3" cy="126.6" r="1.0" fill="#d45818"/>
<circle cx="82.1" cy="146.8" r="1.2" fill="#d45818"/>
<circle cx="108.2" cy="127.7" r="0.7" fill="#d45818"/>
<circle cx="80.8" cy="139.2" r="0.7" fill="#d45818"/>
<circle cx="106.4" cy="130.1" r="1.0" fill="#d45818"/>
<circle cx="82.9" cy="148.1" r="0.9" fill="#d45818"/>
<circle cx="89.9" cy="104.2" r="1.2" fill="#d45818"/>
<circle cx="86.7" cy="134.8" r="0.9" fill="#d45818"/>
<circle cx="87.8" cy="109.6" r="1.2" fill="#d45818"/>
<circle cx="104.1" cy="135.0" r="0.7" fill="#d45818"/>
<circle cx="101.7" cy="121.6" r="0.7" fill="#d45818"/>
<circle cx="111.5" cy="129.1" r="0.7" fill="#d45818"/>
<circle cx="102.4" cy="134.3" r="0.9" fill="#d45818"/>
<circle cx="111.2" cy="122.8" r="1.2" fill="#d45818"/>
<circle cx="74.4" cy="143.1" r="0.9" fill="#d45818"/>
<circle cx="77.3" cy="142.2" r="1.1" fill="#d45818"/>
<circle cx="75.8" cy="125.7" r="0.9" fill="#d45818"/>
<circle cx="91.5" cy="134.8" r="1.0" fill="#d45818"/>
<circle cx="75.7" cy="136.9" r="1.3" fill="#d45818"/>
<circle cx="77.6" cy="136.3" r="0.9" fill="#d45818"/>
<circle cx="111.1" cy="125.1" r="1.1" fill="#d45818"/>
<circle cx="85.4" cy="126.7" r="1.3" fill="#d45818"/>
<circle cx="88.0" cy="114.7" r="1.1" fill="#d45818"/>
<circle cx="104.1" cy="120.6" r="0.9" fill="#d45818"/>
<circle cx="79.8" cy="150.3" r="1.2" fill="#d45818"/>
<circle cx="68.3" cy="118.3" r="1.0" fill="#d45818"/>
<circle cx="81.5" cy="135.1" r="1.2" fill="#d45818"/>
<circle cx="98.8" cy="141.0" r="1.1" fill="#d45818"/>
<circle cx="100.5" cy="115.2" r="1.2" fill="#d45818"/>
<circle cx="100.5" cy="146.0" r="1.0" fill="#d45818"/>
<circle cx="71.1" cy="134.3" r="1.2" fill="#d45818"/>
<circle cx="103.8" cy="144.4" r="1.2" fill="#d45818"/>
<circle cx="73.9" cy="136.1" r="0.7" fill="#d45818"/>
<circle cx="73.5" cy="115.4" r="1.1" fill="#d45818"/>
<circle cx="84.8" cy="135.9" r="1.0" fill="#d45818"/>
<circle cx="96.2" cy="118.0" r="1.0" fill="#d45818"/>
<circle cx="82.7" cy="125.8" r="0.8" fill="#d45818"/>
<circle cx="69.3" cy="138.7" r="1.2" fill="#d45818"/>
<circle cx="83.9" cy="117.5" r="1.1" fill="#d45818"/>
<circle cx="95.0" cy="114.3" r="1.2" fill="#d45818"/>
<circle cx="67.4" cy="112.7" r="0.8" fill="#d45818"/>
<circle cx="96.4" cy="147.6" r="1.1" fill="#d45818"/>
<circle cx="76.6" cy="135.9" r="0.9" fill="#d45818"/>
<circle cx="100.0" cy="112.4" r="1.2" fill="#d45818"/>
<circle cx="88.8" cy="124.7" r="1.1" fill="#d45818"/>
<circle cx="98.0" cy="116.4" r="0.9" fill="#d45818"/>
<circle cx="108.8" cy="120.2" r="1.1" fill="#d45818"/>
<circle cx="76.9" cy="137.5" r="0.9" fill="#d45818"/>
<circle cx="96.2" cy="140.4" r="1.2" fill="#d45818"/>
<circle cx="89.7" cy="141.3" r="0.8" fill="#d45818"/>
<circle cx="104.9" cy="133.9" r="1.2" fill="#d45818"/>
<circle cx="78.3" cy="148.3" r="0.8" fill="#d45818"/>
<circle cx="66.2" cy="139.7" r="1.3" fill="#d45818"/>
<circle cx="75.3" cy="110.1" r="1.0" fill="#d45818"/>
<circle cx="91.2" cy="132.4" r="1.1" fill="#d45818"/>
<circle cx="81.8" cy="140.9" r="1.3" fill="#d45818"/>
<circle cx="74.6" cy="126.6" r="1.0" fill="#d45818"/>
<circle cx="95.4" cy="148.3" r="0.9" fill="#d45818"/>
<circle cx="95.5" cy="138.7" r="1.0" fill="#d45818"/>
<circle cx="86.8" cy="105.4" r="0.9" fill="#d45818"/>
<circle cx="66.9" cy="129.5" r="0.9" fill="#d45818"/>
<circle cx="70.1" cy="113.8" r="0.8" fill="#d45818"/>
<circle cx="78.3" cy="114.8" r="0.9" fill="#d45818"/>
<circle cx="93.6" cy="145.2" r="0.9" fill="#d45818"/>
<circle cx="91.6" cy="116.7" r="1.0" fill="#d45818"/>
<circle cx="80.0" cy="122.2" r="0.8" fill="#d45818"/>
<circle cx="90.9" cy="125.7" r="0.8" fill="#d45818"/>
<circle cx="67.9" cy="141.8" r="0.8" fill="#d45818"/>
<circle cx="73.8" cy="108.2" r="1.1" fill="#d45818"/>
<circle cx="96.0" cy="124.0" r="1.2" fill="#d45818"/>
<circle cx="71.5" cy="136.5" r="1.3" fill="#d45818"/>
<circle cx="75.5" cy="148.1" r="1.0" fill="#d45818"/>
<circle cx="78.3" cy="110.8" r="1.3" fill="#d45818"/>
<circle cx="91.2" cy="148.5" r="0.8" fill="#d45818"/>
<circle cx="90.9" cy="130.3" r="0.8" fill="#d45818"/>
<circle cx="72.4" cy="123.4" r="1.0" fill="#d45818"/>
<circle cx="87.9" cy="108.1" r="0.7" fill="#d45818"/>
<circle cx="100.2" cy="143.2" r="1.1" fill="#d45818"/>
<circle cx="106.1" cy="140.0" r="1.1" fill="#d45818"/>
<circle cx="77.6" cy="124.4" r="0.8" fill="#d45818"/>
<circle cx="74.3" cy="143.8" r="1.3" fill="#d45818"/>
<circle cx="96.5" cy="111.3" r="0.9" fill="#d45818"/>
<circle cx="105.2" cy="140.9" r="1.2" fill="#d45818"/>
<circle cx="107.3" cy="137.8" r="1.0" fill="#d45818"/>
<circle cx="89.8" cy="137.1" r="1.2" fill="#d45818"/>
<circle cx="89.3" cy="118.9" r="1.0" fill="#d45818"/>
<circle cx="85.6" cy="136.3" r="1.1" fill="#d45818"/>
<circle cx="82.3" cy="117.2" r="1.3" fill="#d45818"/>
<circle cx="106.5" cy="142.2" r="0.7" fill="#d45818"/>
<circle cx="93.4" cy="113.3" r="1.3" fill="#d45818"/>
<circle cx="76.2" cy="140.3" r="0.9" fill="#d45818"/>
<circle cx="74.1" cy="109.0" r="0.9" fill="#d45818"/>
<circle cx="68.2" cy="128.3" r="1.2" fill="#d45818"/>
<circle cx="109.4" cy="121.4" r="1.2" fill="#d45818"/>
<circle cx="93.2" cy="109.1" r="0.8" fill="#d45818"/>
<circle cx="100.7" cy="144.7" r="1.2" fill="#d45818"/>
<circle cx="97.9" cy="145.5" r="1.2" fill="#d45818"/>
<circle cx="71.5" cy="124.5" r="0.8" fill="#d45818"/>
<circle cx="70.9" cy="129.7" r="1.0" fill="#d45818"/>
<circle cx="103.2" cy="127.8" r="1.1" fill="#d45818"/>
<circle cx="68.0" cy="141.5" r="1.1" fill="#d45818"/>
<circle cx="95.6" cy="146.9" r="1.1" fill="#d45818"/>
<circle cx="98.3" cy="111.1" r="1.1" fill="#d45818"/>
<circle cx="90.3" cy="145.1" r="0.7" fill="#d45818"/>
<circle cx="91.7" cy="121.0" r="1.3" fill="#d45818"/>
<circle cx="86.4" cy="114.9" r="0.8" fill="#d45818"/>
<circle cx="96.7" cy="141.1" r="1.0" fill="#d45818"/>
<circle cx="89.1" cy="118.5" r="1.0" fill="#d45818"/>
<circle cx="96.6" cy="119.3" r="0.8" fill="#d45818"/>
<circle cx="74.9" cy="121.5" r="0.8" fill="#d45818"/>
<circle cx="69.8" cy="144.2" r="0.8" fill="#d45818"/>
<circle cx="84.3" cy="137.9" r="1.3" fill="#d45818"/>
<circle cx="83.3" cy="135.6" r="0.7" fill="#d45818"/>
<circle cx="79.5" cy="104.1" r="0.7" fill="#d45818"/>
<circle cx="80.8" cy="148.1" r="1.0" fill="#d45818"/>
<circle cx="93.8" cy="129.3" r="1.2" fill="#d45818"/>
<circle cx="72.7" cy="112.2" r="1.1" fill="#d45818"/>
<circle cx="98.8" cy="143.9" r="1.0" fill="#d45818"/>
<circle cx="72.6" cy="136.5" r="1.2" fill="#d45818"/>
<circle cx="76.8" cy="117.2" r="0.7" fill="#d45818"/>
<circle cx="80.6" cy="126.1" r="1.2" fill="#d45818"/>
<circle cx="109.5" cy="122.9" r="0.9" fill="#d45818"/>
<circle cx="101.8" cy="110.2" r="1.2" fill="#d45818"/>
<circle cx="71.6" cy="125.2" r="1.1" fill="#d45818"/>
<circle cx="87.2" cy="138.8" r="0.7" fill="#d45818"/>
<circle cx="75.5" cy="147.2" r="0.8" fill="#d45818"/>
<circle cx="76.8" cy="140.8" r="0.7" fill="#d45818"/>
<circle cx="68.2" cy="117.0" r="1.1" fill="#d45818"/>
<circle cx="80.2" cy="103.8" r="0.8" fill="#d45818"/>
<circle cx="108.9" cy="124.9" r="1.1" fill="#d45818"/>
<circle cx="72.6" cy="135.7" r="0.8" fill="#d45818"/>
<circle cx="84.2" cy="105.2" r="0.8" fill="#d45818"/>
<circle cx="76.2" cy="132.6" r="1.2" fill="#d45818"/>
<circle cx="91.3" cy="116.6" r="1.2" fill="#d45818"/>
<circle cx="89.1" cy="136.8" r="0.8" fill="#d45818"/>
<circle cx="84.9" cy="110.3" r="0.8" fill="#d45818"/>
<circle cx="77.7" cy="138.3" r="0.9" fill="#d45818"/>
<circle cx="102.6" cy="130.6" r="1.2" fill="#d45818"/>
<circle cx="107.4" cy="136.1" r="0.8" fill="#d45818"/>
<circle cx="90.0" cy="118.1" r="0.7" fill="#d45818"/>
<circle cx="76.0" cy="145.6" r="1.2" fill="#d45818"/>
<circle cx="90.1" cy="112.9" r="0.7" fill="#d45818"/>
<circle cx="91.9" cy="141.3" r="1.0" fill="#d45818"/>
<circle cx="93.9" cy="104.2" r="0.9" fill="#d45818"/>
<circle cx="96.7" cy="133.3" r="1.1" fill="#d45818"/>
<circle cx="67.0" cy="137.1" r="1.2" fill="#d45818"/>
<circle cx="91.7" cy="135.0" r="0.8" fill="#d45818"/>
<circle cx="100.7" cy="138.2" r="1.1" fill="#d45818"/>
<circle cx="82.4" cy="148.6" r="1.3" fill="#d45818"/>
<circle cx="86.7" cy="126.0" r="1.0" fill="#d45818"/>
<circle cx="77.2" cy="140.9" r="1.2" fill="#d45818"/>
<circle cx="87.0" cy="121.5" r="1.0" fill="#d45818"/>
<circle cx="101.2" cy="139.2" r="1.1" fill="#d45818"/>
<circle cx="91.5" cy="142.7" r="1.0" fill="#d45818"/>
<circle cx="73.7" cy="110.9" r="1.3" fill="#d45818"/>
<circle cx="106.9" cy="126.5" r="0.7" fill="#d45818"/>
<circle cx="101.0" cy="112.8" r="0.9" fill="#d45818"/>
<circle cx="96.9" cy="130.0" r="0.9" fill="#d45818"/>
<circle cx="97.6" cy="145.8" r="0.9" fill="#d45818"/>
<circle cx="102.7" cy="132.1" r="0.8" fill="#d45818"/>
<circle cx="89.3" cy="113.4" r="1.2" fill="#d45818"/>
<circle cx="81.3" cy="140.5" r="0.8" fill="#d45818"/>
<circle cx="78.8" cy="111.9" r="1.2" fill="#d45818"/>
<circle cx="71.6" cy="145.8" r="0.9" fill="#d45818"/>
<circle cx="75.1" cy="128.2" r="0.7" fill="#d45818"/>
<circle cx="100.2" cy="132.6" r="0.9" fill="#d45818"/>
<circle cx="68.2" cy="140.2" r="1.3" fill="#d45818"/>
<circle cx="72.5" cy="109.4" r="1.2" fill="#d45818"/>
<circle cx="101.3" cy="115.2" r="0.9" fill="#d45818"/>
<circle cx="96.4" cy="117.9" r="1.1" fill="#d45818"/>
<circle cx="85.4" cy="145.8" r="1.0" fill="#d45818"/>
<circle cx="99.7" cy="131.2" r="1.1" fill="#d45818"/>
<circle cx="66.4" cy="129.4" r="1.3" fill="#d45818"/>
<circle cx="85.0" cy="120.5" r="0.8" fill="#d45818"/>
<circle cx="104.8" cy="115.6" r="0.7" fill="#d45818"/>
<circle cx="78.4" cy="105.0" r="1.0" fill="#d45818"/>
<circle cx="105.3" cy="131.4" r="0.7" fill="#d45818"/>
<circle cx="97.9" cy="142.9" r="0.8" fill="#d45818"/>
<circle cx="72.0" cy="124.6" r="1.2" fill="#d45818"/>
<circle cx="68.1" cy="119.4" r="0.7" fill="#d45818"/>
<circle cx="110.3" cy="128.8" r="1.3" fill="#d45818"/>
<circle cx="84.1" cy="110.2" r="1.1" fill="#d45818"/>
<circle cx="78.7" cy="114.8" r="1.1" fill="#d45818"/>
<circle cx="91.8" cy="115.5" r="0.9" fill="#d45818"/>
<circle cx="82.6" cy="139.1" r="1.1" fill="#d45818"/>
<circle cx="80.8" cy="137.3" r="0.7" fill="#d45818"/>
<circle cx="90.4" cy="125.7" r="0.9" fill="#d45818"/>
<circle cx="83.7" cy="104.0" r="1.2" fill="#d45818"/>
<circle cx="75.5" cy="126.9" r="1.2" fill="#d45818"/>
<circle cx="85.0" cy="142.2" r="1.2" fill="#d45818"/>
<circle cx="84.2" cy="109.1" r="0.8" fill="#d45818"/>
<circle cx="67.7" cy="137.5" r="1.2" fill="#d45818"/>
<circle cx="71.9" cy="135.5" r="0.8" fill="#d45818"/>
<circle cx="79.7" cy="148.5" r="1.1" fill="#d45818"/>
<circle cx="68.9" cy="130.8" r="1.0" fill="#d45818"/>
<circle cx="98.3" cy="132.5" r="0.9" fill="#d45818"/>
<circle cx="88.4" cy="139.0" r="1.3" fill="#d45818"/>
<circle cx="64.4" cy="135.1" r="1.3" fill="#d45818"/>
<circle cx="88.7" cy="127.9" r="1.0" fill="#d45818"/>
<circle cx="79.4" cy="117.5" r="1.0" fill="#d45818"/>
<circle cx="97.4" cy="131.5" r="1.3" fill="#d45818"/>
<circle cx="87.6" cy="113.5" r="1.0" fill="#d45818"/>
<circle cx="89.0" cy="123.4" r="0.8" fill="#d45818"/>
<circle cx="99.1" cy="131.4" r="1.0" fill="#d45818"/>
<circle cx="108.5" cy="136.6" r="0.8" fill="#d45818"/>
<circle cx="78.3" cy="113.9" r="0.9" fill="#d45818"/>
<circle cx="85.0" cy="144.6" r="1.3" fill="#d45818"/>
<circle cx="99.2" cy="119.1" r="0.9" fill="#d45818"/>
<circle cx="70.1" cy="109.4" r="1.3" fill="#d45818"/>
<circle cx="93.3" cy="129.5" r="1.3" fill="#d45818"/>
<circle cx="86.2" cy="133.6" r="1.3" fill="#d45818"/>
<circle cx="83.0" cy="119.5" r="0.8" fill="#d45818"/>
<circle cx="95.1" cy="140.6" r="1.2" fill="#d45818"/>
<circle cx="77.6" cy="131.7" r="0.8" fill="#d45818"/>
<circle cx="102.6" cy="112.0" r="1.0" fill="#d45818"/>
<circle cx="85.5" cy="104.9" r="1.1" fill="#d45818"/>
<circle cx="110.4" cy="126.8" r="0.9" fill="#d45818"/>
<circle cx="101.1" cy="117.8" r="1.0" fill="#d45818"/>
<circle cx="88.8" cy="117.0" r="0.7" fill="#d45818"/>
<circle cx="86.9" cy="102.6" r="1.3" fill="#d45818"/>
<circle cx="72.1" cy="142.9" r="1.2" fill="#d45818"/>
<circle cx="99.9" cy="139.5" r="0.8" fill="#d45818"/>
<circle cx="75.1" cy="116.9" r="0.9" fill="#d45818"/>
<circle cx="106.2" cy="135.5" r="0.9" fill="#d45818"/>
<circle cx="101.0" cy="109.2" r="1.3" fill="#d45818"/>
<circle cx="104.0" cy="119.2" r="1.1" fill="#d45818"/>
<circle cx="94.0" cy="146.3" r="0.9" fill="#d45818"/>
<circle cx="84" cy="123" r="2.5" fill="#b070d0"/>
<path d="M143.1 160.4 C138.6 154.7 129.6 151.8 128.1 152.4 C124.4 153.3 122.2 160.8 124.8 163.6 C125.8 164.9 135.0 167.2 141.8 164.8 Z" fill="#d84080" stroke="#801848" stroke-width="0.7"/>
<path d="M139.0 159.9 C136.6 156.7 131.9 155.4 131.0 155.8 C128.9 156.4 127.8 161.0 129.4 162.6 C130.0 163.3 134.8 164.3 138.3 162.6 Z" fill="#f478b0" opacity="0.6" filter="url(#b4T)"/>
<path d="M147.4 157.7 C147.0 149.0 140.5 138.0 139.0 137.4 C135.6 135.7 129.0 139.8 129.0 143.6 C128.9 145.2 136.0 155.9 143.6 160.1 Z" fill="#d84080" stroke="#801848" stroke-width="0.7"/>
<path d="M144.6 154.7 C144.2 149.3 139.9 142.2 139.0 141.9 C136.9 140.9 133.0 143.4 133.0 145.7 C133.0 146.7 137.6 153.5 142.4 156.2 Z" fill="#f478b0" opacity="0.6" filter="url(#b4T)"/>
<path d="M151.9 158.2 C156.9 149.8 158.6 134.8 157.8 133.4 C156.1 130.0 148.4 129.2 146.1 132.3 C145.0 133.5 144.0 148.6 147.3 157.8 Z" fill="#d84080" stroke="#801848" stroke-width="0.7"/>
<path d="M151.3 154.2 C154.4 148.3 155.6 137.8 155.1 136.9 C154.1 134.9 149.5 134.5 148.1 136.3 C147.5 137.0 146.7 147.6 148.6 153.9 Z" fill="#f478b0" opacity="0.6" filter="url(#b4T)"/>
<path d="M155.3 161.4 C164.4 158.2 175.0 147.8 175.3 146.2 C176.1 142.5 170.6 137.1 166.9 138.0 C165.3 138.3 155.1 149.1 152.1 158.2 Z" fill="#d84080" stroke="#801848" stroke-width="0.7"/>
<path d="M157.3 157.8 C163.3 155.4 170.7 148.4 170.9 147.4 C171.4 145.2 168.1 141.9 165.9 142.4 C165.0 142.5 157.8 149.9 155.4 155.9 Z" fill="#f478b0" opacity="0.6" filter="url(#b4T)"/>
<path d="M156.2 165.8 C166.4 168.5 183.0 166.4 184.1 165.3 C187.0 162.9 185.9 155.1 182.4 153.7 C180.9 152.9 164.5 155.7 155.5 161.3 Z" fill="#d84080" stroke="#801848" stroke-width="0.7"/>
<path d="M159.9 164.1 C167.1 165.7 179.1 164.3 179.8 163.6 C181.6 162.2 180.9 157.5 178.9 156.6 C178.0 156.1 166.1 157.9 159.6 161.4 Z" fill="#f478b0" opacity="0.6" filter="url(#b4T)"/>
<path d="M154.3 170.0 C161.2 178.4 176.4 186.9 178.0 186.7 C181.7 186.5 185.4 179.6 183.5 176.4 C182.8 174.9 167.3 167.0 156.4 166.0 Z" fill="#d84080" stroke="#801848" stroke-width="0.7"/>
<path d="M158.3 170.8 C163.4 176.6 174.4 182.9 175.4 182.7 C177.7 182.6 179.9 178.5 178.8 176.6 C178.4 175.7 167.2 169.7 159.6 168.5 Z" fill="#f478b0" opacity="0.6" filter="url(#b4T)"/>
<path d="M150.5 172.1 C151.3 182.6 158.9 197.3 160.3 198.0 C163.6 199.9 170.5 196.2 170.7 192.5 C170.9 190.9 162.8 176.4 154.5 170.0 Z" fill="#d84080" stroke="#801848" stroke-width="0.7"/>
<path d="M153.3 175.2 C154.2 182.3 159.5 192.8 160.4 193.2 C162.3 194.4 166.5 192.2 166.6 189.9 C166.8 189.0 161.1 178.7 155.7 173.9 Z" fill="#f478b0" opacity="0.6" filter="url(#b4T)"/>
<path d="M145.8 171.6 C140.4 179.9 138.1 195.1 138.9 196.5 C140.4 200.0 148.1 201.0 150.5 198.0 C151.6 196.9 153.3 181.6 150.3 172.2 Z" fill="#d84080" stroke="#801848" stroke-width="0.7"/>
<path d="M146.1 175.7 C142.8 181.4 141.3 191.8 141.8 192.6 C142.7 194.7 147.3 195.3 148.7 193.5 C149.4 192.8 150.6 182.4 148.8 176.1 Z" fill="#f478b0" opacity="0.6" filter="url(#b4T)"/>
<path d="M142.4 168.4 C134.1 171.3 125.0 180.6 124.9 182.3 C124.1 186.0 129.9 191.2 133.5 190.1 C135.1 189.8 143.7 180.0 145.7 171.5 Z" fill="#d84080" stroke="#801848" stroke-width="0.7"/>
<path d="M140.2 171.9 C135.1 173.8 129.5 179.9 129.4 180.8 C129.0 183.1 132.5 186.2 134.7 185.5 C135.6 185.3 140.9 179.0 142.2 173.7 Z" fill="#f478b0" opacity="0.6" filter="url(#b4T)"/>
<path d="M141.7 163.4 C135.1 160.1 125.3 161.3 124.2 162.5 C121.3 164.9 122.5 172.7 126.0 174.1 C127.4 174.8 137.1 173.0 142.4 167.9 Z" fill="#d84080" stroke="#801848" stroke-width="0.7"/>
<path d="M137.8 164.6 C134.1 162.8 129.0 163.6 128.4 164.3 C126.7 165.8 127.6 170.4 129.8 171.2 C130.6 171.6 135.7 170.4 138.3 167.3 Z" fill="#f478b0" opacity="0.6" filter="url(#b4T)"/>
<circle cx="149" cy="165" r="10" fill="#c02810"/>
<circle cx="149.8" cy="165.7" r="0.9" fill="#f05020"/>
<circle cx="153.9" cy="170.8" r="0.8" fill="#f05020"/>
<circle cx="149.2" cy="160.6" r="0.8" fill="#f05020"/>
<circle cx="144.8" cy="158.3" r="0.8" fill="#f05020"/>
<circle cx="142.6" cy="167.2" r="0.9" fill="#f05020"/>
<circle cx="156.7" cy="170.1" r="0.7" fill="#f05020"/>
<circle cx="141.7" cy="170.1" r="0.8" fill="#f05020"/>
<circle cx="145.5" cy="169.0" r="1.3" fill="#f05020"/>
<circle cx="149.9" cy="169.1" r="1.1" fill="#f05020"/>
<circle cx="155.5" cy="163.0" r="1.2" fill="#f05020"/>
<circle cx="150.6" cy="170.3" r="1.2" fill="#f05020"/>
<circle cx="158.0" cy="166.7" r="1.1" fill="#f05020"/>
<circle cx="144.0" cy="158.0" r="0.8" fill="#f05020"/>
<circle cx="148.0" cy="156.9" r="0.8" fill="#f05020"/>
<circle cx="150.4" cy="172.2" r="0.7" fill="#f05020"/>
<circle cx="146.3" cy="169.6" r="0.9" fill="#f05020"/>
<circle cx="152.8" cy="158.7" r="1.3" fill="#f05020"/>
<circle cx="158.1" cy="164.6" r="1.2" fill="#f05020"/>
<circle cx="151.3" cy="169.6" r="1.1" fill="#f05020"/>
<circle cx="145.9" cy="159.0" r="0.8" fill="#f05020"/>
<circle cx="152.6" cy="163.1" r="1.1" fill="#f05020"/>
<circle cx="155.3" cy="169.3" r="0.9" fill="#f05020"/>
<circle cx="143.8" cy="157.9" r="1.3" fill="#f05020"/>
<circle cx="145.1" cy="166.1" r="1.2" fill="#f05020"/>
<circle cx="150.5" cy="159.0" r="1.0" fill="#f05020"/>
<circle cx="151.6" cy="166.8" r="1.3" fill="#f05020"/>
<circle cx="150.1" cy="168.0" r="0.9" fill="#f05020"/>
<circle cx="153.7" cy="158.8" r="1.0" fill="#f05020"/>
<circle cx="150.6" cy="158.7" r="0.9" fill="#f05020"/>
<circle cx="144.7" cy="161.3" r="1.1" fill="#f05020"/>
<circle cx="150.4" cy="166.2" r="0.8" fill="#f05020"/>
<circle cx="146.2" cy="157.7" r="1.3" fill="#f05020"/>
<circle cx="148.8" cy="173.1" r="1.2" fill="#f05020"/>
<circle cx="143.7" cy="172.4" r="0.7" fill="#f05020"/>
<circle cx="147.9" cy="170.5" r="0.8" fill="#f05020"/>
<circle cx="150.4" cy="166.4" r="1.2" fill="#f05020"/>
<circle cx="147.4" cy="163.7" r="0.8" fill="#f05020"/>
<circle cx="150.7" cy="161.3" r="0.9" fill="#f05020"/>
<circle cx="145.2" cy="166.1" r="1.1" fill="#f05020"/>
<circle cx="153.2" cy="159.9" r="0.9" fill="#f05020"/>
</g>
</g></svg></div></div>
<div class="a" style="left:259px;top:126px;width:111px;height:36px;background:#4b69b0;border:1px dotted #000"></div>
<div class="lb" style="left:253px;top:129px;color:#fff">flowers_and_leave
s.jpg</div>
<div class="fr" style="left:15px;top:172px"></div>
<div class="im" style="left:20px;top:189px"><div class="im2"><svg style="left:0;top:0" width="96" height="71" viewBox="0 0 96 71"><defs><filter id="finf" x="-20%" y="-20%" width="140%" height="140%"><feGaussianBlur stdDeviation="2.5"/></filter><filter id="kinf" x="-20%" y="-20%" width="140%" height="140%"><feGaussianBlur stdDeviation="0.35"/></filter><linearGradient id="ginf" x1="0" y1="0" x2="1" y2="1"><stop offset="0" stop-color="#74a8e0"/><stop offset="1" stop-color="#5e9cd8"/></linearGradient></defs><rect width="96" height="71" fill="url(#ginf)"/><g filter="url(#finf)" opacity="0.85"><ellipse cx="32" cy="6" rx="22" ry="4" fill="#b8d4f0"/><ellipse cx="70" cy="26" rx="24" ry="4" fill="#9ac4ee"/><ellipse cx="14" cy="28" rx="14" ry="3" fill="#98c0ea"/><ellipse cx="30" cy="42" rx="28" ry="6" fill="#5090d0"/><ellipse cx="22" cy="58" rx="18" ry="3" fill="#98c4ec"/><ellipse cx="80" cy="10" rx="16" ry="4" fill="#80b4e8"/><ellipse cx="70" cy="60" rx="22" ry="5" fill="#68a8e0"/></g><g filter="url(#kinf)"><path d="M44 30 Q52 37 61 46 L59 48 Q50 40 44 30 Z" fill="#e8ecf0" stroke="#505860" stroke-width="0.5"/><path d="M44 30 L50 37" stroke="#202020" stroke-width="1.3"/><ellipse cx="61" cy="48" rx="5" ry="2.2" fill="#f4f4f4"/><path d="M65 47 Q77 45 88 47 Q76 49 65 49 Z" fill="#dde0e4" stroke="#404850" stroke-width="0.5"/><path d="M79 46.5 L88 47" stroke="#202020" stroke-width="1.3"/><circle cx="56.5" cy="48.5" r="1.5" fill="#202020"/></g></svg></div></div>
<div class="lb" style="left:9px;top:285px">in_flight.jpg</div>
<div class="fr" style="left:137px;top:172px"></div>
<div class="im" style="left:142px;top:189px"><div class="im2"><svg style="left:0;top:0" width="96" height="71" viewBox="0 0 96 71"><defs><filter id="flad" x="-20%" y="-20%" width="140%" height="140%"><feGaussianBlur stdDeviation="2.5"/></filter><filter id="hlad" x="-20%" y="-20%" width="140%" height="140%"><feGaussianBlur stdDeviation="0.5"/></filter><linearGradient id="glad" x1="0" y1="0" x2="0.7" y2="1"><stop offset="0" stop-color="#b8dca8"/><stop offset="0.5" stop-color="#6aa860"/><stop offset="1" stop-color="#2a5a22"/></linearGradient></defs><rect width="96" height="71" fill="#030503"/><g filter="url(#flad)"><ellipse cx="34" cy="64" rx="18" ry="7" fill="#5a8a50"/><ellipse cx="86" cy="62" rx="12" ry="10" fill="#78a870"/><ellipse cx="82" cy="20" rx="14" ry="10" fill="#0e240e"/></g><g filter="url(#hlad)"><path d="M31 48 Q29 36 38 26 Q46 20 44 16 Q58 8 72 12 Q82 18 82 28 Q70 42 52 46 Q40 49 31 48 Z" fill="url(#glad)"/><path d="M33 46 L78 20" stroke="#d8f0d0" stroke-width="1" opacity="0.7"/><path d="M38.6 42.8 L33.0 31.2 M38.6 42.8 L46.4 49.4 M44.2 39.5 L39.0 28.5 M44.2 39.5 L51.8 45.8 M49.9 36.2 L45.0 25.8 M49.9 36.2 L57.1 42.1 M55.5 33.0 L51.0 23.0 M55.5 33.0 L62.5 38.5 M61.1 29.8 L57.0 20.2 M61.1 29.8 L67.9 34.9 M66.8 26.5 L63.0 17.5 M66.8 26.5 L73.2 31.2 M72.4 23.2 L69.0 14.8 M72.4 23.2 L78.6 27.6" stroke="#d8f0d0" stroke-width="0.9" opacity="0.55"/><path d="M42 46 Q50 40 60 44 Q64 54 54 62 Q44 58 42 46 Z" fill="#4a8a44"/><path d="M44 50 L58 48 M46 55 L56 53" stroke="#c8e8c0" stroke-width="0.8" opacity="0.55"/><path d="M66 38 Q80 30 88 40 Q88 54 74 60 Q66 50 66 38 Z" fill="#70a862"/><path d="M70 42 L84 38 M70 48 L85 45 M72 54 L84 52" stroke="#d0f0c8" stroke-width="0.8" opacity="0.55"/><path d="M60 50 Q66 48 68 56 Q64 62 59 60 Z" fill="#3a7a36"/><circle cx="58" cy="27" r="2" fill="#c83018"/><circle cx="75" cy="44" r="2" fill="#d83a18"/><circle cx="70" cy="49" r="1.8" fill="#e04010"/></g></svg></div></div>
<div class="lb" style="left:131px;top:285px">ladybugs.jpg</div>
<div class="fr" style="left:259px;top:172px"></div>
<div class="im" style="left:264px;top:189px"><div class="im2"><svg style="left:0;top:0" width="96" height="71" viewBox="0 0 96 71"><defs><filter id="flea" x="-20%" y="-20%" width="140%" height="140%"><feGaussianBlur stdDeviation="2.5"/></filter><filter id="hlea" x="-20%" y="-20%" width="140%" height="140%"><feGaussianBlur stdDeviation="0.6"/></filter><linearGradient id="glea" x1="0" y1="0" x2="1" y2="0"><stop offset="0" stop-color="#4a3a68"/><stop offset="0.5" stop-color="#8270a8"/><stop offset="1" stop-color="#4a3a68"/></linearGradient><linearGradient id="jlea" x1="0" y1="0" x2="0" y2="1"><stop offset="0" stop-color="#8a78b0"/><stop offset="1" stop-color="#4a3868"/></linearGradient></defs><rect width="96" height="71" fill="#2e4a26"/><g filter="url(#flea)"><ellipse cx="50" cy="16" rx="14" ry="14" fill="#5a9a58"/><ellipse cx="10" cy="32" rx="8" ry="12" fill="#5a9058"/><ellipse cx="48" cy="58" rx="10" ry="10" fill="#5a9a58"/><ellipse cx="82" cy="66" rx="10" ry="6" fill="#4a8048"/><ellipse cx="88" cy="14" rx="10" ry="10" fill="#3a2a38"/></g><g filter="url(#hlea)"><ellipse cx="16" cy="5" rx="6" ry="5" fill="#f0a020"/><ellipse cx="72" cy="4" rx="8" ry="4.5" fill="#f07820"/><ellipse cx="78" cy="59" rx="8" ry="6" fill="#f0c030"/><circle cx="77" cy="58" r="3" fill="#e05010"/><path d="M62 26 Q78 10 96 8 L96 22 Q80 26 62 26 Z" fill="#5a4878"/><path d="M19 44 Q17 10 22 0 L38 0 Q42 25 36 46 Q28 52 19 44 Z" fill="url(#glea)"/><path d="M27 55 Q38 30 52 18 Q46 40 33 60 Z" fill="#7a6898"/><path d="M0 36 Q20 40 32 58 Q16 60 0 48 Z" fill="#7a4a6a"/><path d="M0 58 Q12 56 20 71 L0 71 Z" fill="#6a5a88"/><path d="M38 40 Q66 24 96 24 L96 34 Q70 40 38 40 Z" fill="url(#jlea)"/><path d="M26 71 Q60 44 96 38 L96 54 Q66 60 46 71 Z" fill="#7a68a0"/><circle cx="50" cy="38" r="1.6" fill="#f0f0f8"/><circle cx="58" cy="38" r="1.3" fill="#e0e0f0"/><circle cx="68" cy="37.5" r="1.4" fill="#e8e8f8"/><circle cx="32" cy="18" r="1" fill="#d0d0e8"/></g></svg></div></div>
<div class="lb" style="left:253px;top:285px">leafdrops.jpg</div>
<div class="fr" style="left:15px;top:312px"></div>
<div class="im" style="left:20px;top:329px"><div class="im2"><svg style="left:0;top:0" width="96" height="71" viewBox="0 0 96 71"><defs><filter id="flig"><feGaussianBlur stdDeviation="1.5"/></filter><linearGradient id="lglig" x1="0" y1="0" x2="0.3" y2="1"><stop offset="0" stop-color="#fefefe" stop-opacity="1"/><stop offset="0.5" stop-color="#fefefe" stop-opacity="0.9"/><stop offset="1" stop-color="#fefefe" stop-opacity="0"/></linearGradient></defs><rect width="96" height="71" fill="#fdfdfd"/><g filter="url(#flig)"><path d="M120 100 L-77.0 65.3" stroke="#ececec" stroke-width="3" opacity="0.45"/><path d="M120 100 L-71.3 41.5" stroke="#ececec" stroke-width="3" opacity="0.45"/><path d="M120 100 L-62.7 18.7" stroke="#ececec" stroke-width="3" opacity="0.45"/><path d="M120 100 L-51.4 -3.0" stroke="#ececec" stroke-width="3" opacity="0.45"/><path d="M120 100 L-37.6 -23.1" stroke="#ececec" stroke-width="3" opacity="0.45"/><path d="M120 100 L-21.4 -41.4" stroke="#ececec" stroke-width="3" opacity="0.45"/><path d="M120 100 L-3.1 -57.6" stroke="#ececec" stroke-width="3" opacity="0.45"/><path d="M120 100 L17.0 -71.4" stroke="#ececec" stroke-width="3" opacity="0.45"/><path d="M120 100 L38.7 -82.7" stroke="#ececec" stroke-width="3" opacity="0.45"/><path d="M120 100 L61.5 -91.3" stroke="#ececec" stroke-width="3" opacity="0.45"/><path d="M120 100 L85.3 -97.0" stroke="#ececec" stroke-width="3" opacity="0.45"/><path d="M120 100 L109.5 -99.7" stroke="#ececec" stroke-width="3" opacity="0.45"/></g><rect width="96" height="71" fill="url(#lglig)"/></svg></div></div>
<div class="lb" style="left:9px;top:425px">lightrays-transpare
nt.png</div>
<div class="fr" style="left:137px;top:312px"></div>
<div class="im" style="left:142px;top:329px"><div class="im2"><svg style="left:0;top:0" width="96" height="71" viewBox="0 0 96 71"><defs><filter id="frai" x="-20%" y="-20%" width="140%" height="140%"><feGaussianBlur stdDeviation="1.1"/></filter><linearGradient id="srai" x1="0" y1="0" x2="1" y2="0"><stop offset="0" stop-color="#6a88c0"/><stop offset="0.5" stop-color="#dfe6f0"/><stop offset="1" stop-color="#a8b8d8"/></linearGradient><linearGradient id="prai" x1="0" y1="0" x2="1" y2="0"><stop offset="0" stop-color="#9aa4a0"/><stop offset="0.25" stop-color="#e4eae8"/><stop offset="0.45" stop-color="#8a9490"/><stop offset="0.6" stop-color="#e8ecea"/><stop offset="1" stop-color="#c8ccc4"/></linearGradient><linearGradient id="wrai" x1="0" y1="0" x2="1" y2="0"><stop offset="0" stop-color="#a8a494"/><stop offset="1" stop-color="#7a7868"/></linearGradient></defs><rect width="96" height="71" fill="#8a8878"/><g filter="url(#frai)"><path d="M0 0 L26 0 L40 28 L22 71 L0 71 Z" fill="url(#wrai)"/><path d="M19.2 1.8 l4.2 -1.1 M22.1 47.4 l6.7 -3.4 M12.7 2.1 l4.0 0.6 M0.8 13.9 l6.1 1.3 M6.6 41.2 l5.9 -3.9 M24.2 48.9 l4.4 -1.7 M28.7 23.6 l3.1 -1.5 M25.4 42.3 l6.2 3.3 M16.1 68.1 l4.8 1.1 M24.9 43.3 l7.1 1.9 M21.1 3.2 l4.1 -0.7 M2.4 16.3 l3.4 -0.6 M19.1 25.5 l4.7 -1.4 M8.0 65.6 l5.9 1.9 M5.1 51.0 l3.8 -0.1 M29.7 44.8 l5.3 2.4 M25.3 54.3 l3.5 -2.2 M9.5 18.7 l2.8 2.9 M26.3 22.0 l6.3 -0.0 M27.4 32.1 l4.2 -1.0 M16.8 18.4 l4.3 4.0 M12.0 15.4 l7.9 1.3" stroke="#3a382c" stroke-width="1.4" stroke-linecap="round"/><path d="M22 0 L28 0 L42 26 L36 34 Z" fill="#2a2820"/><path d="M0 60 L8 66 L6 71 L0 71 Z" fill="#2a2820"/><path d="M28 0 L38 0 L50 20 L44 24 Z" fill="#c8c0a8"/><path d="M38 0 L86 0 L50 20 Z" fill="url(#srai)"/><path d="M86 0 L96 0 L96 6 L54 26 L50 20 Z" fill="#4a4838"/><path d="M54 26 L96 6 L96 71 L70 71 Z" fill="#9a9a8a"/><path d="M58 34 L96 18 M62 42 L96 28 M66 51 L96 37 M71 58 L96 46 M76 68 L96 60" stroke="#2e2e26" stroke-width="1.2"/><path d="M40 24 L52 24 L84 71 L16 71 Z" fill="url(#prai)"/><path d="M44 40 L48 44 L46 52 L52 60 L48 66 L56 70 M60 46 L64 52 M55 56 L62 60" stroke="#3a4440" stroke-width="1.3"/></g></svg></div></div>
<div class="lb" style="left:131px;top:425px">raingutter.jpg</div>
<div class="fr" style="left:259px;top:312px"></div>
<div class="im" style="left:264px;top:329px"><div class="im2"><svg style="left:0;top:0" width="96" height="71" viewBox="0 0 96 71"><defs><filter id="friv" x="-20%" y="-20%" width="140%" height="140%"><feGaussianBlur stdDeviation="2.5"/></filter><filter id="hriv" x="-20%" y="-20%" width="140%" height="140%"><feGaussianBlur stdDeviation="1"/></filter><linearGradient id="rriv" x1="0" y1="0" x2="0" y2="1"><stop offset="0" stop-color="#8a6a50"/><stop offset="1" stop-color="#5a4030"/></linearGradient></defs><rect width="96" height="71" fill="#9a9894"/><g filter="url(#friv)"><rect x="-5" y="-5" width="33" height="80" fill="#aaa69e"/><ellipse cx="34" cy="18" rx="7" ry="11" fill="#7a6450"/><ellipse cx="70" cy="12" rx="25" ry="12" fill="#9c9c9c"/><path d="M24 38 L52 71 L22 71 Z" fill="#6a7484"/></g><g filter="url(#hriv)"><circle cx="50.1" cy="57.3" r="0.9" fill="#6a6458" opacity="0.8"/><circle cx="63.5" cy="7.8" r="0.8" fill="#c8c4bc" opacity="0.8"/><circle cx="69.5" cy="9.8" r="0.7" fill="#b0aca4" opacity="0.8"/><circle cx="14.5" cy="50.1" r="1.4" fill="#b0aca4" opacity="0.8"/><circle cx="65.8" cy="23.5" r="1.5" fill="#c8c4bc" opacity="0.8"/><circle cx="61.3" cy="22.0" r="1.1" fill="#c8c4bc" opacity="0.8"/><circle cx="32.3" cy="30.7" r="0.7" fill="#b0aca4" opacity="0.8"/><circle cx="72.2" cy="25.2" r="1.0" fill="#7a7060" opacity="0.8"/><circle cx="22.9" cy="39.5" r="1.1" fill="#d0ccc4" opacity="0.8"/><circle cx="34.5" cy="19.0" r="0.8" fill="#6a6458" opacity="0.8"/><circle cx="53.1" cy="9.2" r="1.5" fill="#6a6458" opacity="0.8"/><circle cx="30.6" cy="23.6" r="1.2" fill="#b0aca4" opacity="0.8"/><circle cx="26.2" cy="0.7" r="0.6" fill="#6a6458" opacity="0.8"/><circle cx="5.2" cy="14.1" r="0.7" fill="#6a6458" opacity="0.8"/><circle cx="2.0" cy="40.1" r="1.0" fill="#d0ccc4" opacity="0.8"/><circle cx="18.8" cy="17.9" r="1.3" fill="#d0ccc4" opacity="0.8"/><circle cx="87.1" cy="3.6" r="0.9" fill="#b0aca4" opacity="0.8"/><circle cx="85.4" cy="22.4" r="0.6" fill="#6a6458" opacity="0.8"/><circle cx="88.9" cy="6.6" r="1.4" fill="#6a6458" opacity="0.8"/><circle cx="7.2" cy="6.0" r="0.8" fill="#d0ccc4" opacity="0.8"/><circle cx="76.9" cy="3.5" r="1.2" fill="#7a7060" opacity="0.8"/><circle cx="79.1" cy="15.8" r="1.1" fill="#7a7060" opacity="0.8"/><circle cx="42.7" cy="68.7" r="0.8" fill="#d0ccc4" opacity="0.8"/><circle cx="30.6" cy="13.4" r="1.2" fill="#6a6458" opacity="0.8"/><circle cx="49.9" cy="3.8" r="1.6" fill="#6a6458" opacity="0.8"/><circle cx="16.2" cy="68.5" r="1.2" fill="#d0ccc4" opacity="0.8"/><circle cx="35.3" cy="70.9" r="0.9" fill="#d0ccc4" opacity="0.8"/><circle cx="34.1" cy="42.0" r="0.7" fill="#b0aca4" opacity="0.8"/><circle cx="1.0" cy="66.9" r="1.4" fill="#b0aca4" opacity="0.8"/><circle cx="45.6" cy="0.9" r="0.8" fill="#6a6458" opacity="0.8"/><circle cx="0.8" cy="64.0" r="1.4" fill="#6a6458" opacity="0.8"/><circle cx="20.3" cy="19.0" r="1.3" fill="#b0aca4" opacity="0.8"/><circle cx="1.5" cy="8.0" r="1.2" fill="#6a6458" opacity="0.8"/><circle cx="95.3" cy="7.0" r="1.1" fill="#c8c4bc" opacity="0.8"/><circle cx="83.3" cy="2.1" r="1.4" fill="#7a7060" opacity="0.8"/><circle cx="41.1" cy="4.1" r="0.7" fill="#b0aca4" opacity="0.8"/><circle cx="93.5" cy="18.6" r="0.9" fill="#6a6458" opacity="0.8"/><circle cx="52.2" cy="58.2" r="1.0" fill="#7a7060" opacity="0.8"/><circle cx="0.7" cy="53.3" r="0.7" fill="#6a6458" opacity="0.8"/><circle cx="31.2" cy="8.3" r="1.1" fill="#d0ccc4" opacity="0.8"/><circle cx="23.4" cy="35.1" r="1.0" fill="#6a6458" opacity="0.8"/><circle cx="24.5" cy="5.2" r="0.9" fill="#7a7060" opacity="0.8"/><circle cx="19.2" cy="26.0" r="1.1" fill="#d0ccc4" opacity="0.8"/><circle cx="75.3" cy="5.9" r="1.1" fill="#7a7060" opacity="0.8"/><circle cx="37.3" cy="37.2" r="1.3" fill="#d0ccc4" opacity="0.8"/><circle cx="13.7" cy="41.6" r="1.1" fill="#6a6458" opacity="0.8"/><circle cx="83.8" cy="20.0" r="0.7" fill="#7a7060" opacity="0.8"/><circle cx="22.7" cy="64.1" r="1.4" fill="#d0ccc4" opacity="0.8"/><circle cx="41.0" cy="22.8" r="1.4" fill="#7a7060" opacity="0.8"/><circle cx="76.7" cy="20.5" r="1.1" fill="#d0ccc4" opacity="0.8"/><circle cx="48.2" cy="26.4" r="0.9" fill="#c8c4bc" opacity="0.8"/><circle cx="7.4" cy="6.1" r="1.0" fill="#b0aca4" opacity="0.8"/><circle cx="16.4" cy="66.1" r="0.9" fill="#c8c4bc" opacity="0.8"/><circle cx="14.3" cy="10.6" r="0.9" fill="#6a6458" opacity="0.8"/><circle cx="49.3" cy="10.2" r="1.5" fill="#c8c4bc" opacity="0.8"/><circle cx="24.7" cy="15.4" r="1.5" fill="#b0aca4" opacity="0.8"/><circle cx="25.9" cy="5.6" r="1.6" fill="#7a7060" opacity="0.8"/><circle cx="1.1" cy="61.7" r="0.7" fill="#b0aca4" opacity="0.8"/><circle cx="40.6" cy="18.4" r="1.0" fill="#6a6458" opacity="0.8"/><circle cx="74.1" cy="11.5" r="0.8" fill="#7a7060" opacity="0.8"/><path d="M31 27 L96 26 L96 71 L62 71 Z" fill="url(#rriv)"/><path d="M78 30 L96 28 L96 65 Q86 50 78 30 Z" fill="#7a4a38" opacity="0.7"/><path d="M52 52 Q64 50 76 58 Q78 66 70 67 Q60 62 52 52 Z" fill="#90c8d8"/><path d="M42 38 L50 36 L56 44 L48 48 Z M56 40 L62 38 L60 46 Z" fill="#b0b8b8" opacity="0.7"/><circle cx="78" cy="21" r="1.8" fill="#e8e8e8"/></g></svg></div></div>
<div class="lb" style="left:253px;top:425px">riverstreet_rail.jpg</div>
<div class="fr" style="left:15px;top:468px"></div>
<div class="im" style="left:20px;top:485px"><div class="im2"><svg style="left:0;top:0" width="96" height="71" viewBox="0 0 96 71"><defs><filter id="frow" x="-20%" y="-20%" width="140%" height="140%"><feGaussianBlur stdDeviation="0.9"/></filter></defs><rect width="96" height="71" fill="#8a8a84"/><g filter="url(#frow)"><rect x="-2" y="-2" width="100" height="3.5" fill="#2a3432"/><path d="M-2 3 Q10 1 26 5 Q30 9 22 12 L-2 12 Z" fill="#d8d0c4"/><path d="M24 6 Q40 1 58 4 Q62 8 56 12 L30 12 Z" fill="#a09a8c"/><path d="M34 7 Q48 4 60 9 L58 12 L36 12 Z" fill="#ccc4b8"/><path d="M58 3 Q72 1 84 6 L84 12 L60 12 Z" fill="#b8bcb4"/><rect x="74" y="2" width="8" height="10" fill="#90a09a"/><rect x="86" y="1" width="12" height="12" fill="#2a4422"/></g></svg></div></div>
</div>

<div class="a" style="left:769px;top:85px;width:15px;height:498px;background:#c3c3c3;border-left:1px solid #8c8c8c;border-right:1px solid #8c8c8c"></div>
<div class="a" style="left:769px;top:85px;width:15px;height:15px;background:#e6e6e6;border:1px solid #505050;border-top-color:#fff;border-left-color:#fff"></div>
<div class="a" style="left:769px;top:85px;width:15px;height:15px;border:1px solid #555"></div><div class="a" style="left:770px;top:86px;width:13px;height:1px;background:#fff"></div><div class="a" style="left:770px;top:86px;width:1px;height:13px;background:#fff"></div>
<div class="a" style="left:769px;top:99px;width:15px;height:382px;background:#e6e6e6;border:1px solid #555"></div>
<div class="a" style="left:770px;top:100px;width:13px;height:1px;background:#fff"></div><div class="a" style="left:770px;top:100px;width:1px;height:380px;background:#fff"></div>
<div class="a" style="left:769px;top:568px;width:15px;height:15px;background:#e6e6e6;border:1px solid #555"></div><div class="a" style="left:770px;top:569px;width:13px;height:1px;background:#fff"></div><div class="a" style="left:770px;top:569px;width:1px;height:13px;background:#fff"></div>
<svg style="left:765px;top:85px" width="22" height="500" viewBox="765 85 22 500">
<g fill="#1a1a1a"><rect x="776" y="90" width="2" height="1"/><rect x="775" y="91" width="4" height="1"/><rect x="774" y="92" width="6" height="1"/><rect x="773" y="93" width="8" height="1"/><rect x="774" y="94" width="2" height="1"/><rect x="778" y="94" width="2" height="1"/></g>
<g fill="#1a1a1a"><rect x="774" y="573" width="2" height="1"/><rect x="778" y="573" width="2" height="1"/><rect x="773" y="574" width="8" height="1"/><rect x="774" y="575" width="6" height="1"/><rect x="775" y="576" width="4" height="1"/><rect x="776" y="577" width="2" height="1"/></g>
<path d="M773 287l6-5M773 292l6-5M773 297l6-5" stroke="#888" stroke-width="1"/>
</svg>

<div class="a" style="left:282px;top:582px;width:487px;height:1px;background:#fafafa"></div>
<div class="a" style="left:3px;top:583px;width:781px;height:1px;background:#b4b4b4"></div>
<div class="a" style="left:3px;top:584px;width:380px;height:1px;background:#f4f4f4"></div>
<div class="t" style="left:13px;top:586px;color:#282828">10 images (1.9 MB), 1 selected (324.0 K)</div>
<div class="a" style="left:383px;top:583px;width:342px;height:20px;border:1px solid #8c8c8c;border-right-color:#f4f4f4;border-bottom-color:#f4f4f4"></div>
<div class="a" style="left:724px;top:583px;width:1px;height:20px;background:#9a9a9a"></div>
<div class="a" style="left:725px;top:583px;width:59px;height:19px;background:#c4c4c4;border-right:1px solid #9a9a9a"></div>
<div class="t" style="left:389px;top:586px;color:#282828">1600 x 1200 pixels (16%) - 324.0 K - 06 Dec 2002, 17:09</div>
</body></html>
